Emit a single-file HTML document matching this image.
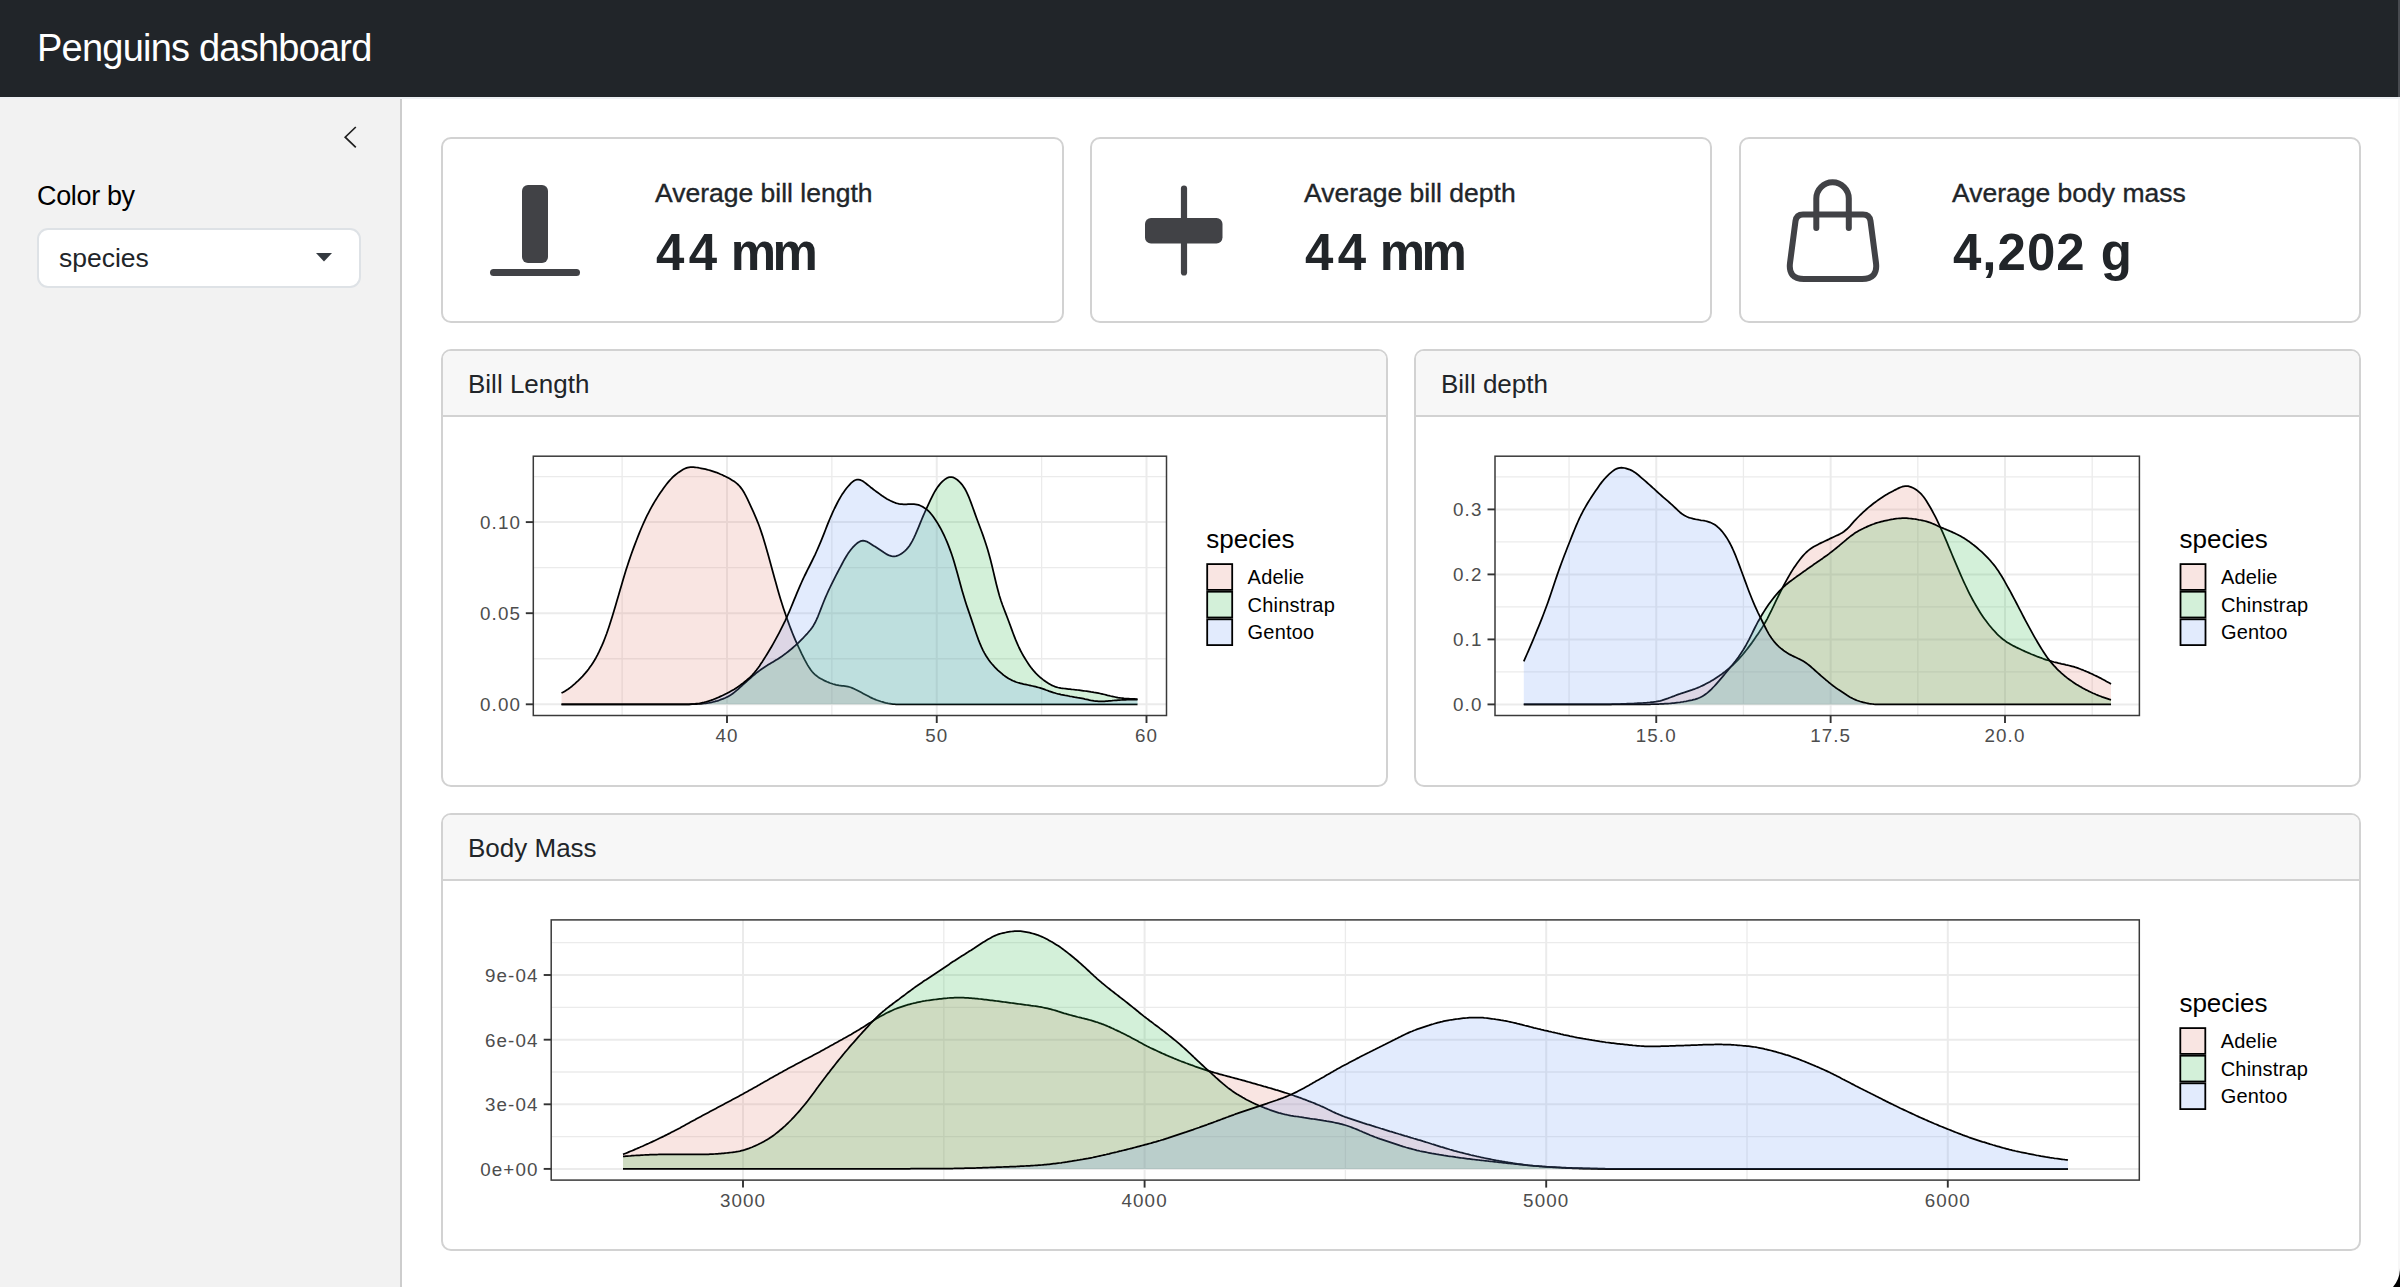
<!DOCTYPE html>
<html>
<head>
<meta charset="utf-8">
<title>Penguins dashboard</title>
<style>
html,body{margin:0;padding:0;}
body{width:2400px;height:1287px;overflow:hidden;position:relative;background:#fff;font-family:"Liberation Sans",sans-serif;color:#212529;}
.abs{position:absolute;}
#hdr{left:0;top:0;width:2400px;height:97px;background:#212529;}
#hdrline{left:0;top:97px;width:2400px;height:2px;background:#edf0f3;}
#title{left:37px;top:26px;font-size:38px;line-height:44px;color:#fff;letter-spacing:-0.78px;white-space:nowrap;}
#side{left:0;top:99px;width:400px;height:1188px;background:#f2f2f2;border-right:2px solid #cdcdcd;}
#colorby{left:37px;top:180px;font-size:27px;line-height:32px;color:#000;letter-spacing:-0.35px;white-space:nowrap;}
#select{left:37px;top:228px;width:320px;height:56px;background:#fff;border:2px solid #dee2e6;border-radius:11px;}
#selval{left:59px;top:243px;font-size:26.5px;line-height:30px;color:#212529;white-space:nowrap;}
.card{position:absolute;box-sizing:border-box;border:2px solid #d2d2d2;border-radius:10px;background:#fff;overflow:hidden;}
.vb-title{position:absolute;font-size:26.5px;line-height:29px;color:#212529;white-space:nowrap;-webkit-text-stroke:0.35px #212529;}
.vb-val{position:absolute;font-size:51px;line-height:56px;font-weight:bold;color:#212529;white-space:nowrap;letter-spacing:-0.2px;}
.chd{position:absolute;left:0;top:0;right:0;height:64px;background:#f7f7f7;border-bottom:2px solid #d2d2d2;}
.chd span{position:absolute;left:25px;top:18px;font-size:26px;line-height:30px;color:#212529;white-space:nowrap;}
svg text.ax{font-family:"Liberation Sans",sans-serif;font-size:18.8px;fill:#4d4d4d;letter-spacing:1.1px;}
svg text.lt{font-family:"Liberation Sans",sans-serif;font-size:26px;fill:#000;}
svg text.ll{font-family:"Liberation Sans",sans-serif;font-size:20px;fill:#000;letter-spacing:0.2px;}
</style>
</head>
<body>
<div id="hdr" class="abs"></div>
<div id="hdrline" class="abs"></div>
<div id="title" class="abs">Penguins dashboard</div>
<div class="abs" style="left:2398px;top:0;width:2px;height:97px;background:#484b50;"></div>
<div class="abs" style="left:2398px;top:99px;width:2px;height:1188px;background:#f7f7f7;"></div>

<div id="side" class="abs"></div>
<svg class="abs" style="left:340px;top:122px" width="24" height="30" viewBox="0 0 24 30">
  <path d="M15.8 5 L5.2 15.2 L15.8 25.4" fill="none" stroke="#1f1f1f" stroke-width="1.7"/>
</svg>
<div id="colorby" class="abs">Color by</div>
<div id="select" class="abs"></div>
<div id="selval" class="abs">species</div>
<svg class="abs" style="left:314px;top:250px" width="20" height="14" viewBox="0 0 20 14">
  <path d="M2 3 L18 3 L10 11.5 Z" fill="#343a40"/>
</svg>

<!-- value boxes -->
<div class="card" style="left:441px;top:137px;width:623px;height:186px;">
  <div class="vb-title" style="left:212px;top:40px;">Average bill length</div>
  <div class="vb-val" style="left:213px;top:86px;"><span style="letter-spacing:4.3px">4</span>4 <span style="letter-spacing:-3.6px">m</span>m</div>
</div>
<div class="card" style="left:1090px;top:137px;width:622px;height:186px;">
  <div class="vb-title" style="left:212px;top:40px;">Average bill depth</div>
  <div class="vb-val" style="left:213px;top:86px;"><span style="letter-spacing:4.3px">4</span>4 <span style="letter-spacing:-3.6px">m</span>m</div>
</div>
<div class="card" style="left:1739px;top:137px;width:622px;height:186px;">
  <div class="vb-title" style="left:211px;top:40px;">Average body mass</div>
  <div class="vb-val" style="left:212px;top:86px;letter-spacing:1px;">4,202 g</div>
</div>

<!-- icons -->
<svg class="abs" style="left:0;top:0" width="2400" height="330">
  <rect x="522" y="185" width="26" height="78" rx="6" fill="#414246"/>
  <rect x="490" y="269" width="90" height="7" rx="3.5" fill="#414246"/>
  <line x1="1184" y1="188.5" x2="1184" y2="272.5" stroke="#414246" stroke-width="6.2" stroke-linecap="round"/>
  <rect x="1145" y="218" width="77.5" height="25.5" rx="6" fill="#414246"/>
  <path d="M1803 214.5 L1863 214.5 Q1869.5 214.5 1870.5 221 L1876 263 Q1878 279 1862 279 L1804 279 Q1788 279 1790 263 L1795.5 221 Q1796.5 214.5 1803 214.5 Z" fill="none" stroke="#414246" stroke-width="6"/>
  <path d="M1816.3 228 L1816.3 198.5 A16.25 16.25 0 0 1 1848.8 198.5 L1848.8 228" fill="none" stroke="#414246" stroke-width="6" stroke-linecap="round"/>
</svg>

<!-- chart cards -->
<div class="card" style="left:441px;top:349px;width:947px;height:438px;">
  <div class="chd"><span>Bill Length</span></div>
</div>
<div class="card" style="left:1414px;top:349px;width:947px;height:438px;">
  <div class="chd"><span>Bill depth</span></div>
</div>
<div class="card" style="left:441px;top:813px;width:1920px;height:438px;">
  <div class="chd"><span>Body Mass</span></div>
</div>

<svg class="abs" style="left:0;top:0" width="2400" height="1287">
<line x1="533.3" y1="658.75" x2="1166.5" y2="658.75" stroke="#ebebeb" stroke-width="1.3"/>
<line x1="533.3" y1="567.65" x2="1166.5" y2="567.65" stroke="#ebebeb" stroke-width="1.3"/>
<line x1="533.3" y1="476.55" x2="1166.5" y2="476.55" stroke="#ebebeb" stroke-width="1.3"/>
<line x1="622.125" y1="456.2" x2="622.125" y2="715.5" stroke="#ebebeb" stroke-width="1.3"/>
<line x1="831.875" y1="456.2" x2="831.875" y2="715.5" stroke="#ebebeb" stroke-width="1.3"/>
<line x1="1041.625" y1="456.2" x2="1041.625" y2="715.5" stroke="#ebebeb" stroke-width="1.3"/>
<line x1="533.3" y1="704.3" x2="1166.5" y2="704.3" stroke="#ebebeb" stroke-width="2.0"/>
<line x1="533.3" y1="613.2" x2="1166.5" y2="613.2" stroke="#ebebeb" stroke-width="2.0"/>
<line x1="533.3" y1="522.1" x2="1166.5" y2="522.1" stroke="#ebebeb" stroke-width="2.0"/>
<line x1="727.0" y1="456.2" x2="727.0" y2="715.5" stroke="#ebebeb" stroke-width="2.0"/>
<line x1="936.75" y1="456.2" x2="936.75" y2="715.5" stroke="#ebebeb" stroke-width="2.0"/>
<line x1="1146.5" y1="456.2" x2="1146.5" y2="715.5" stroke="#ebebeb" stroke-width="2.0"/>
<path d="M561.5 693.1L563.0 692.3L564.5 691.4L566.0 690.5L567.5 689.6L569.0 688.5L570.5 687.4L572.0 686.2L573.5 684.9L575.0 683.6L576.5 682.2L578.0 680.8L579.5 679.3L581.0 677.8L582.5 676.3L584.0 674.6L585.5 672.9L587.0 671.1L588.5 669.2L590.0 667.1L591.5 665.0L593.0 662.7L594.5 660.3L596.0 657.7L597.5 654.9L599.0 651.9L600.5 648.7L602.0 645.4L603.5 641.8L605.0 638.0L606.5 634.0L608.0 629.7L609.5 625.2L611.0 620.5L612.5 615.7L614.0 610.7L615.5 605.7L617.0 600.6L618.5 595.5L620.0 590.3L621.5 585.2L623.0 580.0L624.5 575.0L626.0 570.1L627.5 565.4L629.0 560.9L630.5 556.5L632.0 552.2L633.5 548.1L635.0 544.1L636.5 540.2L638.0 536.4L639.5 532.6L641.0 529.0L642.5 525.5L644.0 522.1L645.5 518.8L647.0 515.7L648.5 512.8L650.0 509.9L651.5 507.1L653.0 504.5L654.5 501.9L656.0 499.5L657.5 497.1L659.0 494.8L660.5 492.6L662.0 490.4L663.5 488.3L665.0 486.2L666.5 484.3L668.0 482.4L669.5 480.6L671.0 479.0L672.5 477.4L674.0 476.0L675.5 474.8L677.0 473.6L678.5 472.4L680.0 471.4L681.5 470.4L683.0 469.5L684.5 468.7L686.0 468.1L687.5 467.6L689.0 467.3L690.5 467.1L692.0 467.1L693.5 467.2L695.0 467.3L696.5 467.5L698.0 467.7L699.5 468.0L701.0 468.3L702.5 468.6L704.0 468.9L705.5 469.2L707.0 469.6L708.5 470.0L710.0 470.4L711.5 470.8L713.0 471.3L714.5 471.8L716.0 472.3L717.5 472.9L719.0 473.5L720.5 474.2L722.0 474.8L723.5 475.6L725.0 476.3L726.5 477.0L728.0 477.8L729.5 478.6L731.0 479.5L732.5 480.4L734.0 481.3L735.5 482.4L737.0 483.6L738.5 485.0L740.0 486.6L741.5 488.6L743.0 490.8L744.5 493.3L746.0 496.2L747.5 499.2L749.0 502.4L750.5 505.6L752.0 508.9L753.5 512.2L755.0 515.6L756.5 519.1L758.0 522.8L759.5 526.8L761.0 531.1L762.5 535.6L764.0 540.5L765.5 545.5L767.0 550.7L768.5 556.1L770.0 561.5L771.5 566.9L773.0 572.4L774.5 577.9L776.0 583.3L777.5 588.7L779.0 593.9L780.5 598.9L782.0 603.7L783.5 608.4L785.0 612.8L786.5 617.2L788.0 621.4L789.5 625.5L791.0 629.4L792.5 633.2L794.0 636.9L795.5 640.4L797.0 643.7L798.5 647.0L800.0 650.2L801.5 653.4L803.0 656.4L804.5 659.4L806.0 662.2L807.5 664.9L809.0 667.3L810.5 669.5L812.0 671.5L813.5 673.1L815.0 674.6L816.5 675.8L818.0 676.9L819.5 677.9L821.0 678.8L822.5 679.6L824.0 680.4L825.5 681.1L827.0 681.8L828.5 682.4L830.0 683.0L831.5 683.5L833.0 684.0L834.5 684.4L836.0 684.8L837.5 685.1L839.0 685.4L840.5 685.6L842.0 685.8L843.5 685.9L845.0 686.1L846.5 686.3L848.0 686.6L849.5 687.0L851.0 687.5L852.5 688.1L854.0 688.7L855.5 689.5L857.0 690.2L858.5 691.0L860.0 691.8L861.5 692.6L863.0 693.4L864.5 694.2L866.0 695.0L867.5 695.8L869.0 696.6L870.5 697.4L872.0 698.1L873.5 698.8L875.0 699.4L876.5 700.0L878.0 700.5L879.5 701.0L881.0 701.5L882.5 701.9L884.0 702.4L885.5 702.8L887.0 703.1L888.5 703.5L890.0 703.7L891.5 703.9L893.0 704.1L894.5 704.2L896.0 704.3L897.5 704.3L899.0 704.3L900.5 704.3L902.0 704.3L903.5 704.3L905.0 704.3L906.5 704.3L908.0 704.3L909.5 704.3L911.0 704.3L912.5 704.3L914.0 704.3L915.5 704.3L917.0 704.3L918.5 704.3L920.0 704.3L921.5 704.3L923.0 704.3L924.5 704.3L926.0 704.3L927.5 704.3L929.0 704.3L930.5 704.3L932.0 704.3L933.5 704.3L935.0 704.3L936.5 704.3L938.0 704.3L939.5 704.3L941.0 704.3L942.5 704.3L944.0 704.3L945.5 704.3L947.0 704.3L948.5 704.3L950.0 704.3L951.5 704.3L953.0 704.3L954.5 704.3L956.0 704.3L957.5 704.3L959.0 704.3L960.5 704.3L962.0 704.3L963.5 704.3L965.0 704.3L966.5 704.3L968.0 704.3L969.5 704.3L971.0 704.3L972.5 704.3L974.0 704.3L975.5 704.3L977.0 704.3L978.5 704.3L980.0 704.3L981.5 704.3L983.0 704.3L984.5 704.3L986.0 704.3L987.5 704.3L989.0 704.3L990.5 704.3L992.0 704.3L993.5 704.3L995.0 704.3L996.5 704.3L998.0 704.3L999.5 704.3L1001.0 704.3L1002.5 704.3L1004.0 704.3L1005.5 704.3L1007.0 704.3L1008.5 704.3L1010.0 704.3L1011.5 704.3L1013.0 704.3L1014.5 704.3L1016.0 704.3L1017.5 704.3L1019.0 704.3L1020.5 704.3L1022.0 704.3L1023.5 704.3L1025.0 704.3L1026.5 704.3L1028.0 704.3L1029.5 704.3L1031.0 704.3L1032.5 704.3L1034.0 704.3L1035.5 704.3L1037.0 704.3L1038.5 704.3L1040.0 704.3L1041.5 704.3L1043.0 704.3L1044.5 704.3L1046.0 704.3L1047.5 704.3L1049.0 704.3L1050.5 704.3L1052.0 704.3L1053.5 704.3L1055.0 704.3L1056.5 704.3L1058.0 704.3L1059.5 704.3L1061.0 704.3L1062.5 704.3L1064.0 704.3L1065.5 704.3L1067.0 704.3L1068.5 704.3L1070.0 704.3L1071.5 704.3L1073.0 704.3L1074.5 704.3L1076.0 704.3L1077.5 704.3L1079.0 704.3L1080.5 704.3L1082.0 704.3L1083.5 704.3L1085.0 704.3L1086.5 704.3L1088.0 704.3L1089.5 704.3L1091.0 704.3L1092.5 704.3L1094.0 704.3L1095.5 704.3L1097.0 704.3L1098.5 704.3L1100.0 704.3L1101.5 704.3L1103.0 704.3L1104.5 704.3L1106.0 704.3L1107.5 704.3L1109.0 704.3L1110.5 704.3L1112.0 704.3L1113.5 704.3L1115.0 704.3L1116.5 704.3L1118.0 704.3L1119.5 704.3L1121.0 704.3L1122.5 704.3L1124.0 704.3L1125.5 704.3L1127.0 704.3L1128.5 704.3L1130.0 704.3L1131.5 704.3L1133.0 704.3L1134.5 704.3L1136.0 704.3L1137.5 704.3 L1137.5 704.3 L561.5 704.3 Z" fill="#E27B70" fill-opacity="0.2" stroke="none"/>
<path d="M561.5 693.1L563.0 692.3L564.5 691.4L566.0 690.5L567.5 689.6L569.0 688.5L570.5 687.4L572.0 686.2L573.5 684.9L575.0 683.6L576.5 682.2L578.0 680.8L579.5 679.3L581.0 677.8L582.5 676.3L584.0 674.6L585.5 672.9L587.0 671.1L588.5 669.2L590.0 667.1L591.5 665.0L593.0 662.7L594.5 660.3L596.0 657.7L597.5 654.9L599.0 651.9L600.5 648.7L602.0 645.4L603.5 641.8L605.0 638.0L606.5 634.0L608.0 629.7L609.5 625.2L611.0 620.5L612.5 615.7L614.0 610.7L615.5 605.7L617.0 600.6L618.5 595.5L620.0 590.3L621.5 585.2L623.0 580.0L624.5 575.0L626.0 570.1L627.5 565.4L629.0 560.9L630.5 556.5L632.0 552.2L633.5 548.1L635.0 544.1L636.5 540.2L638.0 536.4L639.5 532.6L641.0 529.0L642.5 525.5L644.0 522.1L645.5 518.8L647.0 515.7L648.5 512.8L650.0 509.9L651.5 507.1L653.0 504.5L654.5 501.9L656.0 499.5L657.5 497.1L659.0 494.8L660.5 492.6L662.0 490.4L663.5 488.3L665.0 486.2L666.5 484.3L668.0 482.4L669.5 480.6L671.0 479.0L672.5 477.4L674.0 476.0L675.5 474.8L677.0 473.6L678.5 472.4L680.0 471.4L681.5 470.4L683.0 469.5L684.5 468.7L686.0 468.1L687.5 467.6L689.0 467.3L690.5 467.1L692.0 467.1L693.5 467.2L695.0 467.3L696.5 467.5L698.0 467.7L699.5 468.0L701.0 468.3L702.5 468.6L704.0 468.9L705.5 469.2L707.0 469.6L708.5 470.0L710.0 470.4L711.5 470.8L713.0 471.3L714.5 471.8L716.0 472.3L717.5 472.9L719.0 473.5L720.5 474.2L722.0 474.8L723.5 475.6L725.0 476.3L726.5 477.0L728.0 477.8L729.5 478.6L731.0 479.5L732.5 480.4L734.0 481.3L735.5 482.4L737.0 483.6L738.5 485.0L740.0 486.6L741.5 488.6L743.0 490.8L744.5 493.3L746.0 496.2L747.5 499.2L749.0 502.4L750.5 505.6L752.0 508.9L753.5 512.2L755.0 515.6L756.5 519.1L758.0 522.8L759.5 526.8L761.0 531.1L762.5 535.6L764.0 540.5L765.5 545.5L767.0 550.7L768.5 556.1L770.0 561.5L771.5 566.9L773.0 572.4L774.5 577.9L776.0 583.3L777.5 588.7L779.0 593.9L780.5 598.9L782.0 603.7L783.5 608.4L785.0 612.8L786.5 617.2L788.0 621.4L789.5 625.5L791.0 629.4L792.5 633.2L794.0 636.9L795.5 640.4L797.0 643.7L798.5 647.0L800.0 650.2L801.5 653.4L803.0 656.4L804.5 659.4L806.0 662.2L807.5 664.9L809.0 667.3L810.5 669.5L812.0 671.5L813.5 673.1L815.0 674.6L816.5 675.8L818.0 676.9L819.5 677.9L821.0 678.8L822.5 679.6L824.0 680.4L825.5 681.1L827.0 681.8L828.5 682.4L830.0 683.0L831.5 683.5L833.0 684.0L834.5 684.4L836.0 684.8L837.5 685.1L839.0 685.4L840.5 685.6L842.0 685.8L843.5 685.9L845.0 686.1L846.5 686.3L848.0 686.6L849.5 687.0L851.0 687.5L852.5 688.1L854.0 688.7L855.5 689.5L857.0 690.2L858.5 691.0L860.0 691.8L861.5 692.6L863.0 693.4L864.5 694.2L866.0 695.0L867.5 695.8L869.0 696.6L870.5 697.4L872.0 698.1L873.5 698.8L875.0 699.4L876.5 700.0L878.0 700.5L879.5 701.0L881.0 701.5L882.5 701.9L884.0 702.4L885.5 702.8L887.0 703.1L888.5 703.5L890.0 703.7L891.5 703.9L893.0 704.1L894.5 704.2L896.0 704.3L897.5 704.3L899.0 704.3L900.5 704.3L902.0 704.3L903.5 704.3L905.0 704.3L906.5 704.3L908.0 704.3L909.5 704.3L911.0 704.3L912.5 704.3L914.0 704.3L915.5 704.3L917.0 704.3L918.5 704.3L920.0 704.3L921.5 704.3L923.0 704.3L924.5 704.3L926.0 704.3L927.5 704.3L929.0 704.3L930.5 704.3L932.0 704.3L933.5 704.3L935.0 704.3L936.5 704.3L938.0 704.3L939.5 704.3L941.0 704.3L942.5 704.3L944.0 704.3L945.5 704.3L947.0 704.3L948.5 704.3L950.0 704.3L951.5 704.3L953.0 704.3L954.5 704.3L956.0 704.3L957.5 704.3L959.0 704.3L960.5 704.3L962.0 704.3L963.5 704.3L965.0 704.3L966.5 704.3L968.0 704.3L969.5 704.3L971.0 704.3L972.5 704.3L974.0 704.3L975.5 704.3L977.0 704.3L978.5 704.3L980.0 704.3L981.5 704.3L983.0 704.3L984.5 704.3L986.0 704.3L987.5 704.3L989.0 704.3L990.5 704.3L992.0 704.3L993.5 704.3L995.0 704.3L996.5 704.3L998.0 704.3L999.5 704.3L1001.0 704.3L1002.5 704.3L1004.0 704.3L1005.5 704.3L1007.0 704.3L1008.5 704.3L1010.0 704.3L1011.5 704.3L1013.0 704.3L1014.5 704.3L1016.0 704.3L1017.5 704.3L1019.0 704.3L1020.5 704.3L1022.0 704.3L1023.5 704.3L1025.0 704.3L1026.5 704.3L1028.0 704.3L1029.5 704.3L1031.0 704.3L1032.5 704.3L1034.0 704.3L1035.5 704.3L1037.0 704.3L1038.5 704.3L1040.0 704.3L1041.5 704.3L1043.0 704.3L1044.5 704.3L1046.0 704.3L1047.5 704.3L1049.0 704.3L1050.5 704.3L1052.0 704.3L1053.5 704.3L1055.0 704.3L1056.5 704.3L1058.0 704.3L1059.5 704.3L1061.0 704.3L1062.5 704.3L1064.0 704.3L1065.5 704.3L1067.0 704.3L1068.5 704.3L1070.0 704.3L1071.5 704.3L1073.0 704.3L1074.5 704.3L1076.0 704.3L1077.5 704.3L1079.0 704.3L1080.5 704.3L1082.0 704.3L1083.5 704.3L1085.0 704.3L1086.5 704.3L1088.0 704.3L1089.5 704.3L1091.0 704.3L1092.5 704.3L1094.0 704.3L1095.5 704.3L1097.0 704.3L1098.5 704.3L1100.0 704.3L1101.5 704.3L1103.0 704.3L1104.5 704.3L1106.0 704.3L1107.5 704.3L1109.0 704.3L1110.5 704.3L1112.0 704.3L1113.5 704.3L1115.0 704.3L1116.5 704.3L1118.0 704.3L1119.5 704.3L1121.0 704.3L1122.5 704.3L1124.0 704.3L1125.5 704.3L1127.0 704.3L1128.5 704.3L1130.0 704.3L1131.5 704.3L1133.0 704.3L1134.5 704.3L1136.0 704.3L1137.5 704.3" fill="none" stroke="#000" stroke-width="1.75" stroke-linejoin="round"/>
<path d="M561.5 704.3L563.0 704.3L564.5 704.3L566.0 704.3L567.5 704.3L569.0 704.3L570.5 704.3L572.0 704.3L573.5 704.3L575.0 704.3L576.5 704.3L578.0 704.3L579.5 704.3L581.0 704.3L582.5 704.3L584.0 704.3L585.5 704.3L587.0 704.3L588.5 704.3L590.0 704.3L591.5 704.3L593.0 704.3L594.5 704.3L596.0 704.3L597.5 704.3L599.0 704.3L600.5 704.3L602.0 704.3L603.5 704.3L605.0 704.3L606.5 704.3L608.0 704.3L609.5 704.3L611.0 704.3L612.5 704.3L614.0 704.3L615.5 704.3L617.0 704.3L618.5 704.3L620.0 704.3L621.5 704.3L623.0 704.3L624.5 704.3L626.0 704.3L627.5 704.3L629.0 704.3L630.5 704.3L632.0 704.3L633.5 704.3L635.0 704.3L636.5 704.3L638.0 704.3L639.5 704.3L641.0 704.3L642.5 704.3L644.0 704.3L645.5 704.3L647.0 704.3L648.5 704.3L650.0 704.3L651.5 704.3L653.0 704.3L654.5 704.3L656.0 704.3L657.5 704.3L659.0 704.3L660.5 704.3L662.0 704.3L663.5 704.3L665.0 704.3L666.5 704.3L668.0 704.3L669.5 704.3L671.0 704.3L672.5 704.3L674.0 704.3L675.5 704.3L677.0 704.3L678.5 704.3L680.0 704.3L681.5 704.3L683.0 704.3L684.5 704.3L686.0 704.3L687.5 704.3L689.0 704.3L690.5 704.3L692.0 704.2L693.5 704.2L695.0 704.2L696.5 704.1L698.0 704.0L699.5 703.9L701.0 703.8L702.5 703.7L704.0 703.5L705.5 703.4L707.0 703.2L708.5 703.0L710.0 702.7L711.5 702.4L713.0 702.0L714.5 701.7L716.0 701.2L717.5 700.8L719.0 700.3L720.5 699.7L722.0 699.2L723.5 698.6L725.0 698.0L726.5 697.3L728.0 696.6L729.5 695.7L731.0 694.8L732.5 693.8L734.0 692.6L735.5 691.4L737.0 690.1L738.5 688.8L740.0 687.4L741.5 686.1L743.0 684.7L744.5 683.3L746.0 682.0L747.5 680.7L749.0 679.4L750.5 678.1L752.0 676.7L753.5 675.4L755.0 674.2L756.5 672.9L758.0 671.7L759.5 670.6L761.0 669.5L762.5 668.5L764.0 667.5L765.5 666.5L767.0 665.6L768.5 664.6L770.0 663.7L771.5 662.8L773.0 661.9L774.5 661.0L776.0 660.1L777.5 659.2L779.0 658.2L780.5 657.2L782.0 656.2L783.5 655.1L785.0 654.0L786.5 652.9L788.0 651.7L789.5 650.5L791.0 649.3L792.5 648.0L794.0 646.7L795.5 645.4L797.0 644.0L798.5 642.6L800.0 641.1L801.5 639.6L803.0 638.1L804.5 636.5L806.0 634.9L807.5 633.3L809.0 631.5L810.5 629.7L812.0 627.7L813.5 625.4L815.0 622.8L816.5 619.7L818.0 616.3L819.5 612.5L821.0 608.6L822.5 604.8L824.0 601.0L825.5 597.4L827.0 594.0L828.5 590.7L830.0 587.5L831.5 584.4L833.0 581.3L834.5 578.3L836.0 575.4L837.5 572.5L839.0 569.6L840.5 566.8L842.0 564.0L843.5 561.2L845.0 558.5L846.5 556.0L848.0 553.6L849.5 551.5L851.0 549.5L852.5 547.7L854.0 546.1L855.5 544.6L857.0 543.3L858.5 542.2L860.0 541.4L861.5 540.9L863.0 540.7L864.5 540.9L866.0 541.3L867.5 541.9L869.0 542.8L870.5 543.7L872.0 544.7L873.5 545.7L875.0 546.6L876.5 547.6L878.0 548.6L879.5 549.6L881.0 550.6L882.5 551.6L884.0 552.6L885.5 553.5L887.0 554.4L888.5 555.1L890.0 555.7L891.5 556.2L893.0 556.4L894.5 556.4L896.0 556.1L897.5 555.7L899.0 555.0L900.5 554.2L902.0 553.2L903.5 552.1L905.0 550.8L906.5 549.3L908.0 547.6L909.5 545.7L911.0 543.3L912.5 540.6L914.0 537.6L915.5 534.4L917.0 530.9L918.5 527.3L920.0 523.6L921.5 520.0L923.0 516.4L924.5 513.0L926.0 509.6L927.5 506.3L929.0 503.1L930.5 499.9L932.0 496.9L933.5 493.9L935.0 491.2L936.5 488.7L938.0 486.6L939.5 484.6L941.0 482.9L942.5 481.4L944.0 480.1L945.5 478.9L947.0 478.0L948.5 477.4L950.0 477.0L951.5 477.0L953.0 477.4L954.5 478.0L956.0 478.9L957.5 480.0L959.0 481.4L960.5 482.9L962.0 484.6L963.5 486.7L965.0 489.0L966.5 491.8L968.0 495.1L969.5 498.7L971.0 502.6L972.5 506.7L974.0 510.9L975.5 515.1L977.0 519.2L978.5 523.2L980.0 527.2L981.5 531.3L983.0 535.4L984.5 539.7L986.0 544.2L987.5 549.0L989.0 554.2L990.5 559.8L992.0 565.8L993.5 572.1L995.0 578.5L996.5 584.7L998.0 590.5L999.5 595.9L1001.0 600.7L1002.5 605.0L1004.0 609.0L1005.5 612.9L1007.0 616.8L1008.5 620.7L1010.0 624.8L1011.5 628.9L1013.0 633.0L1014.5 636.9L1016.0 640.7L1017.5 644.2L1019.0 647.5L1020.5 650.5L1022.0 653.3L1023.5 656.0L1025.0 658.5L1026.5 660.9L1028.0 663.2L1029.5 665.4L1031.0 667.5L1032.5 669.4L1034.0 671.2L1035.5 672.9L1037.0 674.4L1038.5 675.8L1040.0 677.2L1041.5 678.4L1043.0 679.6L1044.5 680.7L1046.0 681.8L1047.5 682.8L1049.0 683.7L1050.5 684.6L1052.0 685.4L1053.5 686.0L1055.0 686.6L1056.5 687.1L1058.0 687.5L1059.5 687.8L1061.0 688.1L1062.5 688.3L1064.0 688.5L1065.5 688.7L1067.0 688.9L1068.5 689.1L1070.0 689.2L1071.5 689.4L1073.0 689.5L1074.5 689.7L1076.0 689.8L1077.5 690.0L1079.0 690.2L1080.5 690.4L1082.0 690.6L1083.5 690.8L1085.0 691.0L1086.5 691.2L1088.0 691.4L1089.5 691.6L1091.0 691.9L1092.5 692.1L1094.0 692.4L1095.5 692.6L1097.0 692.9L1098.5 693.2L1100.0 693.5L1101.5 693.8L1103.0 694.2L1104.5 694.5L1106.0 694.9L1107.5 695.3L1109.0 695.6L1110.5 696.0L1112.0 696.3L1113.5 696.7L1115.0 697.0L1116.5 697.3L1118.0 697.6L1119.5 697.8L1121.0 698.0L1122.5 698.2L1124.0 698.4L1125.5 698.5L1127.0 698.6L1128.5 698.7L1130.0 698.8L1131.5 698.8L1133.0 698.9L1134.5 698.9L1136.0 699.0L1137.5 699.0 L1137.5 704.3 L561.5 704.3 Z" fill="#24B441" fill-opacity="0.2" stroke="none"/>
<path d="M561.5 704.3L563.0 704.3L564.5 704.3L566.0 704.3L567.5 704.3L569.0 704.3L570.5 704.3L572.0 704.3L573.5 704.3L575.0 704.3L576.5 704.3L578.0 704.3L579.5 704.3L581.0 704.3L582.5 704.3L584.0 704.3L585.5 704.3L587.0 704.3L588.5 704.3L590.0 704.3L591.5 704.3L593.0 704.3L594.5 704.3L596.0 704.3L597.5 704.3L599.0 704.3L600.5 704.3L602.0 704.3L603.5 704.3L605.0 704.3L606.5 704.3L608.0 704.3L609.5 704.3L611.0 704.3L612.5 704.3L614.0 704.3L615.5 704.3L617.0 704.3L618.5 704.3L620.0 704.3L621.5 704.3L623.0 704.3L624.5 704.3L626.0 704.3L627.5 704.3L629.0 704.3L630.5 704.3L632.0 704.3L633.5 704.3L635.0 704.3L636.5 704.3L638.0 704.3L639.5 704.3L641.0 704.3L642.5 704.3L644.0 704.3L645.5 704.3L647.0 704.3L648.5 704.3L650.0 704.3L651.5 704.3L653.0 704.3L654.5 704.3L656.0 704.3L657.5 704.3L659.0 704.3L660.5 704.3L662.0 704.3L663.5 704.3L665.0 704.3L666.5 704.3L668.0 704.3L669.5 704.3L671.0 704.3L672.5 704.3L674.0 704.3L675.5 704.3L677.0 704.3L678.5 704.3L680.0 704.3L681.5 704.3L683.0 704.3L684.5 704.3L686.0 704.3L687.5 704.3L689.0 704.3L690.5 704.3L692.0 704.2L693.5 704.2L695.0 704.2L696.5 704.1L698.0 704.0L699.5 703.9L701.0 703.8L702.5 703.7L704.0 703.5L705.5 703.4L707.0 703.2L708.5 703.0L710.0 702.7L711.5 702.4L713.0 702.0L714.5 701.7L716.0 701.2L717.5 700.8L719.0 700.3L720.5 699.7L722.0 699.2L723.5 698.6L725.0 698.0L726.5 697.3L728.0 696.6L729.5 695.7L731.0 694.8L732.5 693.8L734.0 692.6L735.5 691.4L737.0 690.1L738.5 688.8L740.0 687.4L741.5 686.1L743.0 684.7L744.5 683.3L746.0 682.0L747.5 680.7L749.0 679.4L750.5 678.1L752.0 676.7L753.5 675.4L755.0 674.2L756.5 672.9L758.0 671.7L759.5 670.6L761.0 669.5L762.5 668.5L764.0 667.5L765.5 666.5L767.0 665.6L768.5 664.6L770.0 663.7L771.5 662.8L773.0 661.9L774.5 661.0L776.0 660.1L777.5 659.2L779.0 658.2L780.5 657.2L782.0 656.2L783.5 655.1L785.0 654.0L786.5 652.9L788.0 651.7L789.5 650.5L791.0 649.3L792.5 648.0L794.0 646.7L795.5 645.4L797.0 644.0L798.5 642.6L800.0 641.1L801.5 639.6L803.0 638.1L804.5 636.5L806.0 634.9L807.5 633.3L809.0 631.5L810.5 629.7L812.0 627.7L813.5 625.4L815.0 622.8L816.5 619.7L818.0 616.3L819.5 612.5L821.0 608.6L822.5 604.8L824.0 601.0L825.5 597.4L827.0 594.0L828.5 590.7L830.0 587.5L831.5 584.4L833.0 581.3L834.5 578.3L836.0 575.4L837.5 572.5L839.0 569.6L840.5 566.8L842.0 564.0L843.5 561.2L845.0 558.5L846.5 556.0L848.0 553.6L849.5 551.5L851.0 549.5L852.5 547.7L854.0 546.1L855.5 544.6L857.0 543.3L858.5 542.2L860.0 541.4L861.5 540.9L863.0 540.7L864.5 540.9L866.0 541.3L867.5 541.9L869.0 542.8L870.5 543.7L872.0 544.7L873.5 545.7L875.0 546.6L876.5 547.6L878.0 548.6L879.5 549.6L881.0 550.6L882.5 551.6L884.0 552.6L885.5 553.5L887.0 554.4L888.5 555.1L890.0 555.7L891.5 556.2L893.0 556.4L894.5 556.4L896.0 556.1L897.5 555.7L899.0 555.0L900.5 554.2L902.0 553.2L903.5 552.1L905.0 550.8L906.5 549.3L908.0 547.6L909.5 545.7L911.0 543.3L912.5 540.6L914.0 537.6L915.5 534.4L917.0 530.9L918.5 527.3L920.0 523.6L921.5 520.0L923.0 516.4L924.5 513.0L926.0 509.6L927.5 506.3L929.0 503.1L930.5 499.9L932.0 496.9L933.5 493.9L935.0 491.2L936.5 488.7L938.0 486.6L939.5 484.6L941.0 482.9L942.5 481.4L944.0 480.1L945.5 478.9L947.0 478.0L948.5 477.4L950.0 477.0L951.5 477.0L953.0 477.4L954.5 478.0L956.0 478.9L957.5 480.0L959.0 481.4L960.5 482.9L962.0 484.6L963.5 486.7L965.0 489.0L966.5 491.8L968.0 495.1L969.5 498.7L971.0 502.6L972.5 506.7L974.0 510.9L975.5 515.1L977.0 519.2L978.5 523.2L980.0 527.2L981.5 531.3L983.0 535.4L984.5 539.7L986.0 544.2L987.5 549.0L989.0 554.2L990.5 559.8L992.0 565.8L993.5 572.1L995.0 578.5L996.5 584.7L998.0 590.5L999.5 595.9L1001.0 600.7L1002.5 605.0L1004.0 609.0L1005.5 612.9L1007.0 616.8L1008.5 620.7L1010.0 624.8L1011.5 628.9L1013.0 633.0L1014.5 636.9L1016.0 640.7L1017.5 644.2L1019.0 647.5L1020.5 650.5L1022.0 653.3L1023.5 656.0L1025.0 658.5L1026.5 660.9L1028.0 663.2L1029.5 665.4L1031.0 667.5L1032.5 669.4L1034.0 671.2L1035.5 672.9L1037.0 674.4L1038.5 675.8L1040.0 677.2L1041.5 678.4L1043.0 679.6L1044.5 680.7L1046.0 681.8L1047.5 682.8L1049.0 683.7L1050.5 684.6L1052.0 685.4L1053.5 686.0L1055.0 686.6L1056.5 687.1L1058.0 687.5L1059.5 687.8L1061.0 688.1L1062.5 688.3L1064.0 688.5L1065.5 688.7L1067.0 688.9L1068.5 689.1L1070.0 689.2L1071.5 689.4L1073.0 689.5L1074.5 689.7L1076.0 689.8L1077.5 690.0L1079.0 690.2L1080.5 690.4L1082.0 690.6L1083.5 690.8L1085.0 691.0L1086.5 691.2L1088.0 691.4L1089.5 691.6L1091.0 691.9L1092.5 692.1L1094.0 692.4L1095.5 692.6L1097.0 692.9L1098.5 693.2L1100.0 693.5L1101.5 693.8L1103.0 694.2L1104.5 694.5L1106.0 694.9L1107.5 695.3L1109.0 695.6L1110.5 696.0L1112.0 696.3L1113.5 696.7L1115.0 697.0L1116.5 697.3L1118.0 697.6L1119.5 697.8L1121.0 698.0L1122.5 698.2L1124.0 698.4L1125.5 698.5L1127.0 698.6L1128.5 698.7L1130.0 698.8L1131.5 698.8L1133.0 698.9L1134.5 698.9L1136.0 699.0L1137.5 699.0" fill="none" stroke="#000" stroke-width="1.75" stroke-linejoin="round"/>
<path d="M561.5 704.3L563.0 704.3L564.5 704.3L566.0 704.3L567.5 704.3L569.0 704.3L570.5 704.3L572.0 704.3L573.5 704.3L575.0 704.3L576.5 704.3L578.0 704.3L579.5 704.3L581.0 704.3L582.5 704.3L584.0 704.3L585.5 704.3L587.0 704.3L588.5 704.3L590.0 704.3L591.5 704.3L593.0 704.3L594.5 704.3L596.0 704.3L597.5 704.3L599.0 704.3L600.5 704.3L602.0 704.3L603.5 704.3L605.0 704.3L606.5 704.3L608.0 704.3L609.5 704.3L611.0 704.3L612.5 704.3L614.0 704.3L615.5 704.3L617.0 704.3L618.5 704.3L620.0 704.3L621.5 704.3L623.0 704.3L624.5 704.3L626.0 704.3L627.5 704.3L629.0 704.3L630.5 704.3L632.0 704.3L633.5 704.3L635.0 704.3L636.5 704.3L638.0 704.3L639.5 704.3L641.0 704.3L642.5 704.3L644.0 704.3L645.5 704.3L647.0 704.3L648.5 704.3L650.0 704.3L651.5 704.3L653.0 704.3L654.5 704.3L656.0 704.3L657.5 704.3L659.0 704.3L660.5 704.3L662.0 704.3L663.5 704.3L665.0 704.3L666.5 704.3L668.0 704.3L669.5 704.3L671.0 704.3L672.5 704.3L674.0 704.3L675.5 704.3L677.0 704.3L678.5 704.3L680.0 704.3L681.5 704.3L683.0 704.3L684.5 704.3L686.0 704.3L687.5 704.3L689.0 704.3L690.5 704.2L692.0 704.1L693.5 704.0L695.0 703.9L696.5 703.7L698.0 703.5L699.5 703.3L701.0 703.0L702.5 702.7L704.0 702.4L705.5 702.0L707.0 701.6L708.5 701.2L710.0 700.7L711.5 700.1L713.0 699.6L714.5 699.0L716.0 698.4L717.5 697.7L719.0 697.1L720.5 696.4L722.0 695.7L723.5 695.0L725.0 694.2L726.5 693.5L728.0 692.7L729.5 691.9L731.0 691.1L732.5 690.2L734.0 689.4L735.5 688.4L737.0 687.5L738.5 686.5L740.0 685.4L741.5 684.3L743.0 683.2L744.5 682.0L746.0 680.8L747.5 679.5L749.0 678.2L750.5 676.8L752.0 675.3L753.5 673.7L755.0 671.9L756.5 670.0L758.0 668.0L759.5 665.9L761.0 663.6L762.5 661.4L764.0 659.0L765.5 656.6L767.0 654.2L768.5 651.8L770.0 649.3L771.5 646.7L773.0 644.1L774.5 641.4L776.0 638.7L777.5 635.9L779.0 633.1L780.5 630.2L782.0 627.2L783.5 624.2L785.0 621.1L786.5 617.8L788.0 614.5L789.5 611.1L791.0 607.5L792.5 603.9L794.0 600.2L795.5 596.6L797.0 592.9L798.5 589.4L800.0 585.9L801.5 582.5L803.0 579.2L804.5 576.0L806.0 573.0L807.5 569.9L809.0 567.0L810.5 564.0L812.0 561.0L813.5 557.9L815.0 554.8L816.5 551.5L818.0 548.2L819.5 544.7L821.0 541.1L822.5 537.4L824.0 533.6L825.5 529.8L827.0 525.9L828.5 522.2L830.0 518.5L831.5 515.1L833.0 511.7L834.5 508.5L836.0 505.5L837.5 502.5L839.0 499.7L840.5 497.1L842.0 494.6L843.5 492.4L845.0 490.3L846.5 488.3L848.0 486.5L849.5 484.8L851.0 483.2L852.5 481.9L854.0 480.8L855.5 480.0L857.0 479.6L858.5 479.6L860.0 479.9L861.5 480.5L863.0 481.3L864.5 482.4L866.0 483.5L867.5 484.7L869.0 485.9L870.5 487.2L872.0 488.3L873.5 489.5L875.0 490.6L876.5 491.7L878.0 492.8L879.5 493.9L881.0 495.0L882.5 496.1L884.0 497.1L885.5 498.0L887.0 498.9L888.5 499.7L890.0 500.5L891.5 501.2L893.0 501.9L894.5 502.5L896.0 503.1L897.5 503.5L899.0 503.9L900.5 504.1L902.0 504.2L903.5 504.3L905.0 504.3L906.5 504.3L908.0 504.2L909.5 504.2L911.0 504.1L912.5 504.1L914.0 504.2L915.5 504.3L917.0 504.6L918.5 504.9L920.0 505.5L921.5 506.2L923.0 506.9L924.5 507.9L926.0 508.9L927.5 510.1L929.0 511.5L930.5 513.2L932.0 515.0L933.5 517.0L935.0 519.2L936.5 521.5L938.0 523.9L939.5 526.5L941.0 529.2L942.5 532.1L944.0 535.2L945.5 538.5L947.0 541.9L948.5 545.6L950.0 549.6L951.5 553.8L953.0 558.3L954.5 563.2L956.0 568.4L957.5 573.8L959.0 579.3L960.5 584.8L962.0 590.2L963.5 595.3L965.0 600.2L966.5 604.9L968.0 609.4L969.5 613.7L971.0 618.1L972.5 622.6L974.0 627.0L975.5 631.5L977.0 635.8L978.5 639.9L980.0 643.7L981.5 647.2L983.0 650.3L984.5 653.1L986.0 655.7L987.5 658.0L989.0 660.2L990.5 662.2L992.0 664.0L993.5 665.7L995.0 667.3L996.5 668.8L998.0 670.3L999.5 671.6L1001.0 672.9L1002.5 674.2L1004.0 675.4L1005.5 676.5L1007.0 677.5L1008.5 678.5L1010.0 679.3L1011.5 680.1L1013.0 680.8L1014.5 681.4L1016.0 682.0L1017.5 682.5L1019.0 682.9L1020.5 683.3L1022.0 683.7L1023.5 684.1L1025.0 684.4L1026.5 684.7L1028.0 685.0L1029.5 685.3L1031.0 685.7L1032.5 686.0L1034.0 686.3L1035.5 686.7L1037.0 687.1L1038.5 687.5L1040.0 687.9L1041.5 688.4L1043.0 688.9L1044.5 689.4L1046.0 690.0L1047.5 690.5L1049.0 691.1L1050.5 691.6L1052.0 692.1L1053.5 692.6L1055.0 693.0L1056.5 693.5L1058.0 693.9L1059.5 694.2L1061.0 694.6L1062.5 694.9L1064.0 695.2L1065.5 695.5L1067.0 695.7L1068.5 696.0L1070.0 696.3L1071.5 696.5L1073.0 696.8L1074.5 697.1L1076.0 697.3L1077.5 697.6L1079.0 697.8L1080.5 698.1L1082.0 698.4L1083.5 698.7L1085.0 699.1L1086.5 699.4L1088.0 699.7L1089.5 700.1L1091.0 700.4L1092.5 700.6L1094.0 700.9L1095.5 701.1L1097.0 701.2L1098.5 701.3L1100.0 701.4L1101.5 701.4L1103.0 701.4L1104.5 701.3L1106.0 701.2L1107.5 701.1L1109.0 700.9L1110.5 700.8L1112.0 700.7L1113.5 700.5L1115.0 700.4L1116.5 700.3L1118.0 700.1L1119.5 700.1L1121.0 700.0L1122.5 699.9L1124.0 699.8L1125.5 699.8L1127.0 699.7L1128.5 699.7L1130.0 699.6L1131.5 699.6L1133.0 699.6L1134.5 699.5L1136.0 699.5L1137.5 699.5 L1137.5 704.3 L561.5 704.3 Z" fill="#6C9AF5" fill-opacity="0.2" stroke="none"/>
<path d="M561.5 704.3L563.0 704.3L564.5 704.3L566.0 704.3L567.5 704.3L569.0 704.3L570.5 704.3L572.0 704.3L573.5 704.3L575.0 704.3L576.5 704.3L578.0 704.3L579.5 704.3L581.0 704.3L582.5 704.3L584.0 704.3L585.5 704.3L587.0 704.3L588.5 704.3L590.0 704.3L591.5 704.3L593.0 704.3L594.5 704.3L596.0 704.3L597.5 704.3L599.0 704.3L600.5 704.3L602.0 704.3L603.5 704.3L605.0 704.3L606.5 704.3L608.0 704.3L609.5 704.3L611.0 704.3L612.5 704.3L614.0 704.3L615.5 704.3L617.0 704.3L618.5 704.3L620.0 704.3L621.5 704.3L623.0 704.3L624.5 704.3L626.0 704.3L627.5 704.3L629.0 704.3L630.5 704.3L632.0 704.3L633.5 704.3L635.0 704.3L636.5 704.3L638.0 704.3L639.5 704.3L641.0 704.3L642.5 704.3L644.0 704.3L645.5 704.3L647.0 704.3L648.5 704.3L650.0 704.3L651.5 704.3L653.0 704.3L654.5 704.3L656.0 704.3L657.5 704.3L659.0 704.3L660.5 704.3L662.0 704.3L663.5 704.3L665.0 704.3L666.5 704.3L668.0 704.3L669.5 704.3L671.0 704.3L672.5 704.3L674.0 704.3L675.5 704.3L677.0 704.3L678.5 704.3L680.0 704.3L681.5 704.3L683.0 704.3L684.5 704.3L686.0 704.3L687.5 704.3L689.0 704.3L690.5 704.2L692.0 704.1L693.5 704.0L695.0 703.9L696.5 703.7L698.0 703.5L699.5 703.3L701.0 703.0L702.5 702.7L704.0 702.4L705.5 702.0L707.0 701.6L708.5 701.2L710.0 700.7L711.5 700.1L713.0 699.6L714.5 699.0L716.0 698.4L717.5 697.7L719.0 697.1L720.5 696.4L722.0 695.7L723.5 695.0L725.0 694.2L726.5 693.5L728.0 692.7L729.5 691.9L731.0 691.1L732.5 690.2L734.0 689.4L735.5 688.4L737.0 687.5L738.5 686.5L740.0 685.4L741.5 684.3L743.0 683.2L744.5 682.0L746.0 680.8L747.5 679.5L749.0 678.2L750.5 676.8L752.0 675.3L753.5 673.7L755.0 671.9L756.5 670.0L758.0 668.0L759.5 665.9L761.0 663.6L762.5 661.4L764.0 659.0L765.5 656.6L767.0 654.2L768.5 651.8L770.0 649.3L771.5 646.7L773.0 644.1L774.5 641.4L776.0 638.7L777.5 635.9L779.0 633.1L780.5 630.2L782.0 627.2L783.5 624.2L785.0 621.1L786.5 617.8L788.0 614.5L789.5 611.1L791.0 607.5L792.5 603.9L794.0 600.2L795.5 596.6L797.0 592.9L798.5 589.4L800.0 585.9L801.5 582.5L803.0 579.2L804.5 576.0L806.0 573.0L807.5 569.9L809.0 567.0L810.5 564.0L812.0 561.0L813.5 557.9L815.0 554.8L816.5 551.5L818.0 548.2L819.5 544.7L821.0 541.1L822.5 537.4L824.0 533.6L825.5 529.8L827.0 525.9L828.5 522.2L830.0 518.5L831.5 515.1L833.0 511.7L834.5 508.5L836.0 505.5L837.5 502.5L839.0 499.7L840.5 497.1L842.0 494.6L843.5 492.4L845.0 490.3L846.5 488.3L848.0 486.5L849.5 484.8L851.0 483.2L852.5 481.9L854.0 480.8L855.5 480.0L857.0 479.6L858.5 479.6L860.0 479.9L861.5 480.5L863.0 481.3L864.5 482.4L866.0 483.5L867.5 484.7L869.0 485.9L870.5 487.2L872.0 488.3L873.5 489.5L875.0 490.6L876.5 491.7L878.0 492.8L879.5 493.9L881.0 495.0L882.5 496.1L884.0 497.1L885.5 498.0L887.0 498.9L888.5 499.7L890.0 500.5L891.5 501.2L893.0 501.9L894.5 502.5L896.0 503.1L897.5 503.5L899.0 503.9L900.5 504.1L902.0 504.2L903.5 504.3L905.0 504.3L906.5 504.3L908.0 504.2L909.5 504.2L911.0 504.1L912.5 504.1L914.0 504.2L915.5 504.3L917.0 504.6L918.5 504.9L920.0 505.5L921.5 506.2L923.0 506.9L924.5 507.9L926.0 508.9L927.5 510.1L929.0 511.5L930.5 513.2L932.0 515.0L933.5 517.0L935.0 519.2L936.5 521.5L938.0 523.9L939.5 526.5L941.0 529.2L942.5 532.1L944.0 535.2L945.5 538.5L947.0 541.9L948.5 545.6L950.0 549.6L951.5 553.8L953.0 558.3L954.5 563.2L956.0 568.4L957.5 573.8L959.0 579.3L960.5 584.8L962.0 590.2L963.5 595.3L965.0 600.2L966.5 604.9L968.0 609.4L969.5 613.7L971.0 618.1L972.5 622.6L974.0 627.0L975.5 631.5L977.0 635.8L978.5 639.9L980.0 643.7L981.5 647.2L983.0 650.3L984.5 653.1L986.0 655.7L987.5 658.0L989.0 660.2L990.5 662.2L992.0 664.0L993.5 665.7L995.0 667.3L996.5 668.8L998.0 670.3L999.5 671.6L1001.0 672.9L1002.5 674.2L1004.0 675.4L1005.5 676.5L1007.0 677.5L1008.5 678.5L1010.0 679.3L1011.5 680.1L1013.0 680.8L1014.5 681.4L1016.0 682.0L1017.5 682.5L1019.0 682.9L1020.5 683.3L1022.0 683.7L1023.5 684.1L1025.0 684.4L1026.5 684.7L1028.0 685.0L1029.5 685.3L1031.0 685.7L1032.5 686.0L1034.0 686.3L1035.5 686.7L1037.0 687.1L1038.5 687.5L1040.0 687.9L1041.5 688.4L1043.0 688.9L1044.5 689.4L1046.0 690.0L1047.5 690.5L1049.0 691.1L1050.5 691.6L1052.0 692.1L1053.5 692.6L1055.0 693.0L1056.5 693.5L1058.0 693.9L1059.5 694.2L1061.0 694.6L1062.5 694.9L1064.0 695.2L1065.5 695.5L1067.0 695.7L1068.5 696.0L1070.0 696.3L1071.5 696.5L1073.0 696.8L1074.5 697.1L1076.0 697.3L1077.5 697.6L1079.0 697.8L1080.5 698.1L1082.0 698.4L1083.5 698.7L1085.0 699.1L1086.5 699.4L1088.0 699.7L1089.5 700.1L1091.0 700.4L1092.5 700.6L1094.0 700.9L1095.5 701.1L1097.0 701.2L1098.5 701.3L1100.0 701.4L1101.5 701.4L1103.0 701.4L1104.5 701.3L1106.0 701.2L1107.5 701.1L1109.0 700.9L1110.5 700.8L1112.0 700.7L1113.5 700.5L1115.0 700.4L1116.5 700.3L1118.0 700.1L1119.5 700.1L1121.0 700.0L1122.5 699.9L1124.0 699.8L1125.5 699.8L1127.0 699.7L1128.5 699.7L1130.0 699.6L1131.5 699.6L1133.0 699.6L1134.5 699.5L1136.0 699.5L1137.5 699.5" fill="none" stroke="#000" stroke-width="1.75" stroke-linejoin="round"/>
<rect x="533.3" y="456.2" width="633.2" height="259.3" fill="none" stroke="#3a3a3a" stroke-width="1.5"/>
<line x1="727.0" y1="715.5" x2="727.0" y2="723.0" stroke="#333" stroke-width="1.9"/>
<text x="727.0" y="742.3" text-anchor="middle" class="ax">40</text>
<line x1="936.75" y1="715.5" x2="936.75" y2="723.0" stroke="#333" stroke-width="1.9"/>
<text x="936.75" y="742.3" text-anchor="middle" class="ax">50</text>
<line x1="1146.5" y1="715.5" x2="1146.5" y2="723.0" stroke="#333" stroke-width="1.9"/>
<text x="1146.5" y="742.3" text-anchor="middle" class="ax">60</text>
<line x1="525.8" y1="704.3" x2="533.3" y2="704.3" stroke="#333" stroke-width="1.9"/>
<text x="521" y="711.0999999999999" text-anchor="end" class="ax">0.00</text>
<line x1="525.8" y1="613.2" x2="533.3" y2="613.2" stroke="#333" stroke-width="1.9"/>
<text x="521" y="620.0" text-anchor="end" class="ax">0.05</text>
<line x1="525.8" y1="522.1" x2="533.3" y2="522.1" stroke="#333" stroke-width="1.9"/>
<text x="521" y="528.9" text-anchor="end" class="ax">0.10</text>
<text x="1206.3" y="547.6" class="lt">species</text>
<rect x="1207.2" y="564.1" width="25" height="25.8" fill="#fff" />
<rect x="1207.2" y="564.1" width="25" height="25.8" fill="#E27B70" fill-opacity="0.2" stroke="#000" stroke-width="1.8"/>
<text x="1247.6" y="584.0" class="ll">Adelie</text>
<rect x="1207.2" y="591.7" width="25" height="25.8" fill="#fff" />
<rect x="1207.2" y="591.7" width="25" height="25.8" fill="#24B441" fill-opacity="0.2" stroke="#000" stroke-width="1.8"/>
<text x="1247.6" y="611.6" class="ll">Chinstrap</text>
<rect x="1207.2" y="619.3000000000001" width="25" height="25.8" fill="#fff" />
<rect x="1207.2" y="619.3000000000001" width="25" height="25.8" fill="#6C9AF5" fill-opacity="0.2" stroke="#000" stroke-width="1.8"/>
<text x="1247.6" y="639.2" class="ll">Gentoo</text>
<line x1="1495" y1="671.9" x2="2139.4" y2="671.9" stroke="#ebebeb" stroke-width="1.3"/>
<line x1="1495" y1="606.9" x2="2139.4" y2="606.9" stroke="#ebebeb" stroke-width="1.3"/>
<line x1="1495" y1="541.9" x2="2139.4" y2="541.9" stroke="#ebebeb" stroke-width="1.3"/>
<line x1="1495" y1="476.9" x2="2139.4" y2="476.9" stroke="#ebebeb" stroke-width="1.3"/>
<line x1="1569.0625" y1="456.2" x2="1569.0625" y2="715.5" stroke="#ebebeb" stroke-width="1.3"/>
<line x1="1743.4375" y1="456.2" x2="1743.4375" y2="715.5" stroke="#ebebeb" stroke-width="1.3"/>
<line x1="1917.8125" y1="456.2" x2="1917.8125" y2="715.5" stroke="#ebebeb" stroke-width="1.3"/>
<line x1="2092.1875" y1="456.2" x2="2092.1875" y2="715.5" stroke="#ebebeb" stroke-width="1.3"/>
<line x1="1495" y1="704.4" x2="2139.4" y2="704.4" stroke="#ebebeb" stroke-width="2.0"/>
<line x1="1495" y1="639.4" x2="2139.4" y2="639.4" stroke="#ebebeb" stroke-width="2.0"/>
<line x1="1495" y1="574.4" x2="2139.4" y2="574.4" stroke="#ebebeb" stroke-width="2.0"/>
<line x1="1495" y1="509.4" x2="2139.4" y2="509.4" stroke="#ebebeb" stroke-width="2.0"/>
<line x1="1656.25" y1="456.2" x2="1656.25" y2="715.5" stroke="#ebebeb" stroke-width="2.0"/>
<line x1="1830.625" y1="456.2" x2="1830.625" y2="715.5" stroke="#ebebeb" stroke-width="2.0"/>
<line x1="2005.0" y1="456.2" x2="2005.0" y2="715.5" stroke="#ebebeb" stroke-width="2.0"/>
<path d="M1523.8 704.4L1525.3 704.4L1526.8 704.4L1528.3 704.4L1529.8 704.4L1531.3 704.4L1532.8 704.4L1534.3 704.4L1535.8 704.4L1537.3 704.4L1538.8 704.4L1540.3 704.4L1541.8 704.4L1543.3 704.4L1544.8 704.4L1546.3 704.4L1547.8 704.4L1549.3 704.4L1550.8 704.4L1552.3 704.4L1553.8 704.4L1555.3 704.4L1556.8 704.4L1558.3 704.4L1559.8 704.4L1561.3 704.4L1562.8 704.4L1564.3 704.4L1565.8 704.4L1567.3 704.4L1568.8 704.4L1570.3 704.4L1571.8 704.4L1573.3 704.4L1574.8 704.4L1576.3 704.4L1577.8 704.4L1579.3 704.4L1580.8 704.4L1582.3 704.4L1583.8 704.4L1585.3 704.4L1586.8 704.4L1588.3 704.4L1589.8 704.4L1591.3 704.4L1592.8 704.4L1594.3 704.4L1595.8 704.4L1597.3 704.4L1598.8 704.4L1600.3 704.4L1601.8 704.4L1603.4 704.4L1604.9 704.4L1606.4 704.3L1607.9 704.3L1609.4 704.3L1610.9 704.3L1612.4 704.2L1613.9 704.2L1615.4 704.1L1616.9 704.1L1618.4 704.0L1619.9 704.0L1621.4 703.9L1622.9 703.9L1624.4 703.8L1625.9 703.8L1627.4 703.7L1628.9 703.6L1630.4 703.6L1631.9 703.5L1633.4 703.5L1634.9 703.4L1636.4 703.3L1637.9 703.2L1639.4 703.2L1640.9 703.1L1642.4 703.0L1643.9 702.9L1645.4 702.8L1646.9 702.7L1648.4 702.5L1649.9 702.4L1651.4 702.2L1652.9 702.1L1654.4 701.9L1655.9 701.7L1657.4 701.4L1658.9 701.1L1660.4 700.8L1661.9 700.4L1663.4 699.9L1664.9 699.4L1666.4 698.9L1667.9 698.4L1669.4 697.8L1670.9 697.2L1672.4 696.6L1673.9 696.1L1675.4 695.5L1676.9 694.9L1678.4 694.4L1679.9 693.9L1681.5 693.3L1683.0 692.8L1684.5 692.4L1686.0 691.9L1687.5 691.4L1689.0 690.9L1690.5 690.4L1692.0 689.9L1693.5 689.3L1695.0 688.8L1696.5 688.2L1698.0 687.6L1699.5 687.0L1701.0 686.3L1702.5 685.6L1704.0 684.9L1705.5 684.1L1707.0 683.3L1708.5 682.5L1710.0 681.7L1711.5 680.8L1713.0 679.9L1714.5 679.0L1716.0 678.0L1717.5 677.0L1719.0 676.0L1720.5 674.9L1722.0 673.9L1723.5 672.7L1725.0 671.6L1726.5 670.4L1728.0 669.2L1729.5 668.0L1731.0 666.7L1732.5 665.3L1734.0 663.9L1735.5 662.4L1737.0 660.9L1738.5 659.3L1740.0 657.7L1741.5 656.0L1743.0 654.2L1744.5 652.4L1746.0 650.5L1747.5 648.6L1749.0 646.6L1750.5 644.6L1752.0 642.6L1753.5 640.4L1755.0 638.3L1756.5 636.1L1758.0 633.9L1759.6 631.6L1761.1 629.3L1762.6 626.9L1764.1 624.4L1765.6 621.8L1767.1 619.1L1768.6 616.2L1770.1 613.2L1771.6 610.2L1773.1 607.0L1774.6 603.9L1776.1 600.7L1777.6 597.6L1779.1 594.5L1780.6 591.5L1782.1 588.6L1783.6 585.7L1785.1 582.9L1786.6 580.1L1788.1 577.5L1789.6 574.9L1791.1 572.3L1792.6 569.9L1794.1 567.6L1795.6 565.4L1797.1 563.3L1798.6 561.3L1800.1 559.3L1801.6 557.4L1803.1 555.6L1804.6 554.0L1806.1 552.5L1807.6 551.1L1809.1 549.9L1810.6 548.8L1812.1 547.8L1813.6 546.8L1815.1 546.0L1816.6 545.2L1818.1 544.4L1819.6 543.6L1821.1 542.9L1822.6 542.2L1824.1 541.5L1825.6 540.8L1827.1 540.1L1828.6 539.4L1830.1 538.6L1831.6 537.9L1833.1 537.2L1834.6 536.5L1836.1 535.8L1837.7 535.1L1839.2 534.4L1840.7 533.6L1842.2 532.7L1843.7 531.7L1845.2 530.5L1846.7 529.3L1848.2 527.8L1849.7 526.3L1851.2 524.6L1852.7 522.9L1854.2 521.2L1855.7 519.6L1857.2 518.0L1858.7 516.5L1860.2 515.0L1861.7 513.6L1863.2 512.2L1864.7 510.8L1866.2 509.5L1867.7 508.2L1869.2 506.9L1870.7 505.7L1872.2 504.5L1873.7 503.3L1875.2 502.2L1876.7 501.1L1878.2 500.0L1879.7 499.0L1881.2 498.0L1882.7 497.0L1884.2 496.0L1885.7 495.1L1887.2 494.2L1888.7 493.3L1890.2 492.5L1891.7 491.7L1893.2 490.9L1894.7 490.1L1896.2 489.4L1897.7 488.6L1899.2 487.9L1900.7 487.3L1902.2 486.7L1903.7 486.3L1905.2 486.1L1906.7 486.1L1908.2 486.2L1909.7 486.6L1911.2 487.1L1912.7 487.8L1914.2 488.6L1915.8 489.6L1917.3 490.6L1918.8 491.8L1920.3 493.2L1921.8 494.7L1923.3 496.5L1924.8 498.5L1926.3 500.7L1927.8 503.2L1929.3 505.7L1930.8 508.3L1932.3 511.0L1933.8 513.8L1935.3 516.7L1936.8 519.7L1938.3 522.8L1939.8 526.0L1941.3 529.3L1942.8 532.7L1944.3 536.1L1945.8 539.6L1947.3 543.2L1948.8 546.8L1950.3 550.4L1951.8 554.0L1953.3 557.6L1954.8 561.2L1956.3 564.7L1957.8 568.2L1959.3 571.7L1960.8 575.1L1962.3 578.5L1963.8 581.8L1965.3 585.0L1966.8 588.2L1968.3 591.3L1969.8 594.3L1971.3 597.2L1972.8 600.0L1974.3 602.7L1975.8 605.3L1977.3 607.8L1978.8 610.3L1980.3 612.7L1981.8 615.0L1983.3 617.2L1984.8 619.3L1986.3 621.3L1987.8 623.3L1989.3 625.2L1990.8 627.0L1992.3 628.8L1993.9 630.5L1995.4 632.2L1996.9 633.8L1998.4 635.3L1999.9 636.7L2001.4 638.0L2002.9 639.2L2004.4 640.3L2005.9 641.4L2007.4 642.4L2008.9 643.3L2010.4 644.2L2011.9 645.1L2013.4 645.9L2014.9 646.6L2016.4 647.4L2017.9 648.1L2019.4 648.8L2020.9 649.5L2022.4 650.2L2023.9 650.9L2025.4 651.6L2026.9 652.2L2028.4 652.9L2029.9 653.5L2031.4 654.2L2032.9 654.8L2034.4 655.4L2035.9 656.0L2037.4 656.6L2038.9 657.1L2040.4 657.7L2041.9 658.2L2043.4 658.8L2044.9 659.3L2046.4 659.8L2047.9 660.2L2049.4 660.7L2050.9 661.1L2052.4 661.6L2053.9 662.0L2055.4 662.3L2056.9 662.7L2058.4 663.1L2059.9 663.4L2061.4 663.8L2062.9 664.1L2064.4 664.4L2065.9 664.8L2067.4 665.1L2068.9 665.5L2070.4 665.9L2072.0 666.3L2073.5 666.7L2075.0 667.2L2076.5 667.6L2078.0 668.1L2079.5 668.7L2081.0 669.3L2082.5 669.8L2084.0 670.5L2085.5 671.1L2087.0 671.7L2088.5 672.4L2090.0 673.1L2091.5 673.7L2093.0 674.4L2094.5 675.2L2096.0 675.9L2097.5 676.6L2099.0 677.4L2100.5 678.1L2102.0 678.9L2103.5 679.7L2105.0 680.5L2106.5 681.4L2108.0 682.2L2109.5 683.0L2111.0 683.9 L2111.0 704.4 L1523.8 704.4 Z" fill="#E27B70" fill-opacity="0.2" stroke="none"/>
<path d="M1523.8 704.4L1525.3 704.4L1526.8 704.4L1528.3 704.4L1529.8 704.4L1531.3 704.4L1532.8 704.4L1534.3 704.4L1535.8 704.4L1537.3 704.4L1538.8 704.4L1540.3 704.4L1541.8 704.4L1543.3 704.4L1544.8 704.4L1546.3 704.4L1547.8 704.4L1549.3 704.4L1550.8 704.4L1552.3 704.4L1553.8 704.4L1555.3 704.4L1556.8 704.4L1558.3 704.4L1559.8 704.4L1561.3 704.4L1562.8 704.4L1564.3 704.4L1565.8 704.4L1567.3 704.4L1568.8 704.4L1570.3 704.4L1571.8 704.4L1573.3 704.4L1574.8 704.4L1576.3 704.4L1577.8 704.4L1579.3 704.4L1580.8 704.4L1582.3 704.4L1583.8 704.4L1585.3 704.4L1586.8 704.4L1588.3 704.4L1589.8 704.4L1591.3 704.4L1592.8 704.4L1594.3 704.4L1595.8 704.4L1597.3 704.4L1598.8 704.4L1600.3 704.4L1601.8 704.4L1603.4 704.4L1604.9 704.4L1606.4 704.3L1607.9 704.3L1609.4 704.3L1610.9 704.3L1612.4 704.2L1613.9 704.2L1615.4 704.1L1616.9 704.1L1618.4 704.0L1619.9 704.0L1621.4 703.9L1622.9 703.9L1624.4 703.8L1625.9 703.8L1627.4 703.7L1628.9 703.6L1630.4 703.6L1631.9 703.5L1633.4 703.5L1634.9 703.4L1636.4 703.3L1637.9 703.2L1639.4 703.2L1640.9 703.1L1642.4 703.0L1643.9 702.9L1645.4 702.8L1646.9 702.7L1648.4 702.5L1649.9 702.4L1651.4 702.2L1652.9 702.1L1654.4 701.9L1655.9 701.7L1657.4 701.4L1658.9 701.1L1660.4 700.8L1661.9 700.4L1663.4 699.9L1664.9 699.4L1666.4 698.9L1667.9 698.4L1669.4 697.8L1670.9 697.2L1672.4 696.6L1673.9 696.1L1675.4 695.5L1676.9 694.9L1678.4 694.4L1679.9 693.9L1681.5 693.3L1683.0 692.8L1684.5 692.4L1686.0 691.9L1687.5 691.4L1689.0 690.9L1690.5 690.4L1692.0 689.9L1693.5 689.3L1695.0 688.8L1696.5 688.2L1698.0 687.6L1699.5 687.0L1701.0 686.3L1702.5 685.6L1704.0 684.9L1705.5 684.1L1707.0 683.3L1708.5 682.5L1710.0 681.7L1711.5 680.8L1713.0 679.9L1714.5 679.0L1716.0 678.0L1717.5 677.0L1719.0 676.0L1720.5 674.9L1722.0 673.9L1723.5 672.7L1725.0 671.6L1726.5 670.4L1728.0 669.2L1729.5 668.0L1731.0 666.7L1732.5 665.3L1734.0 663.9L1735.5 662.4L1737.0 660.9L1738.5 659.3L1740.0 657.7L1741.5 656.0L1743.0 654.2L1744.5 652.4L1746.0 650.5L1747.5 648.6L1749.0 646.6L1750.5 644.6L1752.0 642.6L1753.5 640.4L1755.0 638.3L1756.5 636.1L1758.0 633.9L1759.6 631.6L1761.1 629.3L1762.6 626.9L1764.1 624.4L1765.6 621.8L1767.1 619.1L1768.6 616.2L1770.1 613.2L1771.6 610.2L1773.1 607.0L1774.6 603.9L1776.1 600.7L1777.6 597.6L1779.1 594.5L1780.6 591.5L1782.1 588.6L1783.6 585.7L1785.1 582.9L1786.6 580.1L1788.1 577.5L1789.6 574.9L1791.1 572.3L1792.6 569.9L1794.1 567.6L1795.6 565.4L1797.1 563.3L1798.6 561.3L1800.1 559.3L1801.6 557.4L1803.1 555.6L1804.6 554.0L1806.1 552.5L1807.6 551.1L1809.1 549.9L1810.6 548.8L1812.1 547.8L1813.6 546.8L1815.1 546.0L1816.6 545.2L1818.1 544.4L1819.6 543.6L1821.1 542.9L1822.6 542.2L1824.1 541.5L1825.6 540.8L1827.1 540.1L1828.6 539.4L1830.1 538.6L1831.6 537.9L1833.1 537.2L1834.6 536.5L1836.1 535.8L1837.7 535.1L1839.2 534.4L1840.7 533.6L1842.2 532.7L1843.7 531.7L1845.2 530.5L1846.7 529.3L1848.2 527.8L1849.7 526.3L1851.2 524.6L1852.7 522.9L1854.2 521.2L1855.7 519.6L1857.2 518.0L1858.7 516.5L1860.2 515.0L1861.7 513.6L1863.2 512.2L1864.7 510.8L1866.2 509.5L1867.7 508.2L1869.2 506.9L1870.7 505.7L1872.2 504.5L1873.7 503.3L1875.2 502.2L1876.7 501.1L1878.2 500.0L1879.7 499.0L1881.2 498.0L1882.7 497.0L1884.2 496.0L1885.7 495.1L1887.2 494.2L1888.7 493.3L1890.2 492.5L1891.7 491.7L1893.2 490.9L1894.7 490.1L1896.2 489.4L1897.7 488.6L1899.2 487.9L1900.7 487.3L1902.2 486.7L1903.7 486.3L1905.2 486.1L1906.7 486.1L1908.2 486.2L1909.7 486.6L1911.2 487.1L1912.7 487.8L1914.2 488.6L1915.8 489.6L1917.3 490.6L1918.8 491.8L1920.3 493.2L1921.8 494.7L1923.3 496.5L1924.8 498.5L1926.3 500.7L1927.8 503.2L1929.3 505.7L1930.8 508.3L1932.3 511.0L1933.8 513.8L1935.3 516.7L1936.8 519.7L1938.3 522.8L1939.8 526.0L1941.3 529.3L1942.8 532.7L1944.3 536.1L1945.8 539.6L1947.3 543.2L1948.8 546.8L1950.3 550.4L1951.8 554.0L1953.3 557.6L1954.8 561.2L1956.3 564.7L1957.8 568.2L1959.3 571.7L1960.8 575.1L1962.3 578.5L1963.8 581.8L1965.3 585.0L1966.8 588.2L1968.3 591.3L1969.8 594.3L1971.3 597.2L1972.8 600.0L1974.3 602.7L1975.8 605.3L1977.3 607.8L1978.8 610.3L1980.3 612.7L1981.8 615.0L1983.3 617.2L1984.8 619.3L1986.3 621.3L1987.8 623.3L1989.3 625.2L1990.8 627.0L1992.3 628.8L1993.9 630.5L1995.4 632.2L1996.9 633.8L1998.4 635.3L1999.9 636.7L2001.4 638.0L2002.9 639.2L2004.4 640.3L2005.9 641.4L2007.4 642.4L2008.9 643.3L2010.4 644.2L2011.9 645.1L2013.4 645.9L2014.9 646.6L2016.4 647.4L2017.9 648.1L2019.4 648.8L2020.9 649.5L2022.4 650.2L2023.9 650.9L2025.4 651.6L2026.9 652.2L2028.4 652.9L2029.9 653.5L2031.4 654.2L2032.9 654.8L2034.4 655.4L2035.9 656.0L2037.4 656.6L2038.9 657.1L2040.4 657.7L2041.9 658.2L2043.4 658.8L2044.9 659.3L2046.4 659.8L2047.9 660.2L2049.4 660.7L2050.9 661.1L2052.4 661.6L2053.9 662.0L2055.4 662.3L2056.9 662.7L2058.4 663.1L2059.9 663.4L2061.4 663.8L2062.9 664.1L2064.4 664.4L2065.9 664.8L2067.4 665.1L2068.9 665.5L2070.4 665.9L2072.0 666.3L2073.5 666.7L2075.0 667.2L2076.5 667.6L2078.0 668.1L2079.5 668.7L2081.0 669.3L2082.5 669.8L2084.0 670.5L2085.5 671.1L2087.0 671.7L2088.5 672.4L2090.0 673.1L2091.5 673.7L2093.0 674.4L2094.5 675.2L2096.0 675.9L2097.5 676.6L2099.0 677.4L2100.5 678.1L2102.0 678.9L2103.5 679.7L2105.0 680.5L2106.5 681.4L2108.0 682.2L2109.5 683.0L2111.0 683.9" fill="none" stroke="#000" stroke-width="1.75" stroke-linejoin="round"/>
<path d="M1523.8 704.4L1525.3 704.4L1526.8 704.4L1528.3 704.4L1529.8 704.4L1531.3 704.4L1532.8 704.4L1534.3 704.4L1535.8 704.4L1537.3 704.4L1538.8 704.4L1540.3 704.4L1541.8 704.4L1543.3 704.4L1544.8 704.4L1546.3 704.4L1547.8 704.4L1549.3 704.4L1550.8 704.4L1552.3 704.4L1553.8 704.4L1555.3 704.4L1556.8 704.4L1558.3 704.4L1559.8 704.4L1561.3 704.4L1562.8 704.4L1564.3 704.4L1565.8 704.4L1567.3 704.4L1568.8 704.4L1570.3 704.4L1571.8 704.4L1573.3 704.4L1574.8 704.4L1576.3 704.4L1577.8 704.4L1579.3 704.4L1580.8 704.4L1582.3 704.4L1583.8 704.4L1585.3 704.4L1586.8 704.4L1588.3 704.4L1589.8 704.4L1591.3 704.4L1592.8 704.4L1594.3 704.4L1595.8 704.4L1597.3 704.4L1598.8 704.4L1600.3 704.4L1601.8 704.4L1603.4 704.4L1604.9 704.4L1606.4 704.4L1607.9 704.4L1609.4 704.4L1610.9 704.4L1612.4 704.4L1613.9 704.4L1615.4 704.4L1616.9 704.4L1618.4 704.4L1619.9 704.4L1621.4 704.4L1622.9 704.4L1624.4 704.4L1625.9 704.4L1627.4 704.4L1628.9 704.4L1630.4 704.4L1631.9 704.4L1633.4 704.4L1634.9 704.4L1636.4 704.4L1637.9 704.4L1639.4 704.4L1640.9 704.4L1642.4 704.4L1643.9 704.4L1645.4 704.4L1646.9 704.3L1648.4 704.3L1649.9 704.3L1651.4 704.2L1652.9 704.2L1654.4 704.1L1655.9 704.1L1657.4 704.0L1658.9 704.0L1660.4 703.9L1661.9 703.9L1663.4 703.8L1664.9 703.7L1666.4 703.6L1667.9 703.6L1669.4 703.5L1670.9 703.3L1672.4 703.2L1673.9 703.1L1675.4 702.9L1676.9 702.7L1678.4 702.5L1679.9 702.3L1681.5 702.0L1683.0 701.8L1684.5 701.5L1686.0 701.3L1687.5 701.0L1689.0 700.7L1690.5 700.4L1692.0 700.1L1693.5 699.7L1695.0 699.3L1696.5 698.8L1698.0 698.3L1699.5 697.7L1701.0 697.0L1702.5 696.2L1704.0 695.3L1705.5 694.2L1707.0 693.1L1708.5 691.8L1710.0 690.5L1711.5 689.1L1713.0 687.5L1714.5 686.0L1716.0 684.3L1717.5 682.6L1719.0 680.9L1720.5 679.1L1722.0 677.4L1723.5 675.6L1725.0 673.8L1726.5 671.9L1728.0 670.1L1729.5 668.3L1731.0 666.5L1732.5 664.7L1734.0 662.9L1735.5 661.0L1737.0 659.0L1738.5 657.0L1740.0 654.8L1741.5 652.6L1743.0 650.3L1744.5 647.8L1746.0 645.2L1747.5 642.4L1749.0 639.6L1750.5 636.6L1752.0 633.6L1753.5 630.5L1755.0 627.5L1756.5 624.6L1758.0 621.7L1759.6 619.0L1761.1 616.3L1762.6 613.8L1764.1 611.4L1765.6 609.1L1767.1 606.8L1768.6 604.6L1770.1 602.5L1771.6 600.5L1773.1 598.5L1774.6 596.6L1776.1 594.8L1777.6 593.1L1779.1 591.4L1780.6 589.8L1782.1 588.3L1783.6 586.9L1785.1 585.5L1786.6 584.2L1788.1 583.0L1789.6 581.8L1791.1 580.7L1792.6 579.6L1794.1 578.5L1795.6 577.4L1797.1 576.3L1798.6 575.3L1800.1 574.2L1801.6 573.1L1803.1 572.0L1804.6 570.9L1806.1 569.9L1807.6 568.8L1809.1 567.8L1810.6 566.7L1812.1 565.7L1813.6 564.6L1815.1 563.6L1816.6 562.5L1818.1 561.5L1819.6 560.5L1821.1 559.4L1822.6 558.4L1824.1 557.3L1825.6 556.2L1827.1 555.2L1828.6 554.1L1830.1 552.9L1831.6 551.8L1833.1 550.6L1834.6 549.4L1836.1 548.2L1837.7 546.9L1839.2 545.7L1840.7 544.4L1842.2 543.1L1843.7 541.9L1845.2 540.6L1846.7 539.3L1848.2 538.1L1849.7 536.9L1851.2 535.8L1852.7 534.7L1854.2 533.6L1855.7 532.6L1857.2 531.7L1858.7 530.8L1860.2 530.0L1861.7 529.2L1863.2 528.5L1864.7 527.7L1866.2 527.1L1867.7 526.4L1869.2 525.7L1870.7 525.1L1872.2 524.5L1873.7 524.0L1875.2 523.4L1876.7 522.9L1878.2 522.5L1879.7 522.1L1881.2 521.7L1882.7 521.3L1884.2 520.9L1885.7 520.6L1887.2 520.3L1888.7 520.0L1890.2 519.7L1891.7 519.4L1893.2 519.2L1894.7 518.9L1896.2 518.7L1897.7 518.5L1899.2 518.4L1900.7 518.3L1902.2 518.2L1903.7 518.2L1905.2 518.2L1906.7 518.2L1908.2 518.3L1909.7 518.5L1911.2 518.6L1912.7 518.8L1914.2 519.0L1915.8 519.2L1917.3 519.5L1918.8 519.8L1920.3 520.0L1921.8 520.3L1923.3 520.7L1924.8 521.0L1926.3 521.4L1927.8 521.8L1929.3 522.3L1930.8 522.9L1932.3 523.5L1933.8 524.1L1935.3 524.8L1936.8 525.5L1938.3 526.2L1939.8 526.9L1941.3 527.5L1942.8 528.1L1944.3 528.8L1945.8 529.4L1947.3 530.0L1948.8 530.6L1950.3 531.2L1951.8 531.9L1953.3 532.6L1954.8 533.2L1956.3 534.0L1957.8 534.7L1959.3 535.5L1960.8 536.3L1962.3 537.2L1963.8 538.1L1965.3 539.1L1966.8 540.0L1968.3 541.1L1969.8 542.1L1971.3 543.2L1972.8 544.4L1974.3 545.5L1975.8 546.7L1977.3 548.0L1978.8 549.3L1980.3 550.6L1981.8 551.9L1983.3 553.3L1984.8 554.8L1986.3 556.3L1987.8 557.8L1989.3 559.5L1990.8 561.2L1992.3 563.0L1993.9 564.9L1995.4 566.8L1996.9 568.9L1998.4 571.1L1999.9 573.4L2001.4 575.8L2002.9 578.3L2004.4 580.9L2005.9 583.6L2007.4 586.3L2008.9 589.0L2010.4 591.7L2011.9 594.5L2013.4 597.3L2014.9 600.2L2016.4 603.0L2017.9 605.9L2019.4 608.8L2020.9 611.7L2022.4 614.6L2023.9 617.5L2025.4 620.3L2026.9 623.1L2028.4 625.9L2029.9 628.6L2031.4 631.4L2032.9 634.1L2034.4 636.8L2035.9 639.4L2037.4 642.0L2038.9 644.5L2040.4 647.0L2041.9 649.4L2043.4 651.8L2044.9 654.1L2046.4 656.3L2047.9 658.4L2049.4 660.3L2050.9 662.2L2052.4 663.9L2053.9 665.6L2055.4 667.2L2056.9 668.8L2058.4 670.3L2059.9 671.7L2061.4 673.1L2062.9 674.4L2064.4 675.7L2065.9 676.9L2067.4 678.1L2068.9 679.2L2070.4 680.3L2072.0 681.4L2073.5 682.4L2075.0 683.4L2076.5 684.4L2078.0 685.3L2079.5 686.2L2081.0 687.1L2082.5 688.0L2084.0 688.8L2085.5 689.6L2087.0 690.3L2088.5 691.1L2090.0 691.8L2091.5 692.5L2093.0 693.2L2094.5 693.8L2096.0 694.5L2097.5 695.1L2099.0 695.7L2100.5 696.3L2102.0 696.9L2103.5 697.4L2105.0 697.9L2106.5 698.4L2108.0 698.9L2109.5 699.4L2111.0 699.8 L2111.0 704.4 L1523.8 704.4 Z" fill="#24B441" fill-opacity="0.2" stroke="none"/>
<path d="M1523.8 704.4L1525.3 704.4L1526.8 704.4L1528.3 704.4L1529.8 704.4L1531.3 704.4L1532.8 704.4L1534.3 704.4L1535.8 704.4L1537.3 704.4L1538.8 704.4L1540.3 704.4L1541.8 704.4L1543.3 704.4L1544.8 704.4L1546.3 704.4L1547.8 704.4L1549.3 704.4L1550.8 704.4L1552.3 704.4L1553.8 704.4L1555.3 704.4L1556.8 704.4L1558.3 704.4L1559.8 704.4L1561.3 704.4L1562.8 704.4L1564.3 704.4L1565.8 704.4L1567.3 704.4L1568.8 704.4L1570.3 704.4L1571.8 704.4L1573.3 704.4L1574.8 704.4L1576.3 704.4L1577.8 704.4L1579.3 704.4L1580.8 704.4L1582.3 704.4L1583.8 704.4L1585.3 704.4L1586.8 704.4L1588.3 704.4L1589.8 704.4L1591.3 704.4L1592.8 704.4L1594.3 704.4L1595.8 704.4L1597.3 704.4L1598.8 704.4L1600.3 704.4L1601.8 704.4L1603.4 704.4L1604.9 704.4L1606.4 704.4L1607.9 704.4L1609.4 704.4L1610.9 704.4L1612.4 704.4L1613.9 704.4L1615.4 704.4L1616.9 704.4L1618.4 704.4L1619.9 704.4L1621.4 704.4L1622.9 704.4L1624.4 704.4L1625.9 704.4L1627.4 704.4L1628.9 704.4L1630.4 704.4L1631.9 704.4L1633.4 704.4L1634.9 704.4L1636.4 704.4L1637.9 704.4L1639.4 704.4L1640.9 704.4L1642.4 704.4L1643.9 704.4L1645.4 704.4L1646.9 704.3L1648.4 704.3L1649.9 704.3L1651.4 704.2L1652.9 704.2L1654.4 704.1L1655.9 704.1L1657.4 704.0L1658.9 704.0L1660.4 703.9L1661.9 703.9L1663.4 703.8L1664.9 703.7L1666.4 703.6L1667.9 703.6L1669.4 703.5L1670.9 703.3L1672.4 703.2L1673.9 703.1L1675.4 702.9L1676.9 702.7L1678.4 702.5L1679.9 702.3L1681.5 702.0L1683.0 701.8L1684.5 701.5L1686.0 701.3L1687.5 701.0L1689.0 700.7L1690.5 700.4L1692.0 700.1L1693.5 699.7L1695.0 699.3L1696.5 698.8L1698.0 698.3L1699.5 697.7L1701.0 697.0L1702.5 696.2L1704.0 695.3L1705.5 694.2L1707.0 693.1L1708.5 691.8L1710.0 690.5L1711.5 689.1L1713.0 687.5L1714.5 686.0L1716.0 684.3L1717.5 682.6L1719.0 680.9L1720.5 679.1L1722.0 677.4L1723.5 675.6L1725.0 673.8L1726.5 671.9L1728.0 670.1L1729.5 668.3L1731.0 666.5L1732.5 664.7L1734.0 662.9L1735.5 661.0L1737.0 659.0L1738.5 657.0L1740.0 654.8L1741.5 652.6L1743.0 650.3L1744.5 647.8L1746.0 645.2L1747.5 642.4L1749.0 639.6L1750.5 636.6L1752.0 633.6L1753.5 630.5L1755.0 627.5L1756.5 624.6L1758.0 621.7L1759.6 619.0L1761.1 616.3L1762.6 613.8L1764.1 611.4L1765.6 609.1L1767.1 606.8L1768.6 604.6L1770.1 602.5L1771.6 600.5L1773.1 598.5L1774.6 596.6L1776.1 594.8L1777.6 593.1L1779.1 591.4L1780.6 589.8L1782.1 588.3L1783.6 586.9L1785.1 585.5L1786.6 584.2L1788.1 583.0L1789.6 581.8L1791.1 580.7L1792.6 579.6L1794.1 578.5L1795.6 577.4L1797.1 576.3L1798.6 575.3L1800.1 574.2L1801.6 573.1L1803.1 572.0L1804.6 570.9L1806.1 569.9L1807.6 568.8L1809.1 567.8L1810.6 566.7L1812.1 565.7L1813.6 564.6L1815.1 563.6L1816.6 562.5L1818.1 561.5L1819.6 560.5L1821.1 559.4L1822.6 558.4L1824.1 557.3L1825.6 556.2L1827.1 555.2L1828.6 554.1L1830.1 552.9L1831.6 551.8L1833.1 550.6L1834.6 549.4L1836.1 548.2L1837.7 546.9L1839.2 545.7L1840.7 544.4L1842.2 543.1L1843.7 541.9L1845.2 540.6L1846.7 539.3L1848.2 538.1L1849.7 536.9L1851.2 535.8L1852.7 534.7L1854.2 533.6L1855.7 532.6L1857.2 531.7L1858.7 530.8L1860.2 530.0L1861.7 529.2L1863.2 528.5L1864.7 527.7L1866.2 527.1L1867.7 526.4L1869.2 525.7L1870.7 525.1L1872.2 524.5L1873.7 524.0L1875.2 523.4L1876.7 522.9L1878.2 522.5L1879.7 522.1L1881.2 521.7L1882.7 521.3L1884.2 520.9L1885.7 520.6L1887.2 520.3L1888.7 520.0L1890.2 519.7L1891.7 519.4L1893.2 519.2L1894.7 518.9L1896.2 518.7L1897.7 518.5L1899.2 518.4L1900.7 518.3L1902.2 518.2L1903.7 518.2L1905.2 518.2L1906.7 518.2L1908.2 518.3L1909.7 518.5L1911.2 518.6L1912.7 518.8L1914.2 519.0L1915.8 519.2L1917.3 519.5L1918.8 519.8L1920.3 520.0L1921.8 520.3L1923.3 520.7L1924.8 521.0L1926.3 521.4L1927.8 521.8L1929.3 522.3L1930.8 522.9L1932.3 523.5L1933.8 524.1L1935.3 524.8L1936.8 525.5L1938.3 526.2L1939.8 526.9L1941.3 527.5L1942.8 528.1L1944.3 528.8L1945.8 529.4L1947.3 530.0L1948.8 530.6L1950.3 531.2L1951.8 531.9L1953.3 532.6L1954.8 533.2L1956.3 534.0L1957.8 534.7L1959.3 535.5L1960.8 536.3L1962.3 537.2L1963.8 538.1L1965.3 539.1L1966.8 540.0L1968.3 541.1L1969.8 542.1L1971.3 543.2L1972.8 544.4L1974.3 545.5L1975.8 546.7L1977.3 548.0L1978.8 549.3L1980.3 550.6L1981.8 551.9L1983.3 553.3L1984.8 554.8L1986.3 556.3L1987.8 557.8L1989.3 559.5L1990.8 561.2L1992.3 563.0L1993.9 564.9L1995.4 566.8L1996.9 568.9L1998.4 571.1L1999.9 573.4L2001.4 575.8L2002.9 578.3L2004.4 580.9L2005.9 583.6L2007.4 586.3L2008.9 589.0L2010.4 591.7L2011.9 594.5L2013.4 597.3L2014.9 600.2L2016.4 603.0L2017.9 605.9L2019.4 608.8L2020.9 611.7L2022.4 614.6L2023.9 617.5L2025.4 620.3L2026.9 623.1L2028.4 625.9L2029.9 628.6L2031.4 631.4L2032.9 634.1L2034.4 636.8L2035.9 639.4L2037.4 642.0L2038.9 644.5L2040.4 647.0L2041.9 649.4L2043.4 651.8L2044.9 654.1L2046.4 656.3L2047.9 658.4L2049.4 660.3L2050.9 662.2L2052.4 663.9L2053.9 665.6L2055.4 667.2L2056.9 668.8L2058.4 670.3L2059.9 671.7L2061.4 673.1L2062.9 674.4L2064.4 675.7L2065.9 676.9L2067.4 678.1L2068.9 679.2L2070.4 680.3L2072.0 681.4L2073.5 682.4L2075.0 683.4L2076.5 684.4L2078.0 685.3L2079.5 686.2L2081.0 687.1L2082.5 688.0L2084.0 688.8L2085.5 689.6L2087.0 690.3L2088.5 691.1L2090.0 691.8L2091.5 692.5L2093.0 693.2L2094.5 693.8L2096.0 694.5L2097.5 695.1L2099.0 695.7L2100.5 696.3L2102.0 696.9L2103.5 697.4L2105.0 697.9L2106.5 698.4L2108.0 698.9L2109.5 699.4L2111.0 699.8" fill="none" stroke="#000" stroke-width="1.75" stroke-linejoin="round"/>
<path d="M1523.8 661.3L1525.3 657.9L1526.8 654.5L1528.3 651.1L1529.8 647.6L1531.3 644.1L1532.8 640.6L1534.3 637.0L1535.8 633.4L1537.3 629.7L1538.8 626.1L1540.3 622.4L1541.8 618.6L1543.3 614.8L1544.8 610.8L1546.3 606.8L1547.8 602.7L1549.3 598.4L1550.8 594.0L1552.3 589.5L1553.8 585.0L1555.3 580.5L1556.8 576.1L1558.3 571.8L1559.8 567.6L1561.3 563.5L1562.8 559.5L1564.3 555.5L1565.8 551.7L1567.3 547.8L1568.8 544.0L1570.3 540.2L1571.8 536.4L1573.3 532.7L1574.8 529.0L1576.3 525.4L1577.8 522.0L1579.3 518.7L1580.8 515.5L1582.3 512.6L1583.8 509.7L1585.3 507.1L1586.8 504.5L1588.3 502.0L1589.8 499.6L1591.3 497.3L1592.8 495.0L1594.3 492.8L1595.8 490.6L1597.3 488.4L1598.8 486.2L1600.3 484.1L1601.8 482.1L1603.4 480.2L1604.9 478.5L1606.4 476.8L1607.9 475.3L1609.4 473.9L1610.9 472.6L1612.4 471.4L1613.9 470.3L1615.4 469.3L1616.9 468.6L1618.4 468.1L1619.9 467.8L1621.4 467.7L1622.9 467.8L1624.4 468.0L1625.9 468.3L1627.4 468.8L1628.9 469.3L1630.4 469.9L1631.9 470.6L1633.4 471.4L1634.9 472.4L1636.4 473.5L1637.9 474.7L1639.4 476.0L1640.9 477.3L1642.4 478.6L1643.9 479.9L1645.4 481.2L1646.9 482.5L1648.4 483.8L1649.9 485.1L1651.4 486.5L1652.9 487.9L1654.4 489.2L1655.9 490.6L1657.4 492.0L1658.9 493.3L1660.4 494.6L1661.9 496.0L1663.4 497.3L1664.9 498.6L1666.4 499.9L1667.9 501.2L1669.4 502.5L1670.9 503.8L1672.4 505.2L1673.9 506.6L1675.4 508.0L1676.9 509.4L1678.4 510.8L1679.9 512.2L1681.5 513.5L1683.0 514.6L1684.5 515.5L1686.0 516.3L1687.5 517.0L1689.0 517.6L1690.5 518.0L1692.0 518.4L1693.5 518.8L1695.0 519.2L1696.5 519.5L1698.0 519.7L1699.5 520.0L1701.0 520.3L1702.5 520.5L1704.0 520.7L1705.5 521.0L1707.0 521.4L1708.5 521.8L1710.0 522.3L1711.5 523.0L1713.0 523.7L1714.5 524.6L1716.0 525.6L1717.5 526.8L1719.0 528.1L1720.5 529.6L1722.0 531.3L1723.5 533.2L1725.0 535.2L1726.5 537.4L1728.0 539.9L1729.5 542.5L1731.0 545.4L1732.5 548.5L1734.0 551.8L1735.5 555.4L1737.0 559.2L1738.5 563.1L1740.0 567.1L1741.5 571.2L1743.0 575.3L1744.5 579.4L1746.0 583.4L1747.5 587.5L1749.0 591.5L1750.5 595.3L1752.0 599.0L1753.5 602.6L1755.0 606.1L1756.5 609.4L1758.0 612.6L1759.6 615.8L1761.1 618.9L1762.6 622.0L1764.1 625.0L1765.6 628.0L1767.1 630.9L1768.6 633.6L1770.1 636.1L1771.6 638.3L1773.1 640.3L1774.6 642.2L1776.1 643.8L1777.6 645.4L1779.1 646.8L1780.6 648.1L1782.1 649.3L1783.6 650.5L1785.1 651.6L1786.6 652.6L1788.1 653.5L1789.6 654.4L1791.1 655.1L1792.6 655.9L1794.1 656.6L1795.6 657.3L1797.1 658.0L1798.6 658.7L1800.1 659.4L1801.6 660.2L1803.1 661.1L1804.6 662.0L1806.1 663.0L1807.6 664.1L1809.1 665.3L1810.6 666.5L1812.1 667.8L1813.6 669.1L1815.1 670.5L1816.6 671.8L1818.1 673.2L1819.6 674.5L1821.1 675.8L1822.6 677.1L1824.1 678.4L1825.6 679.7L1827.1 680.9L1828.6 682.2L1830.1 683.4L1831.6 684.6L1833.1 685.8L1834.6 686.9L1836.1 688.0L1837.7 689.1L1839.2 690.1L1840.7 691.1L1842.2 692.1L1843.7 693.1L1845.2 694.1L1846.7 695.1L1848.2 696.0L1849.7 696.9L1851.2 697.7L1852.7 698.5L1854.2 699.2L1855.7 699.9L1857.2 700.5L1858.7 701.0L1860.2 701.5L1861.7 701.9L1863.2 702.3L1864.7 702.7L1866.2 703.0L1867.7 703.3L1869.2 703.6L1870.7 703.8L1872.2 704.0L1873.7 704.2L1875.2 704.3L1876.7 704.3L1878.2 704.4L1879.7 704.4L1881.2 704.4L1882.7 704.4L1884.2 704.4L1885.7 704.4L1887.2 704.4L1888.7 704.4L1890.2 704.4L1891.7 704.4L1893.2 704.4L1894.7 704.4L1896.2 704.4L1897.7 704.4L1899.2 704.4L1900.7 704.4L1902.2 704.4L1903.7 704.4L1905.2 704.4L1906.7 704.4L1908.2 704.4L1909.7 704.4L1911.2 704.4L1912.7 704.4L1914.2 704.4L1915.8 704.4L1917.3 704.4L1918.8 704.4L1920.3 704.4L1921.8 704.4L1923.3 704.4L1924.8 704.4L1926.3 704.4L1927.8 704.4L1929.3 704.4L1930.8 704.4L1932.3 704.4L1933.8 704.4L1935.3 704.4L1936.8 704.4L1938.3 704.4L1939.8 704.4L1941.3 704.4L1942.8 704.4L1944.3 704.4L1945.8 704.4L1947.3 704.4L1948.8 704.4L1950.3 704.4L1951.8 704.4L1953.3 704.4L1954.8 704.4L1956.3 704.4L1957.8 704.4L1959.3 704.4L1960.8 704.4L1962.3 704.4L1963.8 704.4L1965.3 704.4L1966.8 704.4L1968.3 704.4L1969.8 704.4L1971.3 704.4L1972.8 704.4L1974.3 704.4L1975.8 704.4L1977.3 704.4L1978.8 704.4L1980.3 704.4L1981.8 704.4L1983.3 704.4L1984.8 704.4L1986.3 704.4L1987.8 704.4L1989.3 704.4L1990.8 704.4L1992.3 704.4L1993.9 704.4L1995.4 704.4L1996.9 704.4L1998.4 704.4L1999.9 704.4L2001.4 704.4L2002.9 704.4L2004.4 704.4L2005.9 704.4L2007.4 704.4L2008.9 704.4L2010.4 704.4L2011.9 704.4L2013.4 704.4L2014.9 704.4L2016.4 704.4L2017.9 704.4L2019.4 704.4L2020.9 704.4L2022.4 704.4L2023.9 704.4L2025.4 704.4L2026.9 704.4L2028.4 704.4L2029.9 704.4L2031.4 704.4L2032.9 704.4L2034.4 704.4L2035.9 704.4L2037.4 704.4L2038.9 704.4L2040.4 704.4L2041.9 704.4L2043.4 704.4L2044.9 704.4L2046.4 704.4L2047.9 704.4L2049.4 704.4L2050.9 704.4L2052.4 704.4L2053.9 704.4L2055.4 704.4L2056.9 704.4L2058.4 704.4L2059.9 704.4L2061.4 704.4L2062.9 704.4L2064.4 704.4L2065.9 704.4L2067.4 704.4L2068.9 704.4L2070.4 704.4L2072.0 704.4L2073.5 704.4L2075.0 704.4L2076.5 704.4L2078.0 704.4L2079.5 704.4L2081.0 704.4L2082.5 704.4L2084.0 704.4L2085.5 704.4L2087.0 704.4L2088.5 704.4L2090.0 704.4L2091.5 704.4L2093.0 704.4L2094.5 704.4L2096.0 704.4L2097.5 704.4L2099.0 704.4L2100.5 704.4L2102.0 704.4L2103.5 704.4L2105.0 704.4L2106.5 704.4L2108.0 704.4L2109.5 704.4L2111.0 704.4 L2111.0 704.4 L1523.8 704.4 Z" fill="#6C9AF5" fill-opacity="0.2" stroke="none"/>
<path d="M1523.8 661.3L1525.3 657.9L1526.8 654.5L1528.3 651.1L1529.8 647.6L1531.3 644.1L1532.8 640.6L1534.3 637.0L1535.8 633.4L1537.3 629.7L1538.8 626.1L1540.3 622.4L1541.8 618.6L1543.3 614.8L1544.8 610.8L1546.3 606.8L1547.8 602.7L1549.3 598.4L1550.8 594.0L1552.3 589.5L1553.8 585.0L1555.3 580.5L1556.8 576.1L1558.3 571.8L1559.8 567.6L1561.3 563.5L1562.8 559.5L1564.3 555.5L1565.8 551.7L1567.3 547.8L1568.8 544.0L1570.3 540.2L1571.8 536.4L1573.3 532.7L1574.8 529.0L1576.3 525.4L1577.8 522.0L1579.3 518.7L1580.8 515.5L1582.3 512.6L1583.8 509.7L1585.3 507.1L1586.8 504.5L1588.3 502.0L1589.8 499.6L1591.3 497.3L1592.8 495.0L1594.3 492.8L1595.8 490.6L1597.3 488.4L1598.8 486.2L1600.3 484.1L1601.8 482.1L1603.4 480.2L1604.9 478.5L1606.4 476.8L1607.9 475.3L1609.4 473.9L1610.9 472.6L1612.4 471.4L1613.9 470.3L1615.4 469.3L1616.9 468.6L1618.4 468.1L1619.9 467.8L1621.4 467.7L1622.9 467.8L1624.4 468.0L1625.9 468.3L1627.4 468.8L1628.9 469.3L1630.4 469.9L1631.9 470.6L1633.4 471.4L1634.9 472.4L1636.4 473.5L1637.9 474.7L1639.4 476.0L1640.9 477.3L1642.4 478.6L1643.9 479.9L1645.4 481.2L1646.9 482.5L1648.4 483.8L1649.9 485.1L1651.4 486.5L1652.9 487.9L1654.4 489.2L1655.9 490.6L1657.4 492.0L1658.9 493.3L1660.4 494.6L1661.9 496.0L1663.4 497.3L1664.9 498.6L1666.4 499.9L1667.9 501.2L1669.4 502.5L1670.9 503.8L1672.4 505.2L1673.9 506.6L1675.4 508.0L1676.9 509.4L1678.4 510.8L1679.9 512.2L1681.5 513.5L1683.0 514.6L1684.5 515.5L1686.0 516.3L1687.5 517.0L1689.0 517.6L1690.5 518.0L1692.0 518.4L1693.5 518.8L1695.0 519.2L1696.5 519.5L1698.0 519.7L1699.5 520.0L1701.0 520.3L1702.5 520.5L1704.0 520.7L1705.5 521.0L1707.0 521.4L1708.5 521.8L1710.0 522.3L1711.5 523.0L1713.0 523.7L1714.5 524.6L1716.0 525.6L1717.5 526.8L1719.0 528.1L1720.5 529.6L1722.0 531.3L1723.5 533.2L1725.0 535.2L1726.5 537.4L1728.0 539.9L1729.5 542.5L1731.0 545.4L1732.5 548.5L1734.0 551.8L1735.5 555.4L1737.0 559.2L1738.5 563.1L1740.0 567.1L1741.5 571.2L1743.0 575.3L1744.5 579.4L1746.0 583.4L1747.5 587.5L1749.0 591.5L1750.5 595.3L1752.0 599.0L1753.5 602.6L1755.0 606.1L1756.5 609.4L1758.0 612.6L1759.6 615.8L1761.1 618.9L1762.6 622.0L1764.1 625.0L1765.6 628.0L1767.1 630.9L1768.6 633.6L1770.1 636.1L1771.6 638.3L1773.1 640.3L1774.6 642.2L1776.1 643.8L1777.6 645.4L1779.1 646.8L1780.6 648.1L1782.1 649.3L1783.6 650.5L1785.1 651.6L1786.6 652.6L1788.1 653.5L1789.6 654.4L1791.1 655.1L1792.6 655.9L1794.1 656.6L1795.6 657.3L1797.1 658.0L1798.6 658.7L1800.1 659.4L1801.6 660.2L1803.1 661.1L1804.6 662.0L1806.1 663.0L1807.6 664.1L1809.1 665.3L1810.6 666.5L1812.1 667.8L1813.6 669.1L1815.1 670.5L1816.6 671.8L1818.1 673.2L1819.6 674.5L1821.1 675.8L1822.6 677.1L1824.1 678.4L1825.6 679.7L1827.1 680.9L1828.6 682.2L1830.1 683.4L1831.6 684.6L1833.1 685.8L1834.6 686.9L1836.1 688.0L1837.7 689.1L1839.2 690.1L1840.7 691.1L1842.2 692.1L1843.7 693.1L1845.2 694.1L1846.7 695.1L1848.2 696.0L1849.7 696.9L1851.2 697.7L1852.7 698.5L1854.2 699.2L1855.7 699.9L1857.2 700.5L1858.7 701.0L1860.2 701.5L1861.7 701.9L1863.2 702.3L1864.7 702.7L1866.2 703.0L1867.7 703.3L1869.2 703.6L1870.7 703.8L1872.2 704.0L1873.7 704.2L1875.2 704.3L1876.7 704.3L1878.2 704.4L1879.7 704.4L1881.2 704.4L1882.7 704.4L1884.2 704.4L1885.7 704.4L1887.2 704.4L1888.7 704.4L1890.2 704.4L1891.7 704.4L1893.2 704.4L1894.7 704.4L1896.2 704.4L1897.7 704.4L1899.2 704.4L1900.7 704.4L1902.2 704.4L1903.7 704.4L1905.2 704.4L1906.7 704.4L1908.2 704.4L1909.7 704.4L1911.2 704.4L1912.7 704.4L1914.2 704.4L1915.8 704.4L1917.3 704.4L1918.8 704.4L1920.3 704.4L1921.8 704.4L1923.3 704.4L1924.8 704.4L1926.3 704.4L1927.8 704.4L1929.3 704.4L1930.8 704.4L1932.3 704.4L1933.8 704.4L1935.3 704.4L1936.8 704.4L1938.3 704.4L1939.8 704.4L1941.3 704.4L1942.8 704.4L1944.3 704.4L1945.8 704.4L1947.3 704.4L1948.8 704.4L1950.3 704.4L1951.8 704.4L1953.3 704.4L1954.8 704.4L1956.3 704.4L1957.8 704.4L1959.3 704.4L1960.8 704.4L1962.3 704.4L1963.8 704.4L1965.3 704.4L1966.8 704.4L1968.3 704.4L1969.8 704.4L1971.3 704.4L1972.8 704.4L1974.3 704.4L1975.8 704.4L1977.3 704.4L1978.8 704.4L1980.3 704.4L1981.8 704.4L1983.3 704.4L1984.8 704.4L1986.3 704.4L1987.8 704.4L1989.3 704.4L1990.8 704.4L1992.3 704.4L1993.9 704.4L1995.4 704.4L1996.9 704.4L1998.4 704.4L1999.9 704.4L2001.4 704.4L2002.9 704.4L2004.4 704.4L2005.9 704.4L2007.4 704.4L2008.9 704.4L2010.4 704.4L2011.9 704.4L2013.4 704.4L2014.9 704.4L2016.4 704.4L2017.9 704.4L2019.4 704.4L2020.9 704.4L2022.4 704.4L2023.9 704.4L2025.4 704.4L2026.9 704.4L2028.4 704.4L2029.9 704.4L2031.4 704.4L2032.9 704.4L2034.4 704.4L2035.9 704.4L2037.4 704.4L2038.9 704.4L2040.4 704.4L2041.9 704.4L2043.4 704.4L2044.9 704.4L2046.4 704.4L2047.9 704.4L2049.4 704.4L2050.9 704.4L2052.4 704.4L2053.9 704.4L2055.4 704.4L2056.9 704.4L2058.4 704.4L2059.9 704.4L2061.4 704.4L2062.9 704.4L2064.4 704.4L2065.9 704.4L2067.4 704.4L2068.9 704.4L2070.4 704.4L2072.0 704.4L2073.5 704.4L2075.0 704.4L2076.5 704.4L2078.0 704.4L2079.5 704.4L2081.0 704.4L2082.5 704.4L2084.0 704.4L2085.5 704.4L2087.0 704.4L2088.5 704.4L2090.0 704.4L2091.5 704.4L2093.0 704.4L2094.5 704.4L2096.0 704.4L2097.5 704.4L2099.0 704.4L2100.5 704.4L2102.0 704.4L2103.5 704.4L2105.0 704.4L2106.5 704.4L2108.0 704.4L2109.5 704.4L2111.0 704.4" fill="none" stroke="#000" stroke-width="1.75" stroke-linejoin="round"/>
<rect x="1495" y="456.2" width="644.4000000000001" height="259.3" fill="none" stroke="#3a3a3a" stroke-width="1.5"/>
<line x1="1656.25" y1="715.5" x2="1656.25" y2="723.0" stroke="#333" stroke-width="1.9"/>
<text x="1656.25" y="742.3" text-anchor="middle" class="ax">15.0</text>
<line x1="1830.625" y1="715.5" x2="1830.625" y2="723.0" stroke="#333" stroke-width="1.9"/>
<text x="1830.625" y="742.3" text-anchor="middle" class="ax">17.5</text>
<line x1="2005.0" y1="715.5" x2="2005.0" y2="723.0" stroke="#333" stroke-width="1.9"/>
<text x="2005.0" y="742.3" text-anchor="middle" class="ax">20.0</text>
<line x1="1487.5" y1="704.4" x2="1495" y2="704.4" stroke="#333" stroke-width="1.9"/>
<text x="1482.5" y="711.1999999999999" text-anchor="end" class="ax">0.0</text>
<line x1="1487.5" y1="639.4" x2="1495" y2="639.4" stroke="#333" stroke-width="1.9"/>
<text x="1482.5" y="646.1999999999999" text-anchor="end" class="ax">0.1</text>
<line x1="1487.5" y1="574.4" x2="1495" y2="574.4" stroke="#333" stroke-width="1.9"/>
<text x="1482.5" y="581.1999999999999" text-anchor="end" class="ax">0.2</text>
<line x1="1487.5" y1="509.4" x2="1495" y2="509.4" stroke="#333" stroke-width="1.9"/>
<text x="1482.5" y="516.1999999999999" text-anchor="end" class="ax">0.3</text>
<text x="2179.6" y="547.6" class="lt">species</text>
<rect x="2180.5" y="564.1" width="25" height="25.8" fill="#fff" />
<rect x="2180.5" y="564.1" width="25" height="25.8" fill="#E27B70" fill-opacity="0.2" stroke="#000" stroke-width="1.8"/>
<text x="2220.9" y="584.0" class="ll">Adelie</text>
<rect x="2180.5" y="591.7" width="25" height="25.8" fill="#fff" />
<rect x="2180.5" y="591.7" width="25" height="25.8" fill="#24B441" fill-opacity="0.2" stroke="#000" stroke-width="1.8"/>
<text x="2220.9" y="611.6" class="ll">Chinstrap</text>
<rect x="2180.5" y="619.3000000000001" width="25" height="25.8" fill="#fff" />
<rect x="2180.5" y="619.3000000000001" width="25" height="25.8" fill="#6C9AF5" fill-opacity="0.2" stroke="#000" stroke-width="1.8"/>
<text x="2220.9" y="639.2" class="ll">Gentoo</text>
<line x1="551.2" y1="1136.6" x2="2139.3" y2="1136.6" stroke="#ebebeb" stroke-width="1.3"/>
<line x1="551.2" y1="1072.0" x2="2139.3" y2="1072.0" stroke="#ebebeb" stroke-width="1.3"/>
<line x1="551.2" y1="1007.3" x2="2139.3" y2="1007.3" stroke="#ebebeb" stroke-width="1.3"/>
<line x1="551.2" y1="942.6" x2="2139.3" y2="942.6" stroke="#ebebeb" stroke-width="1.3"/>
<line x1="943.8" y1="919.9" x2="943.8" y2="1180.1" stroke="#ebebeb" stroke-width="1.3"/>
<line x1="1345.4" y1="919.9" x2="1345.4" y2="1180.1" stroke="#ebebeb" stroke-width="1.3"/>
<line x1="1747.0" y1="919.9" x2="1747.0" y2="1180.1" stroke="#ebebeb" stroke-width="1.3"/>
<line x1="551.2" y1="1168.9" x2="2139.3" y2="1168.9" stroke="#ebebeb" stroke-width="2.0"/>
<line x1="551.2" y1="1104.3" x2="2139.3" y2="1104.3" stroke="#ebebeb" stroke-width="2.0"/>
<line x1="551.2" y1="1039.7" x2="2139.3" y2="1039.7" stroke="#ebebeb" stroke-width="2.0"/>
<line x1="551.2" y1="975.0" x2="2139.3" y2="975.0" stroke="#ebebeb" stroke-width="2.0"/>
<line x1="743.0" y1="919.9" x2="743.0" y2="1180.1" stroke="#ebebeb" stroke-width="2.0"/>
<line x1="1144.6" y1="919.9" x2="1144.6" y2="1180.1" stroke="#ebebeb" stroke-width="2.0"/>
<line x1="1546.2" y1="919.9" x2="1546.2" y2="1180.1" stroke="#ebebeb" stroke-width="2.0"/>
<line x1="1947.8" y1="919.9" x2="1947.8" y2="1180.1" stroke="#ebebeb" stroke-width="2.0"/>
<path d="M623.0 1154.4L624.5 1153.8L626.0 1153.2L627.5 1152.6L629.0 1151.9L630.5 1151.3L632.0 1150.7L633.5 1150.1L635.0 1149.4L636.5 1148.8L638.0 1148.1L639.5 1147.5L641.0 1146.8L642.5 1146.2L644.0 1145.5L645.5 1144.8L647.0 1144.1L648.5 1143.5L650.0 1142.8L651.5 1142.1L653.0 1141.4L654.5 1140.7L656.0 1140.0L657.5 1139.3L659.0 1138.5L660.5 1137.8L662.0 1137.1L663.5 1136.4L665.0 1135.6L666.5 1134.9L668.0 1134.1L669.5 1133.4L671.0 1132.6L672.5 1131.8L674.0 1131.1L675.5 1130.3L677.0 1129.5L678.5 1128.7L680.0 1127.9L681.5 1127.0L683.0 1126.2L684.5 1125.4L686.0 1124.6L687.5 1123.8L689.0 1122.9L690.5 1122.1L692.0 1121.3L693.5 1120.5L695.0 1119.7L696.5 1118.8L698.0 1118.0L699.5 1117.2L701.0 1116.4L702.5 1115.6L704.0 1114.8L705.5 1114.0L707.0 1113.2L708.5 1112.4L710.0 1111.6L711.5 1110.8L713.0 1110.0L714.5 1109.2L716.0 1108.4L717.5 1107.6L719.0 1106.8L720.5 1106.0L722.0 1105.2L723.5 1104.4L725.0 1103.6L726.5 1102.8L728.0 1102.0L729.5 1101.2L731.0 1100.4L732.5 1099.6L734.0 1098.8L735.5 1098.0L737.0 1097.2L738.5 1096.4L740.0 1095.6L741.5 1094.8L743.0 1094.0L744.5 1093.1L746.0 1092.3L747.5 1091.5L749.0 1090.6L750.5 1089.8L752.0 1088.9L753.5 1088.1L755.0 1087.2L756.5 1086.4L758.0 1085.5L759.5 1084.7L761.0 1083.8L762.5 1082.9L764.0 1082.1L765.5 1081.2L767.0 1080.4L768.6 1079.5L770.1 1078.6L771.6 1077.8L773.1 1076.9L774.6 1076.1L776.1 1075.2L777.6 1074.4L779.1 1073.5L780.6 1072.7L782.1 1071.9L783.6 1071.0L785.1 1070.2L786.6 1069.4L788.1 1068.6L789.6 1067.8L791.1 1067.0L792.6 1066.2L794.1 1065.4L795.6 1064.6L797.1 1063.8L798.6 1063.0L800.1 1062.2L801.6 1061.4L803.1 1060.6L804.6 1059.8L806.1 1059.0L807.6 1058.3L809.1 1057.5L810.6 1056.7L812.1 1055.9L813.6 1055.1L815.1 1054.3L816.6 1053.5L818.1 1052.7L819.6 1051.9L821.1 1051.0L822.6 1050.2L824.1 1049.4L825.6 1048.6L827.1 1047.8L828.6 1046.9L830.1 1046.1L831.6 1045.3L833.1 1044.5L834.6 1043.6L836.1 1042.8L837.6 1042.0L839.1 1041.1L840.6 1040.3L842.1 1039.5L843.6 1038.6L845.1 1037.8L846.6 1036.9L848.1 1036.1L849.6 1035.2L851.1 1034.4L852.6 1033.5L854.1 1032.6L855.6 1031.7L857.1 1030.8L858.6 1030.0L860.1 1029.1L861.6 1028.1L863.1 1027.2L864.6 1026.3L866.1 1025.3L867.6 1024.3L869.1 1023.3L870.6 1022.4L872.1 1021.4L873.6 1020.4L875.1 1019.5L876.6 1018.5L878.1 1017.7L879.6 1016.8L881.1 1016.0L882.6 1015.2L884.1 1014.4L885.6 1013.6L887.1 1012.8L888.6 1012.1L890.1 1011.4L891.6 1010.7L893.1 1010.0L894.6 1009.3L896.1 1008.7L897.6 1008.1L899.1 1007.6L900.6 1007.1L902.1 1006.6L903.6 1006.1L905.1 1005.6L906.6 1005.2L908.1 1004.7L909.6 1004.3L911.1 1003.9L912.6 1003.5L914.1 1003.1L915.6 1002.8L917.1 1002.4L918.6 1002.1L920.1 1001.8L921.6 1001.5L923.1 1001.2L924.6 1001.0L926.1 1000.7L927.6 1000.5L929.1 1000.3L930.6 1000.1L932.1 999.9L933.6 999.7L935.1 999.5L936.6 999.3L938.1 999.1L939.6 998.9L941.1 998.8L942.6 998.6L944.1 998.4L945.6 998.3L947.1 998.2L948.6 998.0L950.1 997.9L951.6 997.8L953.1 997.8L954.6 997.7L956.1 997.7L957.6 997.6L959.1 997.6L960.6 997.6L962.1 997.7L963.6 997.7L965.1 997.8L966.6 997.9L968.1 997.9L969.6 998.1L971.1 998.2L972.6 998.3L974.1 998.4L975.6 998.6L977.1 998.7L978.6 998.9L980.1 999.0L981.6 999.2L983.1 999.4L984.6 999.6L986.1 999.7L987.6 999.9L989.1 1000.1L990.6 1000.3L992.1 1000.4L993.6 1000.6L995.1 1000.8L996.6 1001.0L998.1 1001.2L999.6 1001.4L1001.1 1001.6L1002.6 1001.8L1004.1 1002.0L1005.6 1002.2L1007.1 1002.4L1008.6 1002.6L1010.1 1002.8L1011.6 1003.0L1013.1 1003.2L1014.6 1003.4L1016.1 1003.6L1017.6 1003.8L1019.1 1004.0L1020.6 1004.2L1022.1 1004.4L1023.6 1004.6L1025.1 1004.8L1026.6 1005.0L1028.1 1005.1L1029.6 1005.3L1031.1 1005.6L1032.6 1005.8L1034.1 1006.0L1035.6 1006.2L1037.1 1006.4L1038.6 1006.7L1040.1 1006.9L1041.6 1007.2L1043.1 1007.5L1044.6 1007.8L1046.1 1008.1L1047.6 1008.4L1049.1 1008.8L1050.6 1009.2L1052.1 1009.6L1053.6 1010.0L1055.1 1010.4L1056.7 1010.9L1058.2 1011.4L1059.7 1011.8L1061.2 1012.3L1062.7 1012.8L1064.2 1013.3L1065.7 1013.7L1067.2 1014.2L1068.7 1014.6L1070.2 1015.0L1071.7 1015.4L1073.2 1015.8L1074.7 1016.2L1076.2 1016.6L1077.7 1017.0L1079.2 1017.3L1080.7 1017.7L1082.2 1018.1L1083.7 1018.4L1085.2 1018.8L1086.7 1019.2L1088.2 1019.6L1089.7 1020.0L1091.2 1020.4L1092.7 1020.8L1094.2 1021.3L1095.7 1021.8L1097.2 1022.2L1098.7 1022.8L1100.2 1023.3L1101.7 1023.9L1103.2 1024.4L1104.7 1025.0L1106.2 1025.6L1107.7 1026.3L1109.2 1026.9L1110.7 1027.6L1112.2 1028.3L1113.7 1028.9L1115.2 1029.7L1116.7 1030.4L1118.2 1031.1L1119.7 1031.8L1121.2 1032.6L1122.7 1033.3L1124.2 1034.0L1125.7 1034.8L1127.2 1035.6L1128.7 1036.3L1130.2 1037.1L1131.7 1037.9L1133.2 1038.7L1134.7 1039.5L1136.2 1040.3L1137.7 1041.1L1139.2 1042.0L1140.7 1042.8L1142.2 1043.6L1143.7 1044.4L1145.2 1045.2L1146.7 1046.0L1148.2 1046.7L1149.7 1047.5L1151.2 1048.2L1152.7 1048.9L1154.2 1049.6L1155.7 1050.3L1157.2 1051.0L1158.7 1051.7L1160.2 1052.4L1161.7 1053.1L1163.2 1053.7L1164.7 1054.4L1166.2 1055.1L1167.7 1055.7L1169.2 1056.4L1170.7 1057.0L1172.2 1057.6L1173.7 1058.3L1175.2 1058.9L1176.7 1059.5L1178.2 1060.1L1179.7 1060.7L1181.2 1061.3L1182.7 1061.8L1184.2 1062.4L1185.7 1063.0L1187.2 1063.5L1188.7 1064.1L1190.2 1064.6L1191.7 1065.2L1193.2 1065.7L1194.7 1066.3L1196.2 1066.8L1197.7 1067.3L1199.2 1067.8L1200.7 1068.3L1202.2 1068.8L1203.7 1069.3L1205.2 1069.8L1206.7 1070.3L1208.2 1070.8L1209.7 1071.2L1211.2 1071.7L1212.7 1072.1L1214.2 1072.6L1215.7 1073.0L1217.2 1073.4L1218.7 1073.9L1220.2 1074.3L1221.7 1074.7L1223.2 1075.1L1224.7 1075.5L1226.2 1075.9L1227.7 1076.3L1229.2 1076.7L1230.7 1077.1L1232.2 1077.5L1233.7 1077.9L1235.2 1078.3L1236.7 1078.7L1238.2 1079.1L1239.7 1079.5L1241.2 1079.9L1242.7 1080.3L1244.2 1080.7L1245.7 1081.2L1247.2 1081.6L1248.7 1082.0L1250.2 1082.4L1251.7 1082.9L1253.2 1083.3L1254.7 1083.7L1256.2 1084.1L1257.7 1084.6L1259.2 1085.0L1260.7 1085.4L1262.2 1085.8L1263.7 1086.3L1265.2 1086.7L1266.7 1087.1L1268.2 1087.6L1269.7 1088.0L1271.2 1088.4L1272.7 1088.9L1274.2 1089.3L1275.7 1089.8L1277.2 1090.2L1278.7 1090.7L1280.2 1091.1L1281.7 1091.6L1283.2 1092.1L1284.7 1092.6L1286.2 1093.0L1287.7 1093.5L1289.2 1094.0L1290.7 1094.5L1292.2 1095.0L1293.7 1095.5L1295.2 1096.1L1296.7 1096.6L1298.2 1097.1L1299.7 1097.7L1301.2 1098.2L1302.7 1098.8L1304.2 1099.3L1305.7 1099.9L1307.2 1100.5L1308.7 1101.1L1310.2 1101.6L1311.7 1102.2L1313.2 1102.8L1314.7 1103.4L1316.2 1104.1L1317.7 1104.7L1319.2 1105.3L1320.7 1106.0L1322.2 1106.6L1323.7 1107.3L1325.2 1108.0L1326.7 1108.7L1328.2 1109.5L1329.7 1110.2L1331.2 1110.9L1332.7 1111.7L1334.2 1112.4L1335.7 1113.1L1337.2 1113.7L1338.7 1114.4L1340.2 1115.0L1341.7 1115.6L1343.2 1116.2L1344.7 1116.8L1346.3 1117.3L1347.8 1117.9L1349.3 1118.4L1350.8 1118.9L1352.3 1119.4L1353.8 1119.9L1355.3 1120.4L1356.8 1120.9L1358.3 1121.4L1359.8 1121.9L1361.3 1122.4L1362.8 1122.9L1364.3 1123.3L1365.8 1123.8L1367.3 1124.3L1368.8 1124.7L1370.3 1125.2L1371.8 1125.7L1373.3 1126.1L1374.8 1126.6L1376.3 1127.1L1377.8 1127.5L1379.3 1128.0L1380.8 1128.5L1382.3 1128.9L1383.8 1129.4L1385.3 1129.9L1386.8 1130.3L1388.3 1130.8L1389.8 1131.3L1391.3 1131.7L1392.8 1132.2L1394.3 1132.6L1395.8 1133.1L1397.3 1133.5L1398.8 1134.0L1400.3 1134.4L1401.8 1134.9L1403.3 1135.3L1404.8 1135.8L1406.3 1136.2L1407.8 1136.7L1409.3 1137.1L1410.8 1137.6L1412.3 1138.0L1413.8 1138.5L1415.3 1138.9L1416.8 1139.3L1418.3 1139.8L1419.8 1140.2L1421.3 1140.7L1422.8 1141.2L1424.3 1141.6L1425.8 1142.1L1427.3 1142.5L1428.8 1143.0L1430.3 1143.5L1431.8 1144.0L1433.3 1144.4L1434.8 1144.9L1436.3 1145.4L1437.8 1145.8L1439.3 1146.3L1440.8 1146.8L1442.3 1147.2L1443.8 1147.7L1445.3 1148.2L1446.8 1148.6L1448.3 1149.0L1449.8 1149.5L1451.3 1149.9L1452.8 1150.3L1454.3 1150.8L1455.8 1151.2L1457.3 1151.6L1458.8 1152.0L1460.3 1152.4L1461.8 1152.7L1463.3 1153.1L1464.8 1153.5L1466.3 1153.9L1467.8 1154.2L1469.3 1154.6L1470.8 1155.0L1472.3 1155.3L1473.8 1155.7L1475.3 1156.0L1476.8 1156.4L1478.3 1156.7L1479.8 1157.0L1481.3 1157.4L1482.8 1157.7L1484.3 1158.0L1485.8 1158.3L1487.3 1158.6L1488.8 1158.9L1490.3 1159.2L1491.8 1159.5L1493.3 1159.8L1494.8 1160.1L1496.3 1160.4L1497.8 1160.6L1499.3 1160.9L1500.8 1161.1L1502.3 1161.4L1503.8 1161.6L1505.3 1161.9L1506.8 1162.1L1508.3 1162.4L1509.8 1162.6L1511.3 1162.8L1512.8 1163.1L1514.3 1163.3L1515.8 1163.5L1517.3 1163.8L1518.8 1164.0L1520.3 1164.2L1521.8 1164.4L1523.3 1164.6L1524.8 1164.8L1526.3 1165.0L1527.8 1165.2L1529.3 1165.3L1530.8 1165.5L1532.3 1165.7L1533.8 1165.8L1535.3 1166.0L1536.8 1166.1L1538.3 1166.2L1539.8 1166.3L1541.3 1166.4L1542.8 1166.5L1544.3 1166.6L1545.8 1166.7L1547.3 1166.8L1548.8 1166.9L1550.3 1167.0L1551.8 1167.1L1553.3 1167.2L1554.8 1167.2L1556.3 1167.3L1557.8 1167.4L1559.3 1167.4L1560.8 1167.5L1562.3 1167.6L1563.8 1167.6L1565.3 1167.7L1566.8 1167.8L1568.3 1167.8L1569.8 1167.9L1571.3 1167.9L1572.8 1168.0L1574.3 1168.0L1575.8 1168.1L1577.3 1168.1L1578.8 1168.1L1580.3 1168.2L1581.8 1168.2L1583.3 1168.3L1584.8 1168.3L1586.3 1168.3L1587.8 1168.4L1589.3 1168.4L1590.8 1168.5L1592.3 1168.5L1593.8 1168.5L1595.3 1168.6L1596.8 1168.6L1598.3 1168.6L1599.8 1168.7L1601.3 1168.7L1602.8 1168.7L1604.3 1168.7L1605.8 1168.8L1607.3 1168.8L1608.8 1168.8L1610.3 1168.8L1611.8 1168.9L1613.3 1168.9L1614.8 1168.9L1616.3 1168.9L1617.8 1168.9L1619.3 1168.9L1620.8 1168.9L1622.3 1168.9L1623.8 1168.9L1625.3 1168.9L1626.8 1168.9L1628.3 1168.9L1629.8 1168.9L1631.3 1168.9L1632.8 1168.9L1634.3 1168.9L1635.9 1168.9L1637.4 1168.9L1638.9 1168.9L1640.4 1168.9L1641.9 1168.9L1643.4 1168.9L1644.9 1168.9L1646.4 1168.9L1647.9 1168.9L1649.4 1168.9L1650.9 1168.9L1652.4 1168.9L1653.9 1168.9L1655.4 1168.9L1656.9 1168.9L1658.4 1168.9L1659.9 1168.9L1661.4 1168.9L1662.9 1168.9L1664.4 1168.9L1665.9 1168.9L1667.4 1168.9L1668.9 1168.9L1670.4 1168.9L1671.9 1168.9L1673.4 1168.9L1674.9 1168.9L1676.4 1168.9L1677.9 1168.9L1679.4 1168.9L1680.9 1168.9L1682.4 1168.9L1683.9 1168.9L1685.4 1168.9L1686.9 1168.9L1688.4 1168.9L1689.9 1168.9L1691.4 1168.9L1692.9 1168.9L1694.4 1168.9L1695.9 1168.9L1697.4 1168.9L1698.9 1168.9L1700.4 1168.9L1701.9 1168.9L1703.4 1168.9L1704.9 1168.9L1706.4 1168.9L1707.9 1168.9L1709.4 1168.9L1710.9 1168.9L1712.4 1168.9L1713.9 1168.9L1715.4 1168.9L1716.9 1168.9L1718.4 1168.9L1719.9 1168.9L1721.4 1168.9L1722.9 1168.9L1724.4 1168.9L1725.9 1168.9L1727.4 1168.9L1728.9 1168.9L1730.4 1168.9L1731.9 1168.9L1733.4 1168.9L1734.9 1168.9L1736.4 1168.9L1737.9 1168.9L1739.4 1168.9L1740.9 1168.9L1742.4 1168.9L1743.9 1168.9L1745.4 1168.9L1746.9 1168.9L1748.4 1168.9L1749.9 1168.9L1751.4 1168.9L1752.9 1168.9L1754.4 1168.9L1755.9 1168.9L1757.4 1168.9L1758.9 1168.9L1760.4 1168.9L1761.9 1168.9L1763.4 1168.9L1764.9 1168.9L1766.4 1168.9L1767.9 1168.9L1769.4 1168.9L1770.9 1168.9L1772.4 1168.9L1773.9 1168.9L1775.4 1168.9L1776.9 1168.9L1778.4 1168.9L1779.9 1168.9L1781.4 1168.9L1782.9 1168.9L1784.4 1168.9L1785.9 1168.9L1787.4 1168.9L1788.9 1168.9L1790.4 1168.9L1791.9 1168.9L1793.4 1168.9L1794.9 1168.9L1796.4 1168.9L1797.9 1168.9L1799.4 1168.9L1800.9 1168.9L1802.4 1168.9L1803.9 1168.9L1805.4 1168.9L1806.9 1168.9L1808.4 1168.9L1809.9 1168.9L1811.4 1168.9L1812.9 1168.9L1814.4 1168.9L1815.9 1168.9L1817.4 1168.9L1818.9 1168.9L1820.4 1168.9L1821.9 1168.9L1823.4 1168.9L1824.9 1168.9L1826.4 1168.9L1827.9 1168.9L1829.4 1168.9L1830.9 1168.9L1832.4 1168.9L1833.9 1168.9L1835.4 1168.9L1836.9 1168.9L1838.4 1168.9L1839.9 1168.9L1841.4 1168.9L1842.9 1168.9L1844.4 1168.9L1845.9 1168.9L1847.4 1168.9L1848.9 1168.9L1850.4 1168.9L1851.9 1168.9L1853.4 1168.9L1854.9 1168.9L1856.4 1168.9L1857.9 1168.9L1859.4 1168.9L1860.9 1168.9L1862.4 1168.9L1863.9 1168.9L1865.4 1168.9L1866.9 1168.9L1868.4 1168.9L1869.9 1168.9L1871.4 1168.9L1872.9 1168.9L1874.4 1168.9L1875.9 1168.9L1877.4 1168.9L1878.9 1168.9L1880.4 1168.9L1881.9 1168.9L1883.4 1168.9L1884.9 1168.9L1886.4 1168.9L1887.9 1168.9L1889.4 1168.9L1890.9 1168.9L1892.4 1168.9L1893.9 1168.9L1895.4 1168.9L1896.9 1168.9L1898.4 1168.9L1899.9 1168.9L1901.4 1168.9L1902.9 1168.9L1904.4 1168.9L1905.9 1168.9L1907.4 1168.9L1908.9 1168.9L1910.4 1168.9L1911.9 1168.9L1913.4 1168.9L1914.9 1168.9L1916.4 1168.9L1917.9 1168.9L1919.4 1168.9L1920.9 1168.9L1922.4 1168.9L1924.0 1168.9L1925.5 1168.9L1927.0 1168.9L1928.5 1168.9L1930.0 1168.9L1931.5 1168.9L1933.0 1168.9L1934.5 1168.9L1936.0 1168.9L1937.5 1168.9L1939.0 1168.9L1940.5 1168.9L1942.0 1168.9L1943.5 1168.9L1945.0 1168.9L1946.5 1168.9L1948.0 1168.9L1949.5 1168.9L1951.0 1168.9L1952.5 1168.9L1954.0 1168.9L1955.5 1168.9L1957.0 1168.9L1958.5 1168.9L1960.0 1168.9L1961.5 1168.9L1963.0 1168.9L1964.5 1168.9L1966.0 1168.9L1967.5 1168.9L1969.0 1168.9L1970.5 1168.9L1972.0 1168.9L1973.5 1168.9L1975.0 1168.9L1976.5 1168.9L1978.0 1168.9L1979.5 1168.9L1981.0 1168.9L1982.5 1168.9L1984.0 1168.9L1985.5 1168.9L1987.0 1168.9L1988.5 1168.9L1990.0 1168.9L1991.5 1168.9L1993.0 1168.9L1994.5 1168.9L1996.0 1168.9L1997.5 1168.9L1999.0 1168.9L2000.5 1168.9L2002.0 1168.9L2003.5 1168.9L2005.0 1168.9L2006.5 1168.9L2008.0 1168.9L2009.5 1168.9L2011.0 1168.9L2012.5 1168.9L2014.0 1168.9L2015.5 1168.9L2017.0 1168.9L2018.5 1168.9L2020.0 1168.9L2021.5 1168.9L2023.0 1168.9L2024.5 1168.9L2026.0 1168.9L2027.5 1168.9L2029.0 1168.9L2030.5 1168.9L2032.0 1168.9L2033.5 1168.9L2035.0 1168.9L2036.5 1168.9L2038.0 1168.9L2039.5 1168.9L2041.0 1168.9L2042.5 1168.9L2044.0 1168.9L2045.5 1168.9L2047.0 1168.9L2048.5 1168.9L2050.0 1168.9L2051.5 1168.9L2053.0 1168.9L2054.5 1168.9L2056.0 1168.9L2057.5 1168.9L2059.0 1168.9L2060.5 1168.9L2062.0 1168.9L2063.5 1168.9L2065.0 1168.9L2066.5 1168.9L2068.0 1168.9 L2068.0 1168.9 L623.0 1168.9 Z" fill="#E27B70" fill-opacity="0.2" stroke="none"/>
<path d="M623.0 1154.4L624.5 1153.8L626.0 1153.2L627.5 1152.6L629.0 1151.9L630.5 1151.3L632.0 1150.7L633.5 1150.1L635.0 1149.4L636.5 1148.8L638.0 1148.1L639.5 1147.5L641.0 1146.8L642.5 1146.2L644.0 1145.5L645.5 1144.8L647.0 1144.1L648.5 1143.5L650.0 1142.8L651.5 1142.1L653.0 1141.4L654.5 1140.7L656.0 1140.0L657.5 1139.3L659.0 1138.5L660.5 1137.8L662.0 1137.1L663.5 1136.4L665.0 1135.6L666.5 1134.9L668.0 1134.1L669.5 1133.4L671.0 1132.6L672.5 1131.8L674.0 1131.1L675.5 1130.3L677.0 1129.5L678.5 1128.7L680.0 1127.9L681.5 1127.0L683.0 1126.2L684.5 1125.4L686.0 1124.6L687.5 1123.8L689.0 1122.9L690.5 1122.1L692.0 1121.3L693.5 1120.5L695.0 1119.7L696.5 1118.8L698.0 1118.0L699.5 1117.2L701.0 1116.4L702.5 1115.6L704.0 1114.8L705.5 1114.0L707.0 1113.2L708.5 1112.4L710.0 1111.6L711.5 1110.8L713.0 1110.0L714.5 1109.2L716.0 1108.4L717.5 1107.6L719.0 1106.8L720.5 1106.0L722.0 1105.2L723.5 1104.4L725.0 1103.6L726.5 1102.8L728.0 1102.0L729.5 1101.2L731.0 1100.4L732.5 1099.6L734.0 1098.8L735.5 1098.0L737.0 1097.2L738.5 1096.4L740.0 1095.6L741.5 1094.8L743.0 1094.0L744.5 1093.1L746.0 1092.3L747.5 1091.5L749.0 1090.6L750.5 1089.8L752.0 1088.9L753.5 1088.1L755.0 1087.2L756.5 1086.4L758.0 1085.5L759.5 1084.7L761.0 1083.8L762.5 1082.9L764.0 1082.1L765.5 1081.2L767.0 1080.4L768.6 1079.5L770.1 1078.6L771.6 1077.8L773.1 1076.9L774.6 1076.1L776.1 1075.2L777.6 1074.4L779.1 1073.5L780.6 1072.7L782.1 1071.9L783.6 1071.0L785.1 1070.2L786.6 1069.4L788.1 1068.6L789.6 1067.8L791.1 1067.0L792.6 1066.2L794.1 1065.4L795.6 1064.6L797.1 1063.8L798.6 1063.0L800.1 1062.2L801.6 1061.4L803.1 1060.6L804.6 1059.8L806.1 1059.0L807.6 1058.3L809.1 1057.5L810.6 1056.7L812.1 1055.9L813.6 1055.1L815.1 1054.3L816.6 1053.5L818.1 1052.7L819.6 1051.9L821.1 1051.0L822.6 1050.2L824.1 1049.4L825.6 1048.6L827.1 1047.8L828.6 1046.9L830.1 1046.1L831.6 1045.3L833.1 1044.5L834.6 1043.6L836.1 1042.8L837.6 1042.0L839.1 1041.1L840.6 1040.3L842.1 1039.5L843.6 1038.6L845.1 1037.8L846.6 1036.9L848.1 1036.1L849.6 1035.2L851.1 1034.4L852.6 1033.5L854.1 1032.6L855.6 1031.7L857.1 1030.8L858.6 1030.0L860.1 1029.1L861.6 1028.1L863.1 1027.2L864.6 1026.3L866.1 1025.3L867.6 1024.3L869.1 1023.3L870.6 1022.4L872.1 1021.4L873.6 1020.4L875.1 1019.5L876.6 1018.5L878.1 1017.7L879.6 1016.8L881.1 1016.0L882.6 1015.2L884.1 1014.4L885.6 1013.6L887.1 1012.8L888.6 1012.1L890.1 1011.4L891.6 1010.7L893.1 1010.0L894.6 1009.3L896.1 1008.7L897.6 1008.1L899.1 1007.6L900.6 1007.1L902.1 1006.6L903.6 1006.1L905.1 1005.6L906.6 1005.2L908.1 1004.7L909.6 1004.3L911.1 1003.9L912.6 1003.5L914.1 1003.1L915.6 1002.8L917.1 1002.4L918.6 1002.1L920.1 1001.8L921.6 1001.5L923.1 1001.2L924.6 1001.0L926.1 1000.7L927.6 1000.5L929.1 1000.3L930.6 1000.1L932.1 999.9L933.6 999.7L935.1 999.5L936.6 999.3L938.1 999.1L939.6 998.9L941.1 998.8L942.6 998.6L944.1 998.4L945.6 998.3L947.1 998.2L948.6 998.0L950.1 997.9L951.6 997.8L953.1 997.8L954.6 997.7L956.1 997.7L957.6 997.6L959.1 997.6L960.6 997.6L962.1 997.7L963.6 997.7L965.1 997.8L966.6 997.9L968.1 997.9L969.6 998.1L971.1 998.2L972.6 998.3L974.1 998.4L975.6 998.6L977.1 998.7L978.6 998.9L980.1 999.0L981.6 999.2L983.1 999.4L984.6 999.6L986.1 999.7L987.6 999.9L989.1 1000.1L990.6 1000.3L992.1 1000.4L993.6 1000.6L995.1 1000.8L996.6 1001.0L998.1 1001.2L999.6 1001.4L1001.1 1001.6L1002.6 1001.8L1004.1 1002.0L1005.6 1002.2L1007.1 1002.4L1008.6 1002.6L1010.1 1002.8L1011.6 1003.0L1013.1 1003.2L1014.6 1003.4L1016.1 1003.6L1017.6 1003.8L1019.1 1004.0L1020.6 1004.2L1022.1 1004.4L1023.6 1004.6L1025.1 1004.8L1026.6 1005.0L1028.1 1005.1L1029.6 1005.3L1031.1 1005.6L1032.6 1005.8L1034.1 1006.0L1035.6 1006.2L1037.1 1006.4L1038.6 1006.7L1040.1 1006.9L1041.6 1007.2L1043.1 1007.5L1044.6 1007.8L1046.1 1008.1L1047.6 1008.4L1049.1 1008.8L1050.6 1009.2L1052.1 1009.6L1053.6 1010.0L1055.1 1010.4L1056.7 1010.9L1058.2 1011.4L1059.7 1011.8L1061.2 1012.3L1062.7 1012.8L1064.2 1013.3L1065.7 1013.7L1067.2 1014.2L1068.7 1014.6L1070.2 1015.0L1071.7 1015.4L1073.2 1015.8L1074.7 1016.2L1076.2 1016.6L1077.7 1017.0L1079.2 1017.3L1080.7 1017.7L1082.2 1018.1L1083.7 1018.4L1085.2 1018.8L1086.7 1019.2L1088.2 1019.6L1089.7 1020.0L1091.2 1020.4L1092.7 1020.8L1094.2 1021.3L1095.7 1021.8L1097.2 1022.2L1098.7 1022.8L1100.2 1023.3L1101.7 1023.9L1103.2 1024.4L1104.7 1025.0L1106.2 1025.6L1107.7 1026.3L1109.2 1026.9L1110.7 1027.6L1112.2 1028.3L1113.7 1028.9L1115.2 1029.7L1116.7 1030.4L1118.2 1031.1L1119.7 1031.8L1121.2 1032.6L1122.7 1033.3L1124.2 1034.0L1125.7 1034.8L1127.2 1035.6L1128.7 1036.3L1130.2 1037.1L1131.7 1037.9L1133.2 1038.7L1134.7 1039.5L1136.2 1040.3L1137.7 1041.1L1139.2 1042.0L1140.7 1042.8L1142.2 1043.6L1143.7 1044.4L1145.2 1045.2L1146.7 1046.0L1148.2 1046.7L1149.7 1047.5L1151.2 1048.2L1152.7 1048.9L1154.2 1049.6L1155.7 1050.3L1157.2 1051.0L1158.7 1051.7L1160.2 1052.4L1161.7 1053.1L1163.2 1053.7L1164.7 1054.4L1166.2 1055.1L1167.7 1055.7L1169.2 1056.4L1170.7 1057.0L1172.2 1057.6L1173.7 1058.3L1175.2 1058.9L1176.7 1059.5L1178.2 1060.1L1179.7 1060.7L1181.2 1061.3L1182.7 1061.8L1184.2 1062.4L1185.7 1063.0L1187.2 1063.5L1188.7 1064.1L1190.2 1064.6L1191.7 1065.2L1193.2 1065.7L1194.7 1066.3L1196.2 1066.8L1197.7 1067.3L1199.2 1067.8L1200.7 1068.3L1202.2 1068.8L1203.7 1069.3L1205.2 1069.8L1206.7 1070.3L1208.2 1070.8L1209.7 1071.2L1211.2 1071.7L1212.7 1072.1L1214.2 1072.6L1215.7 1073.0L1217.2 1073.4L1218.7 1073.9L1220.2 1074.3L1221.7 1074.7L1223.2 1075.1L1224.7 1075.5L1226.2 1075.9L1227.7 1076.3L1229.2 1076.7L1230.7 1077.1L1232.2 1077.5L1233.7 1077.9L1235.2 1078.3L1236.7 1078.7L1238.2 1079.1L1239.7 1079.5L1241.2 1079.9L1242.7 1080.3L1244.2 1080.7L1245.7 1081.2L1247.2 1081.6L1248.7 1082.0L1250.2 1082.4L1251.7 1082.9L1253.2 1083.3L1254.7 1083.7L1256.2 1084.1L1257.7 1084.6L1259.2 1085.0L1260.7 1085.4L1262.2 1085.8L1263.7 1086.3L1265.2 1086.7L1266.7 1087.1L1268.2 1087.6L1269.7 1088.0L1271.2 1088.4L1272.7 1088.9L1274.2 1089.3L1275.7 1089.8L1277.2 1090.2L1278.7 1090.7L1280.2 1091.1L1281.7 1091.6L1283.2 1092.1L1284.7 1092.6L1286.2 1093.0L1287.7 1093.5L1289.2 1094.0L1290.7 1094.5L1292.2 1095.0L1293.7 1095.5L1295.2 1096.1L1296.7 1096.6L1298.2 1097.1L1299.7 1097.7L1301.2 1098.2L1302.7 1098.8L1304.2 1099.3L1305.7 1099.9L1307.2 1100.5L1308.7 1101.1L1310.2 1101.6L1311.7 1102.2L1313.2 1102.8L1314.7 1103.4L1316.2 1104.1L1317.7 1104.7L1319.2 1105.3L1320.7 1106.0L1322.2 1106.6L1323.7 1107.3L1325.2 1108.0L1326.7 1108.7L1328.2 1109.5L1329.7 1110.2L1331.2 1110.9L1332.7 1111.7L1334.2 1112.4L1335.7 1113.1L1337.2 1113.7L1338.7 1114.4L1340.2 1115.0L1341.7 1115.6L1343.2 1116.2L1344.7 1116.8L1346.3 1117.3L1347.8 1117.9L1349.3 1118.4L1350.8 1118.9L1352.3 1119.4L1353.8 1119.9L1355.3 1120.4L1356.8 1120.9L1358.3 1121.4L1359.8 1121.9L1361.3 1122.4L1362.8 1122.9L1364.3 1123.3L1365.8 1123.8L1367.3 1124.3L1368.8 1124.7L1370.3 1125.2L1371.8 1125.7L1373.3 1126.1L1374.8 1126.6L1376.3 1127.1L1377.8 1127.5L1379.3 1128.0L1380.8 1128.5L1382.3 1128.9L1383.8 1129.4L1385.3 1129.9L1386.8 1130.3L1388.3 1130.8L1389.8 1131.3L1391.3 1131.7L1392.8 1132.2L1394.3 1132.6L1395.8 1133.1L1397.3 1133.5L1398.8 1134.0L1400.3 1134.4L1401.8 1134.9L1403.3 1135.3L1404.8 1135.8L1406.3 1136.2L1407.8 1136.7L1409.3 1137.1L1410.8 1137.6L1412.3 1138.0L1413.8 1138.5L1415.3 1138.9L1416.8 1139.3L1418.3 1139.8L1419.8 1140.2L1421.3 1140.7L1422.8 1141.2L1424.3 1141.6L1425.8 1142.1L1427.3 1142.5L1428.8 1143.0L1430.3 1143.5L1431.8 1144.0L1433.3 1144.4L1434.8 1144.9L1436.3 1145.4L1437.8 1145.8L1439.3 1146.3L1440.8 1146.8L1442.3 1147.2L1443.8 1147.7L1445.3 1148.2L1446.8 1148.6L1448.3 1149.0L1449.8 1149.5L1451.3 1149.9L1452.8 1150.3L1454.3 1150.8L1455.8 1151.2L1457.3 1151.6L1458.8 1152.0L1460.3 1152.4L1461.8 1152.7L1463.3 1153.1L1464.8 1153.5L1466.3 1153.9L1467.8 1154.2L1469.3 1154.6L1470.8 1155.0L1472.3 1155.3L1473.8 1155.7L1475.3 1156.0L1476.8 1156.4L1478.3 1156.7L1479.8 1157.0L1481.3 1157.4L1482.8 1157.7L1484.3 1158.0L1485.8 1158.3L1487.3 1158.6L1488.8 1158.9L1490.3 1159.2L1491.8 1159.5L1493.3 1159.8L1494.8 1160.1L1496.3 1160.4L1497.8 1160.6L1499.3 1160.9L1500.8 1161.1L1502.3 1161.4L1503.8 1161.6L1505.3 1161.9L1506.8 1162.1L1508.3 1162.4L1509.8 1162.6L1511.3 1162.8L1512.8 1163.1L1514.3 1163.3L1515.8 1163.5L1517.3 1163.8L1518.8 1164.0L1520.3 1164.2L1521.8 1164.4L1523.3 1164.6L1524.8 1164.8L1526.3 1165.0L1527.8 1165.2L1529.3 1165.3L1530.8 1165.5L1532.3 1165.7L1533.8 1165.8L1535.3 1166.0L1536.8 1166.1L1538.3 1166.2L1539.8 1166.3L1541.3 1166.4L1542.8 1166.5L1544.3 1166.6L1545.8 1166.7L1547.3 1166.8L1548.8 1166.9L1550.3 1167.0L1551.8 1167.1L1553.3 1167.2L1554.8 1167.2L1556.3 1167.3L1557.8 1167.4L1559.3 1167.4L1560.8 1167.5L1562.3 1167.6L1563.8 1167.6L1565.3 1167.7L1566.8 1167.8L1568.3 1167.8L1569.8 1167.9L1571.3 1167.9L1572.8 1168.0L1574.3 1168.0L1575.8 1168.1L1577.3 1168.1L1578.8 1168.1L1580.3 1168.2L1581.8 1168.2L1583.3 1168.3L1584.8 1168.3L1586.3 1168.3L1587.8 1168.4L1589.3 1168.4L1590.8 1168.5L1592.3 1168.5L1593.8 1168.5L1595.3 1168.6L1596.8 1168.6L1598.3 1168.6L1599.8 1168.7L1601.3 1168.7L1602.8 1168.7L1604.3 1168.7L1605.8 1168.8L1607.3 1168.8L1608.8 1168.8L1610.3 1168.8L1611.8 1168.9L1613.3 1168.9L1614.8 1168.9L1616.3 1168.9L1617.8 1168.9L1619.3 1168.9L1620.8 1168.9L1622.3 1168.9L1623.8 1168.9L1625.3 1168.9L1626.8 1168.9L1628.3 1168.9L1629.8 1168.9L1631.3 1168.9L1632.8 1168.9L1634.3 1168.9L1635.9 1168.9L1637.4 1168.9L1638.9 1168.9L1640.4 1168.9L1641.9 1168.9L1643.4 1168.9L1644.9 1168.9L1646.4 1168.9L1647.9 1168.9L1649.4 1168.9L1650.9 1168.9L1652.4 1168.9L1653.9 1168.9L1655.4 1168.9L1656.9 1168.9L1658.4 1168.9L1659.9 1168.9L1661.4 1168.9L1662.9 1168.9L1664.4 1168.9L1665.9 1168.9L1667.4 1168.9L1668.9 1168.9L1670.4 1168.9L1671.9 1168.9L1673.4 1168.9L1674.9 1168.9L1676.4 1168.9L1677.9 1168.9L1679.4 1168.9L1680.9 1168.9L1682.4 1168.9L1683.9 1168.9L1685.4 1168.9L1686.9 1168.9L1688.4 1168.9L1689.9 1168.9L1691.4 1168.9L1692.9 1168.9L1694.4 1168.9L1695.9 1168.9L1697.4 1168.9L1698.9 1168.9L1700.4 1168.9L1701.9 1168.9L1703.4 1168.9L1704.9 1168.9L1706.4 1168.9L1707.9 1168.9L1709.4 1168.9L1710.9 1168.9L1712.4 1168.9L1713.9 1168.9L1715.4 1168.9L1716.9 1168.9L1718.4 1168.9L1719.9 1168.9L1721.4 1168.9L1722.9 1168.9L1724.4 1168.9L1725.9 1168.9L1727.4 1168.9L1728.9 1168.9L1730.4 1168.9L1731.9 1168.9L1733.4 1168.9L1734.9 1168.9L1736.4 1168.9L1737.9 1168.9L1739.4 1168.9L1740.9 1168.9L1742.4 1168.9L1743.9 1168.9L1745.4 1168.9L1746.9 1168.9L1748.4 1168.9L1749.9 1168.9L1751.4 1168.9L1752.9 1168.9L1754.4 1168.9L1755.9 1168.9L1757.4 1168.9L1758.9 1168.9L1760.4 1168.9L1761.9 1168.9L1763.4 1168.9L1764.9 1168.9L1766.4 1168.9L1767.9 1168.9L1769.4 1168.9L1770.9 1168.9L1772.4 1168.9L1773.9 1168.9L1775.4 1168.9L1776.9 1168.9L1778.4 1168.9L1779.9 1168.9L1781.4 1168.9L1782.9 1168.9L1784.4 1168.9L1785.9 1168.9L1787.4 1168.9L1788.9 1168.9L1790.4 1168.9L1791.9 1168.9L1793.4 1168.9L1794.9 1168.9L1796.4 1168.9L1797.9 1168.9L1799.4 1168.9L1800.9 1168.9L1802.4 1168.9L1803.9 1168.9L1805.4 1168.9L1806.9 1168.9L1808.4 1168.9L1809.9 1168.9L1811.4 1168.9L1812.9 1168.9L1814.4 1168.9L1815.9 1168.9L1817.4 1168.9L1818.9 1168.9L1820.4 1168.9L1821.9 1168.9L1823.4 1168.9L1824.9 1168.9L1826.4 1168.9L1827.9 1168.9L1829.4 1168.9L1830.9 1168.9L1832.4 1168.9L1833.9 1168.9L1835.4 1168.9L1836.9 1168.9L1838.4 1168.9L1839.9 1168.9L1841.4 1168.9L1842.9 1168.9L1844.4 1168.9L1845.9 1168.9L1847.4 1168.9L1848.9 1168.9L1850.4 1168.9L1851.9 1168.9L1853.4 1168.9L1854.9 1168.9L1856.4 1168.9L1857.9 1168.9L1859.4 1168.9L1860.9 1168.9L1862.4 1168.9L1863.9 1168.9L1865.4 1168.9L1866.9 1168.9L1868.4 1168.9L1869.9 1168.9L1871.4 1168.9L1872.9 1168.9L1874.4 1168.9L1875.9 1168.9L1877.4 1168.9L1878.9 1168.9L1880.4 1168.9L1881.9 1168.9L1883.4 1168.9L1884.9 1168.9L1886.4 1168.9L1887.9 1168.9L1889.4 1168.9L1890.9 1168.9L1892.4 1168.9L1893.9 1168.9L1895.4 1168.9L1896.9 1168.9L1898.4 1168.9L1899.9 1168.9L1901.4 1168.9L1902.9 1168.9L1904.4 1168.9L1905.9 1168.9L1907.4 1168.9L1908.9 1168.9L1910.4 1168.9L1911.9 1168.9L1913.4 1168.9L1914.9 1168.9L1916.4 1168.9L1917.9 1168.9L1919.4 1168.9L1920.9 1168.9L1922.4 1168.9L1924.0 1168.9L1925.5 1168.9L1927.0 1168.9L1928.5 1168.9L1930.0 1168.9L1931.5 1168.9L1933.0 1168.9L1934.5 1168.9L1936.0 1168.9L1937.5 1168.9L1939.0 1168.9L1940.5 1168.9L1942.0 1168.9L1943.5 1168.9L1945.0 1168.9L1946.5 1168.9L1948.0 1168.9L1949.5 1168.9L1951.0 1168.9L1952.5 1168.9L1954.0 1168.9L1955.5 1168.9L1957.0 1168.9L1958.5 1168.9L1960.0 1168.9L1961.5 1168.9L1963.0 1168.9L1964.5 1168.9L1966.0 1168.9L1967.5 1168.9L1969.0 1168.9L1970.5 1168.9L1972.0 1168.9L1973.5 1168.9L1975.0 1168.9L1976.5 1168.9L1978.0 1168.9L1979.5 1168.9L1981.0 1168.9L1982.5 1168.9L1984.0 1168.9L1985.5 1168.9L1987.0 1168.9L1988.5 1168.9L1990.0 1168.9L1991.5 1168.9L1993.0 1168.9L1994.5 1168.9L1996.0 1168.9L1997.5 1168.9L1999.0 1168.9L2000.5 1168.9L2002.0 1168.9L2003.5 1168.9L2005.0 1168.9L2006.5 1168.9L2008.0 1168.9L2009.5 1168.9L2011.0 1168.9L2012.5 1168.9L2014.0 1168.9L2015.5 1168.9L2017.0 1168.9L2018.5 1168.9L2020.0 1168.9L2021.5 1168.9L2023.0 1168.9L2024.5 1168.9L2026.0 1168.9L2027.5 1168.9L2029.0 1168.9L2030.5 1168.9L2032.0 1168.9L2033.5 1168.9L2035.0 1168.9L2036.5 1168.9L2038.0 1168.9L2039.5 1168.9L2041.0 1168.9L2042.5 1168.9L2044.0 1168.9L2045.5 1168.9L2047.0 1168.9L2048.5 1168.9L2050.0 1168.9L2051.5 1168.9L2053.0 1168.9L2054.5 1168.9L2056.0 1168.9L2057.5 1168.9L2059.0 1168.9L2060.5 1168.9L2062.0 1168.9L2063.5 1168.9L2065.0 1168.9L2066.5 1168.9L2068.0 1168.9" fill="none" stroke="#000" stroke-width="1.75" stroke-linejoin="round"/>
<path d="M623.0 1156.4L624.5 1156.3L626.0 1156.2L627.5 1156.1L629.0 1156.0L630.5 1155.9L632.0 1155.7L633.5 1155.6L635.0 1155.5L636.5 1155.4L638.0 1155.3L639.5 1155.3L641.0 1155.2L642.5 1155.1L644.0 1155.0L645.5 1154.9L647.0 1154.8L648.5 1154.8L650.0 1154.7L651.5 1154.6L653.0 1154.6L654.5 1154.5L656.0 1154.5L657.5 1154.5L659.0 1154.4L660.5 1154.4L662.0 1154.4L663.5 1154.4L665.0 1154.4L666.5 1154.4L668.0 1154.4L669.5 1154.4L671.0 1154.4L672.5 1154.4L674.0 1154.4L675.5 1154.4L677.0 1154.4L678.5 1154.4L680.0 1154.4L681.5 1154.4L683.0 1154.4L684.5 1154.4L686.0 1154.4L687.5 1154.4L689.0 1154.4L690.5 1154.4L692.0 1154.4L693.5 1154.4L695.0 1154.4L696.5 1154.4L698.0 1154.4L699.5 1154.4L701.0 1154.4L702.5 1154.4L704.0 1154.4L705.5 1154.4L707.0 1154.3L708.5 1154.3L710.0 1154.2L711.5 1154.2L713.0 1154.1L714.5 1154.0L716.0 1153.9L717.5 1153.8L719.0 1153.7L720.5 1153.6L722.0 1153.4L723.5 1153.3L725.0 1153.1L726.5 1153.0L728.0 1152.8L729.5 1152.6L731.0 1152.5L732.5 1152.3L734.0 1152.1L735.5 1151.9L737.0 1151.6L738.5 1151.4L740.0 1151.1L741.5 1150.7L743.0 1150.3L744.5 1149.9L746.0 1149.4L747.5 1148.9L749.0 1148.4L750.5 1147.8L752.0 1147.2L753.5 1146.5L755.0 1145.9L756.5 1145.2L758.0 1144.5L759.5 1143.7L761.0 1143.0L762.5 1142.2L764.0 1141.4L765.5 1140.6L767.0 1139.7L768.6 1138.8L770.1 1137.8L771.6 1136.8L773.1 1135.7L774.6 1134.6L776.1 1133.4L777.6 1132.2L779.1 1131.0L780.6 1129.7L782.1 1128.5L783.6 1127.1L785.1 1125.8L786.6 1124.4L788.1 1123.0L789.6 1121.5L791.1 1120.0L792.6 1118.4L794.1 1116.8L795.6 1115.2L797.1 1113.5L798.6 1111.8L800.1 1110.1L801.6 1108.3L803.1 1106.5L804.6 1104.7L806.1 1102.9L807.6 1101.0L809.1 1099.0L810.6 1097.0L812.1 1095.0L813.6 1093.0L815.1 1090.9L816.6 1088.8L818.1 1086.8L819.6 1084.7L821.1 1082.7L822.6 1080.7L824.1 1078.7L825.6 1076.8L827.1 1074.8L828.6 1072.9L830.1 1070.9L831.6 1069.0L833.1 1067.1L834.6 1065.2L836.1 1063.3L837.6 1061.4L839.1 1059.5L840.6 1057.7L842.1 1055.9L843.6 1054.0L845.1 1052.2L846.6 1050.5L848.1 1048.7L849.6 1046.9L851.1 1045.2L852.6 1043.5L854.1 1041.8L855.6 1040.1L857.1 1038.4L858.6 1036.7L860.1 1035.0L861.6 1033.4L863.1 1031.7L864.6 1030.1L866.1 1028.4L867.6 1026.8L869.1 1025.1L870.6 1023.5L872.1 1021.9L873.6 1020.4L875.1 1018.8L876.6 1017.3L878.1 1015.9L879.6 1014.5L881.1 1013.1L882.6 1011.8L884.1 1010.6L885.6 1009.3L887.1 1008.1L888.6 1007.0L890.1 1005.8L891.6 1004.7L893.1 1003.5L894.6 1002.4L896.1 1001.3L897.6 1000.2L899.1 999.1L900.6 997.9L902.1 996.8L903.6 995.7L905.1 994.6L906.6 993.4L908.1 992.3L909.6 991.2L911.1 990.1L912.6 989.0L914.1 987.9L915.6 986.8L917.1 985.8L918.6 984.7L920.1 983.7L921.6 982.7L923.1 981.6L924.6 980.6L926.1 979.7L927.6 978.7L929.1 977.7L930.6 976.7L932.1 975.7L933.6 974.7L935.1 973.7L936.6 972.7L938.1 971.7L939.6 970.7L941.1 969.7L942.6 968.7L944.1 967.7L945.6 966.7L947.1 965.7L948.6 964.7L950.1 963.6L951.6 962.6L953.1 961.6L954.6 960.7L956.1 959.7L957.6 958.7L959.1 957.7L960.6 956.8L962.1 955.8L963.6 954.9L965.1 954.0L966.6 953.0L968.1 952.1L969.6 951.1L971.1 950.2L972.6 949.2L974.1 948.3L975.6 947.3L977.1 946.3L978.6 945.3L980.1 944.3L981.6 943.3L983.1 942.3L984.6 941.4L986.1 940.5L987.6 939.6L989.1 938.7L990.6 937.9L992.1 937.1L993.6 936.3L995.1 935.6L996.6 935.0L998.1 934.4L999.6 933.9L1001.1 933.5L1002.6 933.1L1004.1 932.8L1005.6 932.5L1007.1 932.2L1008.6 931.9L1010.1 931.7L1011.6 931.5L1013.1 931.3L1014.6 931.2L1016.1 931.1L1017.6 931.1L1019.1 931.1L1020.6 931.2L1022.1 931.4L1023.6 931.6L1025.1 931.8L1026.6 932.1L1028.1 932.4L1029.6 932.7L1031.1 933.1L1032.6 933.5L1034.1 933.9L1035.6 934.3L1037.1 934.8L1038.6 935.4L1040.1 936.0L1041.6 936.6L1043.1 937.3L1044.6 938.0L1046.1 938.8L1047.6 939.6L1049.1 940.4L1050.6 941.3L1052.1 942.1L1053.6 943.0L1055.1 943.9L1056.7 944.9L1058.2 945.8L1059.7 946.8L1061.2 947.9L1062.7 949.0L1064.2 950.1L1065.7 951.3L1067.2 952.4L1068.7 953.6L1070.2 954.8L1071.7 956.0L1073.2 957.2L1074.7 958.5L1076.2 959.7L1077.7 961.0L1079.2 962.3L1080.7 963.6L1082.2 965.0L1083.7 966.3L1085.2 967.7L1086.7 969.1L1088.2 970.5L1089.7 971.9L1091.2 973.3L1092.7 974.7L1094.2 976.1L1095.7 977.4L1097.2 978.8L1098.7 980.1L1100.2 981.4L1101.7 982.7L1103.2 983.9L1104.7 985.1L1106.2 986.4L1107.7 987.6L1109.2 988.8L1110.7 990.0L1112.2 991.1L1113.7 992.3L1115.2 993.5L1116.7 994.6L1118.2 995.8L1119.7 997.0L1121.2 998.1L1122.7 999.3L1124.2 1000.4L1125.7 1001.6L1127.2 1002.8L1128.7 1004.0L1130.2 1005.2L1131.7 1006.4L1133.2 1007.6L1134.7 1008.8L1136.2 1010.0L1137.7 1011.2L1139.2 1012.5L1140.7 1013.7L1142.2 1014.9L1143.7 1016.1L1145.2 1017.2L1146.7 1018.4L1148.2 1019.5L1149.7 1020.7L1151.2 1021.8L1152.7 1022.9L1154.2 1024.1L1155.7 1025.2L1157.2 1026.3L1158.7 1027.4L1160.2 1028.6L1161.7 1029.7L1163.2 1030.9L1164.7 1032.0L1166.2 1033.2L1167.7 1034.4L1169.2 1035.6L1170.7 1036.8L1172.2 1038.0L1173.7 1039.2L1175.2 1040.4L1176.7 1041.6L1178.2 1042.9L1179.7 1044.2L1181.2 1045.5L1182.7 1046.8L1184.2 1048.1L1185.7 1049.5L1187.2 1050.9L1188.7 1052.3L1190.2 1053.7L1191.7 1055.1L1193.2 1056.5L1194.7 1058.0L1196.2 1059.4L1197.7 1060.8L1199.2 1062.2L1200.7 1063.6L1202.2 1065.0L1203.7 1066.4L1205.2 1067.8L1206.7 1069.2L1208.2 1070.5L1209.7 1071.9L1211.2 1073.2L1212.7 1074.6L1214.2 1075.9L1215.7 1077.3L1217.2 1078.6L1218.7 1080.0L1220.2 1081.3L1221.7 1082.6L1223.2 1083.9L1224.7 1085.1L1226.2 1086.4L1227.7 1087.6L1229.2 1088.7L1230.7 1089.8L1232.2 1090.9L1233.7 1091.9L1235.2 1092.9L1236.7 1093.9L1238.2 1094.8L1239.7 1095.7L1241.2 1096.6L1242.7 1097.5L1244.2 1098.3L1245.7 1099.2L1247.2 1100.0L1248.7 1100.7L1250.2 1101.5L1251.7 1102.3L1253.2 1103.0L1254.7 1103.7L1256.2 1104.4L1257.7 1105.0L1259.2 1105.7L1260.7 1106.3L1262.2 1106.9L1263.7 1107.5L1265.2 1108.1L1266.7 1108.6L1268.2 1109.2L1269.7 1109.8L1271.2 1110.3L1272.7 1110.8L1274.2 1111.3L1275.7 1111.8L1277.2 1112.3L1278.7 1112.8L1280.2 1113.2L1281.7 1113.6L1283.2 1114.0L1284.7 1114.4L1286.2 1114.7L1287.7 1115.0L1289.2 1115.3L1290.7 1115.6L1292.2 1115.8L1293.7 1116.1L1295.2 1116.3L1296.7 1116.5L1298.2 1116.7L1299.7 1117.0L1301.2 1117.2L1302.7 1117.4L1304.2 1117.7L1305.7 1117.9L1307.2 1118.1L1308.7 1118.3L1310.2 1118.6L1311.7 1118.8L1313.2 1119.0L1314.7 1119.2L1316.2 1119.4L1317.7 1119.7L1319.2 1119.9L1320.7 1120.1L1322.2 1120.3L1323.7 1120.6L1325.2 1120.8L1326.7 1121.1L1328.2 1121.3L1329.7 1121.6L1331.2 1121.9L1332.7 1122.2L1334.2 1122.5L1335.7 1122.8L1337.2 1123.1L1338.7 1123.4L1340.2 1123.8L1341.7 1124.2L1343.2 1124.6L1344.7 1125.0L1346.3 1125.5L1347.8 1126.0L1349.3 1126.5L1350.8 1127.0L1352.3 1127.6L1353.8 1128.2L1355.3 1128.8L1356.8 1129.4L1358.3 1130.0L1359.8 1130.7L1361.3 1131.3L1362.8 1132.0L1364.3 1132.6L1365.8 1133.2L1367.3 1133.9L1368.8 1134.5L1370.3 1135.2L1371.8 1135.8L1373.3 1136.4L1374.8 1137.0L1376.3 1137.5L1377.8 1138.1L1379.3 1138.6L1380.8 1139.2L1382.3 1139.7L1383.8 1140.2L1385.3 1140.7L1386.8 1141.2L1388.3 1141.7L1389.8 1142.2L1391.3 1142.7L1392.8 1143.2L1394.3 1143.7L1395.8 1144.2L1397.3 1144.7L1398.8 1145.2L1400.3 1145.7L1401.8 1146.1L1403.3 1146.6L1404.8 1147.0L1406.3 1147.5L1407.8 1147.9L1409.3 1148.3L1410.8 1148.7L1412.3 1149.1L1413.8 1149.5L1415.3 1149.9L1416.8 1150.3L1418.3 1150.6L1419.8 1151.0L1421.3 1151.3L1422.8 1151.6L1424.3 1151.9L1425.8 1152.2L1427.3 1152.5L1428.8 1152.8L1430.3 1153.1L1431.8 1153.4L1433.3 1153.6L1434.8 1153.9L1436.3 1154.2L1437.8 1154.4L1439.3 1154.7L1440.8 1154.9L1442.3 1155.1L1443.8 1155.4L1445.3 1155.6L1446.8 1155.8L1448.3 1156.1L1449.8 1156.3L1451.3 1156.5L1452.8 1156.7L1454.3 1156.9L1455.8 1157.2L1457.3 1157.4L1458.8 1157.6L1460.3 1157.8L1461.8 1158.0L1463.3 1158.2L1464.8 1158.4L1466.3 1158.6L1467.8 1158.8L1469.3 1158.9L1470.8 1159.1L1472.3 1159.3L1473.8 1159.5L1475.3 1159.7L1476.8 1159.8L1478.3 1160.0L1479.8 1160.2L1481.3 1160.3L1482.8 1160.5L1484.3 1160.7L1485.8 1160.8L1487.3 1161.0L1488.8 1161.2L1490.3 1161.3L1491.8 1161.5L1493.3 1161.6L1494.8 1161.8L1496.3 1162.0L1497.8 1162.1L1499.3 1162.3L1500.8 1162.4L1502.3 1162.6L1503.8 1162.8L1505.3 1162.9L1506.8 1163.1L1508.3 1163.3L1509.8 1163.4L1511.3 1163.6L1512.8 1163.7L1514.3 1163.9L1515.8 1164.1L1517.3 1164.2L1518.8 1164.4L1520.3 1164.6L1521.8 1164.7L1523.3 1164.9L1524.8 1165.0L1526.3 1165.2L1527.8 1165.3L1529.3 1165.5L1530.8 1165.6L1532.3 1165.7L1533.8 1165.9L1535.3 1166.0L1536.8 1166.1L1538.3 1166.2L1539.8 1166.3L1541.3 1166.4L1542.8 1166.6L1544.3 1166.7L1545.8 1166.8L1547.3 1166.9L1548.8 1167.0L1550.3 1167.1L1551.8 1167.2L1553.3 1167.3L1554.8 1167.4L1556.3 1167.4L1557.8 1167.5L1559.3 1167.6L1560.8 1167.7L1562.3 1167.8L1563.8 1167.9L1565.3 1168.0L1566.8 1168.0L1568.3 1168.1L1569.8 1168.2L1571.3 1168.2L1572.8 1168.3L1574.3 1168.3L1575.8 1168.4L1577.3 1168.4L1578.8 1168.5L1580.3 1168.5L1581.8 1168.5L1583.3 1168.5L1584.8 1168.6L1586.3 1168.6L1587.8 1168.6L1589.3 1168.6L1590.8 1168.7L1592.3 1168.7L1593.8 1168.7L1595.3 1168.7L1596.8 1168.7L1598.3 1168.8L1599.8 1168.8L1601.3 1168.8L1602.8 1168.8L1604.3 1168.8L1605.8 1168.8L1607.3 1168.8L1608.8 1168.9L1610.3 1168.9L1611.8 1168.9L1613.3 1168.9L1614.8 1168.9L1616.3 1168.9L1617.8 1168.9L1619.3 1168.9L1620.8 1168.9L1622.3 1168.9L1623.8 1168.9L1625.3 1168.9L1626.8 1168.9L1628.3 1168.9L1629.8 1168.9L1631.3 1168.9L1632.8 1168.9L1634.3 1168.9L1635.9 1168.9L1637.4 1168.9L1638.9 1168.9L1640.4 1168.9L1641.9 1168.9L1643.4 1168.9L1644.9 1168.9L1646.4 1168.9L1647.9 1168.9L1649.4 1168.9L1650.9 1168.9L1652.4 1168.9L1653.9 1168.9L1655.4 1168.9L1656.9 1168.9L1658.4 1168.9L1659.9 1168.9L1661.4 1168.9L1662.9 1168.9L1664.4 1168.9L1665.9 1168.9L1667.4 1168.9L1668.9 1168.9L1670.4 1168.9L1671.9 1168.9L1673.4 1168.9L1674.9 1168.9L1676.4 1168.9L1677.9 1168.9L1679.4 1168.9L1680.9 1168.9L1682.4 1168.9L1683.9 1168.9L1685.4 1168.9L1686.9 1168.9L1688.4 1168.9L1689.9 1168.9L1691.4 1168.9L1692.9 1168.9L1694.4 1168.9L1695.9 1168.9L1697.4 1168.9L1698.9 1168.9L1700.4 1168.9L1701.9 1168.9L1703.4 1168.9L1704.9 1168.9L1706.4 1168.9L1707.9 1168.9L1709.4 1168.9L1710.9 1168.9L1712.4 1168.9L1713.9 1168.9L1715.4 1168.9L1716.9 1168.9L1718.4 1168.9L1719.9 1168.9L1721.4 1168.9L1722.9 1168.9L1724.4 1168.9L1725.9 1168.9L1727.4 1168.9L1728.9 1168.9L1730.4 1168.9L1731.9 1168.9L1733.4 1168.9L1734.9 1168.9L1736.4 1168.9L1737.9 1168.9L1739.4 1168.9L1740.9 1168.9L1742.4 1168.9L1743.9 1168.9L1745.4 1168.9L1746.9 1168.9L1748.4 1168.9L1749.9 1168.9L1751.4 1168.9L1752.9 1168.9L1754.4 1168.9L1755.9 1168.9L1757.4 1168.9L1758.9 1168.9L1760.4 1168.9L1761.9 1168.9L1763.4 1168.9L1764.9 1168.9L1766.4 1168.9L1767.9 1168.9L1769.4 1168.9L1770.9 1168.9L1772.4 1168.9L1773.9 1168.9L1775.4 1168.9L1776.9 1168.9L1778.4 1168.9L1779.9 1168.9L1781.4 1168.9L1782.9 1168.9L1784.4 1168.9L1785.9 1168.9L1787.4 1168.9L1788.9 1168.9L1790.4 1168.9L1791.9 1168.9L1793.4 1168.9L1794.9 1168.9L1796.4 1168.9L1797.9 1168.9L1799.4 1168.9L1800.9 1168.9L1802.4 1168.9L1803.9 1168.9L1805.4 1168.9L1806.9 1168.9L1808.4 1168.9L1809.9 1168.9L1811.4 1168.9L1812.9 1168.9L1814.4 1168.9L1815.9 1168.9L1817.4 1168.9L1818.9 1168.9L1820.4 1168.9L1821.9 1168.9L1823.4 1168.9L1824.9 1168.9L1826.4 1168.9L1827.9 1168.9L1829.4 1168.9L1830.9 1168.9L1832.4 1168.9L1833.9 1168.9L1835.4 1168.9L1836.9 1168.9L1838.4 1168.9L1839.9 1168.9L1841.4 1168.9L1842.9 1168.9L1844.4 1168.9L1845.9 1168.9L1847.4 1168.9L1848.9 1168.9L1850.4 1168.9L1851.9 1168.9L1853.4 1168.9L1854.9 1168.9L1856.4 1168.9L1857.9 1168.9L1859.4 1168.9L1860.9 1168.9L1862.4 1168.9L1863.9 1168.9L1865.4 1168.9L1866.9 1168.9L1868.4 1168.9L1869.9 1168.9L1871.4 1168.9L1872.9 1168.9L1874.4 1168.9L1875.9 1168.9L1877.4 1168.9L1878.9 1168.9L1880.4 1168.9L1881.9 1168.9L1883.4 1168.9L1884.9 1168.9L1886.4 1168.9L1887.9 1168.9L1889.4 1168.9L1890.9 1168.9L1892.4 1168.9L1893.9 1168.9L1895.4 1168.9L1896.9 1168.9L1898.4 1168.9L1899.9 1168.9L1901.4 1168.9L1902.9 1168.9L1904.4 1168.9L1905.9 1168.9L1907.4 1168.9L1908.9 1168.9L1910.4 1168.9L1911.9 1168.9L1913.4 1168.9L1914.9 1168.9L1916.4 1168.9L1917.9 1168.9L1919.4 1168.9L1920.9 1168.9L1922.4 1168.9L1924.0 1168.9L1925.5 1168.9L1927.0 1168.9L1928.5 1168.9L1930.0 1168.9L1931.5 1168.9L1933.0 1168.9L1934.5 1168.9L1936.0 1168.9L1937.5 1168.9L1939.0 1168.9L1940.5 1168.9L1942.0 1168.9L1943.5 1168.9L1945.0 1168.9L1946.5 1168.9L1948.0 1168.9L1949.5 1168.9L1951.0 1168.9L1952.5 1168.9L1954.0 1168.9L1955.5 1168.9L1957.0 1168.9L1958.5 1168.9L1960.0 1168.9L1961.5 1168.9L1963.0 1168.9L1964.5 1168.9L1966.0 1168.9L1967.5 1168.9L1969.0 1168.9L1970.5 1168.9L1972.0 1168.9L1973.5 1168.9L1975.0 1168.9L1976.5 1168.9L1978.0 1168.9L1979.5 1168.9L1981.0 1168.9L1982.5 1168.9L1984.0 1168.9L1985.5 1168.9L1987.0 1168.9L1988.5 1168.9L1990.0 1168.9L1991.5 1168.9L1993.0 1168.9L1994.5 1168.9L1996.0 1168.9L1997.5 1168.9L1999.0 1168.9L2000.5 1168.9L2002.0 1168.9L2003.5 1168.9L2005.0 1168.9L2006.5 1168.9L2008.0 1168.9L2009.5 1168.9L2011.0 1168.9L2012.5 1168.9L2014.0 1168.9L2015.5 1168.9L2017.0 1168.9L2018.5 1168.9L2020.0 1168.9L2021.5 1168.9L2023.0 1168.9L2024.5 1168.9L2026.0 1168.9L2027.5 1168.9L2029.0 1168.9L2030.5 1168.9L2032.0 1168.9L2033.5 1168.9L2035.0 1168.9L2036.5 1168.9L2038.0 1168.9L2039.5 1168.9L2041.0 1168.9L2042.5 1168.9L2044.0 1168.9L2045.5 1168.9L2047.0 1168.9L2048.5 1168.9L2050.0 1168.9L2051.5 1168.9L2053.0 1168.9L2054.5 1168.9L2056.0 1168.9L2057.5 1168.9L2059.0 1168.9L2060.5 1168.9L2062.0 1168.9L2063.5 1168.9L2065.0 1168.9L2066.5 1168.9L2068.0 1168.9 L2068.0 1168.9 L623.0 1168.9 Z" fill="#24B441" fill-opacity="0.2" stroke="none"/>
<path d="M623.0 1156.4L624.5 1156.3L626.0 1156.2L627.5 1156.1L629.0 1156.0L630.5 1155.9L632.0 1155.7L633.5 1155.6L635.0 1155.5L636.5 1155.4L638.0 1155.3L639.5 1155.3L641.0 1155.2L642.5 1155.1L644.0 1155.0L645.5 1154.9L647.0 1154.8L648.5 1154.8L650.0 1154.7L651.5 1154.6L653.0 1154.6L654.5 1154.5L656.0 1154.5L657.5 1154.5L659.0 1154.4L660.5 1154.4L662.0 1154.4L663.5 1154.4L665.0 1154.4L666.5 1154.4L668.0 1154.4L669.5 1154.4L671.0 1154.4L672.5 1154.4L674.0 1154.4L675.5 1154.4L677.0 1154.4L678.5 1154.4L680.0 1154.4L681.5 1154.4L683.0 1154.4L684.5 1154.4L686.0 1154.4L687.5 1154.4L689.0 1154.4L690.5 1154.4L692.0 1154.4L693.5 1154.4L695.0 1154.4L696.5 1154.4L698.0 1154.4L699.5 1154.4L701.0 1154.4L702.5 1154.4L704.0 1154.4L705.5 1154.4L707.0 1154.3L708.5 1154.3L710.0 1154.2L711.5 1154.2L713.0 1154.1L714.5 1154.0L716.0 1153.9L717.5 1153.8L719.0 1153.7L720.5 1153.6L722.0 1153.4L723.5 1153.3L725.0 1153.1L726.5 1153.0L728.0 1152.8L729.5 1152.6L731.0 1152.5L732.5 1152.3L734.0 1152.1L735.5 1151.9L737.0 1151.6L738.5 1151.4L740.0 1151.1L741.5 1150.7L743.0 1150.3L744.5 1149.9L746.0 1149.4L747.5 1148.9L749.0 1148.4L750.5 1147.8L752.0 1147.2L753.5 1146.5L755.0 1145.9L756.5 1145.2L758.0 1144.5L759.5 1143.7L761.0 1143.0L762.5 1142.2L764.0 1141.4L765.5 1140.6L767.0 1139.7L768.6 1138.8L770.1 1137.8L771.6 1136.8L773.1 1135.7L774.6 1134.6L776.1 1133.4L777.6 1132.2L779.1 1131.0L780.6 1129.7L782.1 1128.5L783.6 1127.1L785.1 1125.8L786.6 1124.4L788.1 1123.0L789.6 1121.5L791.1 1120.0L792.6 1118.4L794.1 1116.8L795.6 1115.2L797.1 1113.5L798.6 1111.8L800.1 1110.1L801.6 1108.3L803.1 1106.5L804.6 1104.7L806.1 1102.9L807.6 1101.0L809.1 1099.0L810.6 1097.0L812.1 1095.0L813.6 1093.0L815.1 1090.9L816.6 1088.8L818.1 1086.8L819.6 1084.7L821.1 1082.7L822.6 1080.7L824.1 1078.7L825.6 1076.8L827.1 1074.8L828.6 1072.9L830.1 1070.9L831.6 1069.0L833.1 1067.1L834.6 1065.2L836.1 1063.3L837.6 1061.4L839.1 1059.5L840.6 1057.7L842.1 1055.9L843.6 1054.0L845.1 1052.2L846.6 1050.5L848.1 1048.7L849.6 1046.9L851.1 1045.2L852.6 1043.5L854.1 1041.8L855.6 1040.1L857.1 1038.4L858.6 1036.7L860.1 1035.0L861.6 1033.4L863.1 1031.7L864.6 1030.1L866.1 1028.4L867.6 1026.8L869.1 1025.1L870.6 1023.5L872.1 1021.9L873.6 1020.4L875.1 1018.8L876.6 1017.3L878.1 1015.9L879.6 1014.5L881.1 1013.1L882.6 1011.8L884.1 1010.6L885.6 1009.3L887.1 1008.1L888.6 1007.0L890.1 1005.8L891.6 1004.7L893.1 1003.5L894.6 1002.4L896.1 1001.3L897.6 1000.2L899.1 999.1L900.6 997.9L902.1 996.8L903.6 995.7L905.1 994.6L906.6 993.4L908.1 992.3L909.6 991.2L911.1 990.1L912.6 989.0L914.1 987.9L915.6 986.8L917.1 985.8L918.6 984.7L920.1 983.7L921.6 982.7L923.1 981.6L924.6 980.6L926.1 979.7L927.6 978.7L929.1 977.7L930.6 976.7L932.1 975.7L933.6 974.7L935.1 973.7L936.6 972.7L938.1 971.7L939.6 970.7L941.1 969.7L942.6 968.7L944.1 967.7L945.6 966.7L947.1 965.7L948.6 964.7L950.1 963.6L951.6 962.6L953.1 961.6L954.6 960.7L956.1 959.7L957.6 958.7L959.1 957.7L960.6 956.8L962.1 955.8L963.6 954.9L965.1 954.0L966.6 953.0L968.1 952.1L969.6 951.1L971.1 950.2L972.6 949.2L974.1 948.3L975.6 947.3L977.1 946.3L978.6 945.3L980.1 944.3L981.6 943.3L983.1 942.3L984.6 941.4L986.1 940.5L987.6 939.6L989.1 938.7L990.6 937.9L992.1 937.1L993.6 936.3L995.1 935.6L996.6 935.0L998.1 934.4L999.6 933.9L1001.1 933.5L1002.6 933.1L1004.1 932.8L1005.6 932.5L1007.1 932.2L1008.6 931.9L1010.1 931.7L1011.6 931.5L1013.1 931.3L1014.6 931.2L1016.1 931.1L1017.6 931.1L1019.1 931.1L1020.6 931.2L1022.1 931.4L1023.6 931.6L1025.1 931.8L1026.6 932.1L1028.1 932.4L1029.6 932.7L1031.1 933.1L1032.6 933.5L1034.1 933.9L1035.6 934.3L1037.1 934.8L1038.6 935.4L1040.1 936.0L1041.6 936.6L1043.1 937.3L1044.6 938.0L1046.1 938.8L1047.6 939.6L1049.1 940.4L1050.6 941.3L1052.1 942.1L1053.6 943.0L1055.1 943.9L1056.7 944.9L1058.2 945.8L1059.7 946.8L1061.2 947.9L1062.7 949.0L1064.2 950.1L1065.7 951.3L1067.2 952.4L1068.7 953.6L1070.2 954.8L1071.7 956.0L1073.2 957.2L1074.7 958.5L1076.2 959.7L1077.7 961.0L1079.2 962.3L1080.7 963.6L1082.2 965.0L1083.7 966.3L1085.2 967.7L1086.7 969.1L1088.2 970.5L1089.7 971.9L1091.2 973.3L1092.7 974.7L1094.2 976.1L1095.7 977.4L1097.2 978.8L1098.7 980.1L1100.2 981.4L1101.7 982.7L1103.2 983.9L1104.7 985.1L1106.2 986.4L1107.7 987.6L1109.2 988.8L1110.7 990.0L1112.2 991.1L1113.7 992.3L1115.2 993.5L1116.7 994.6L1118.2 995.8L1119.7 997.0L1121.2 998.1L1122.7 999.3L1124.2 1000.4L1125.7 1001.6L1127.2 1002.8L1128.7 1004.0L1130.2 1005.2L1131.7 1006.4L1133.2 1007.6L1134.7 1008.8L1136.2 1010.0L1137.7 1011.2L1139.2 1012.5L1140.7 1013.7L1142.2 1014.9L1143.7 1016.1L1145.2 1017.2L1146.7 1018.4L1148.2 1019.5L1149.7 1020.7L1151.2 1021.8L1152.7 1022.9L1154.2 1024.1L1155.7 1025.2L1157.2 1026.3L1158.7 1027.4L1160.2 1028.6L1161.7 1029.7L1163.2 1030.9L1164.7 1032.0L1166.2 1033.2L1167.7 1034.4L1169.2 1035.6L1170.7 1036.8L1172.2 1038.0L1173.7 1039.2L1175.2 1040.4L1176.7 1041.6L1178.2 1042.9L1179.7 1044.2L1181.2 1045.5L1182.7 1046.8L1184.2 1048.1L1185.7 1049.5L1187.2 1050.9L1188.7 1052.3L1190.2 1053.7L1191.7 1055.1L1193.2 1056.5L1194.7 1058.0L1196.2 1059.4L1197.7 1060.8L1199.2 1062.2L1200.7 1063.6L1202.2 1065.0L1203.7 1066.4L1205.2 1067.8L1206.7 1069.2L1208.2 1070.5L1209.7 1071.9L1211.2 1073.2L1212.7 1074.6L1214.2 1075.9L1215.7 1077.3L1217.2 1078.6L1218.7 1080.0L1220.2 1081.3L1221.7 1082.6L1223.2 1083.9L1224.7 1085.1L1226.2 1086.4L1227.7 1087.6L1229.2 1088.7L1230.7 1089.8L1232.2 1090.9L1233.7 1091.9L1235.2 1092.9L1236.7 1093.9L1238.2 1094.8L1239.7 1095.7L1241.2 1096.6L1242.7 1097.5L1244.2 1098.3L1245.7 1099.2L1247.2 1100.0L1248.7 1100.7L1250.2 1101.5L1251.7 1102.3L1253.2 1103.0L1254.7 1103.7L1256.2 1104.4L1257.7 1105.0L1259.2 1105.7L1260.7 1106.3L1262.2 1106.9L1263.7 1107.5L1265.2 1108.1L1266.7 1108.6L1268.2 1109.2L1269.7 1109.8L1271.2 1110.3L1272.7 1110.8L1274.2 1111.3L1275.7 1111.8L1277.2 1112.3L1278.7 1112.8L1280.2 1113.2L1281.7 1113.6L1283.2 1114.0L1284.7 1114.4L1286.2 1114.7L1287.7 1115.0L1289.2 1115.3L1290.7 1115.6L1292.2 1115.8L1293.7 1116.1L1295.2 1116.3L1296.7 1116.5L1298.2 1116.7L1299.7 1117.0L1301.2 1117.2L1302.7 1117.4L1304.2 1117.7L1305.7 1117.9L1307.2 1118.1L1308.7 1118.3L1310.2 1118.6L1311.7 1118.8L1313.2 1119.0L1314.7 1119.2L1316.2 1119.4L1317.7 1119.7L1319.2 1119.9L1320.7 1120.1L1322.2 1120.3L1323.7 1120.6L1325.2 1120.8L1326.7 1121.1L1328.2 1121.3L1329.7 1121.6L1331.2 1121.9L1332.7 1122.2L1334.2 1122.5L1335.7 1122.8L1337.2 1123.1L1338.7 1123.4L1340.2 1123.8L1341.7 1124.2L1343.2 1124.6L1344.7 1125.0L1346.3 1125.5L1347.8 1126.0L1349.3 1126.5L1350.8 1127.0L1352.3 1127.6L1353.8 1128.2L1355.3 1128.8L1356.8 1129.4L1358.3 1130.0L1359.8 1130.7L1361.3 1131.3L1362.8 1132.0L1364.3 1132.6L1365.8 1133.2L1367.3 1133.9L1368.8 1134.5L1370.3 1135.2L1371.8 1135.8L1373.3 1136.4L1374.8 1137.0L1376.3 1137.5L1377.8 1138.1L1379.3 1138.6L1380.8 1139.2L1382.3 1139.7L1383.8 1140.2L1385.3 1140.7L1386.8 1141.2L1388.3 1141.7L1389.8 1142.2L1391.3 1142.7L1392.8 1143.2L1394.3 1143.7L1395.8 1144.2L1397.3 1144.7L1398.8 1145.2L1400.3 1145.7L1401.8 1146.1L1403.3 1146.6L1404.8 1147.0L1406.3 1147.5L1407.8 1147.9L1409.3 1148.3L1410.8 1148.7L1412.3 1149.1L1413.8 1149.5L1415.3 1149.9L1416.8 1150.3L1418.3 1150.6L1419.8 1151.0L1421.3 1151.3L1422.8 1151.6L1424.3 1151.9L1425.8 1152.2L1427.3 1152.5L1428.8 1152.8L1430.3 1153.1L1431.8 1153.4L1433.3 1153.6L1434.8 1153.9L1436.3 1154.2L1437.8 1154.4L1439.3 1154.7L1440.8 1154.9L1442.3 1155.1L1443.8 1155.4L1445.3 1155.6L1446.8 1155.8L1448.3 1156.1L1449.8 1156.3L1451.3 1156.5L1452.8 1156.7L1454.3 1156.9L1455.8 1157.2L1457.3 1157.4L1458.8 1157.6L1460.3 1157.8L1461.8 1158.0L1463.3 1158.2L1464.8 1158.4L1466.3 1158.6L1467.8 1158.8L1469.3 1158.9L1470.8 1159.1L1472.3 1159.3L1473.8 1159.5L1475.3 1159.7L1476.8 1159.8L1478.3 1160.0L1479.8 1160.2L1481.3 1160.3L1482.8 1160.5L1484.3 1160.7L1485.8 1160.8L1487.3 1161.0L1488.8 1161.2L1490.3 1161.3L1491.8 1161.5L1493.3 1161.6L1494.8 1161.8L1496.3 1162.0L1497.8 1162.1L1499.3 1162.3L1500.8 1162.4L1502.3 1162.6L1503.8 1162.8L1505.3 1162.9L1506.8 1163.1L1508.3 1163.3L1509.8 1163.4L1511.3 1163.6L1512.8 1163.7L1514.3 1163.9L1515.8 1164.1L1517.3 1164.2L1518.8 1164.4L1520.3 1164.6L1521.8 1164.7L1523.3 1164.9L1524.8 1165.0L1526.3 1165.2L1527.8 1165.3L1529.3 1165.5L1530.8 1165.6L1532.3 1165.7L1533.8 1165.9L1535.3 1166.0L1536.8 1166.1L1538.3 1166.2L1539.8 1166.3L1541.3 1166.4L1542.8 1166.6L1544.3 1166.7L1545.8 1166.8L1547.3 1166.9L1548.8 1167.0L1550.3 1167.1L1551.8 1167.2L1553.3 1167.3L1554.8 1167.4L1556.3 1167.4L1557.8 1167.5L1559.3 1167.6L1560.8 1167.7L1562.3 1167.8L1563.8 1167.9L1565.3 1168.0L1566.8 1168.0L1568.3 1168.1L1569.8 1168.2L1571.3 1168.2L1572.8 1168.3L1574.3 1168.3L1575.8 1168.4L1577.3 1168.4L1578.8 1168.5L1580.3 1168.5L1581.8 1168.5L1583.3 1168.5L1584.8 1168.6L1586.3 1168.6L1587.8 1168.6L1589.3 1168.6L1590.8 1168.7L1592.3 1168.7L1593.8 1168.7L1595.3 1168.7L1596.8 1168.7L1598.3 1168.8L1599.8 1168.8L1601.3 1168.8L1602.8 1168.8L1604.3 1168.8L1605.8 1168.8L1607.3 1168.8L1608.8 1168.9L1610.3 1168.9L1611.8 1168.9L1613.3 1168.9L1614.8 1168.9L1616.3 1168.9L1617.8 1168.9L1619.3 1168.9L1620.8 1168.9L1622.3 1168.9L1623.8 1168.9L1625.3 1168.9L1626.8 1168.9L1628.3 1168.9L1629.8 1168.9L1631.3 1168.9L1632.8 1168.9L1634.3 1168.9L1635.9 1168.9L1637.4 1168.9L1638.9 1168.9L1640.4 1168.9L1641.9 1168.9L1643.4 1168.9L1644.9 1168.9L1646.4 1168.9L1647.9 1168.9L1649.4 1168.9L1650.9 1168.9L1652.4 1168.9L1653.9 1168.9L1655.4 1168.9L1656.9 1168.9L1658.4 1168.9L1659.9 1168.9L1661.4 1168.9L1662.9 1168.9L1664.4 1168.9L1665.9 1168.9L1667.4 1168.9L1668.9 1168.9L1670.4 1168.9L1671.9 1168.9L1673.4 1168.9L1674.9 1168.9L1676.4 1168.9L1677.9 1168.9L1679.4 1168.9L1680.9 1168.9L1682.4 1168.9L1683.9 1168.9L1685.4 1168.9L1686.9 1168.9L1688.4 1168.9L1689.9 1168.9L1691.4 1168.9L1692.9 1168.9L1694.4 1168.9L1695.9 1168.9L1697.4 1168.9L1698.9 1168.9L1700.4 1168.9L1701.9 1168.9L1703.4 1168.9L1704.9 1168.9L1706.4 1168.9L1707.9 1168.9L1709.4 1168.9L1710.9 1168.9L1712.4 1168.9L1713.9 1168.9L1715.4 1168.9L1716.9 1168.9L1718.4 1168.9L1719.9 1168.9L1721.4 1168.9L1722.9 1168.9L1724.4 1168.9L1725.9 1168.9L1727.4 1168.9L1728.9 1168.9L1730.4 1168.9L1731.9 1168.9L1733.4 1168.9L1734.9 1168.9L1736.4 1168.9L1737.9 1168.9L1739.4 1168.9L1740.9 1168.9L1742.4 1168.9L1743.9 1168.9L1745.4 1168.9L1746.9 1168.9L1748.4 1168.9L1749.9 1168.9L1751.4 1168.9L1752.9 1168.9L1754.4 1168.9L1755.9 1168.9L1757.4 1168.9L1758.9 1168.9L1760.4 1168.9L1761.9 1168.9L1763.4 1168.9L1764.9 1168.9L1766.4 1168.9L1767.9 1168.9L1769.4 1168.9L1770.9 1168.9L1772.4 1168.9L1773.9 1168.9L1775.4 1168.9L1776.9 1168.9L1778.4 1168.9L1779.9 1168.9L1781.4 1168.9L1782.9 1168.9L1784.4 1168.9L1785.9 1168.9L1787.4 1168.9L1788.9 1168.9L1790.4 1168.9L1791.9 1168.9L1793.4 1168.9L1794.9 1168.9L1796.4 1168.9L1797.9 1168.9L1799.4 1168.9L1800.9 1168.9L1802.4 1168.9L1803.9 1168.9L1805.4 1168.9L1806.9 1168.9L1808.4 1168.9L1809.9 1168.9L1811.4 1168.9L1812.9 1168.9L1814.4 1168.9L1815.9 1168.9L1817.4 1168.9L1818.9 1168.9L1820.4 1168.9L1821.9 1168.9L1823.4 1168.9L1824.9 1168.9L1826.4 1168.9L1827.9 1168.9L1829.4 1168.9L1830.9 1168.9L1832.4 1168.9L1833.9 1168.9L1835.4 1168.9L1836.9 1168.9L1838.4 1168.9L1839.9 1168.9L1841.4 1168.9L1842.9 1168.9L1844.4 1168.9L1845.9 1168.9L1847.4 1168.9L1848.9 1168.9L1850.4 1168.9L1851.9 1168.9L1853.4 1168.9L1854.9 1168.9L1856.4 1168.9L1857.9 1168.9L1859.4 1168.9L1860.9 1168.9L1862.4 1168.9L1863.9 1168.9L1865.4 1168.9L1866.9 1168.9L1868.4 1168.9L1869.9 1168.9L1871.4 1168.9L1872.9 1168.9L1874.4 1168.9L1875.9 1168.9L1877.4 1168.9L1878.9 1168.9L1880.4 1168.9L1881.9 1168.9L1883.4 1168.9L1884.9 1168.9L1886.4 1168.9L1887.9 1168.9L1889.4 1168.9L1890.9 1168.9L1892.4 1168.9L1893.9 1168.9L1895.4 1168.9L1896.9 1168.9L1898.4 1168.9L1899.9 1168.9L1901.4 1168.9L1902.9 1168.9L1904.4 1168.9L1905.9 1168.9L1907.4 1168.9L1908.9 1168.9L1910.4 1168.9L1911.9 1168.9L1913.4 1168.9L1914.9 1168.9L1916.4 1168.9L1917.9 1168.9L1919.4 1168.9L1920.9 1168.9L1922.4 1168.9L1924.0 1168.9L1925.5 1168.9L1927.0 1168.9L1928.5 1168.9L1930.0 1168.9L1931.5 1168.9L1933.0 1168.9L1934.5 1168.9L1936.0 1168.9L1937.5 1168.9L1939.0 1168.9L1940.5 1168.9L1942.0 1168.9L1943.5 1168.9L1945.0 1168.9L1946.5 1168.9L1948.0 1168.9L1949.5 1168.9L1951.0 1168.9L1952.5 1168.9L1954.0 1168.9L1955.5 1168.9L1957.0 1168.9L1958.5 1168.9L1960.0 1168.9L1961.5 1168.9L1963.0 1168.9L1964.5 1168.9L1966.0 1168.9L1967.5 1168.9L1969.0 1168.9L1970.5 1168.9L1972.0 1168.9L1973.5 1168.9L1975.0 1168.9L1976.5 1168.9L1978.0 1168.9L1979.5 1168.9L1981.0 1168.9L1982.5 1168.9L1984.0 1168.9L1985.5 1168.9L1987.0 1168.9L1988.5 1168.9L1990.0 1168.9L1991.5 1168.9L1993.0 1168.9L1994.5 1168.9L1996.0 1168.9L1997.5 1168.9L1999.0 1168.9L2000.5 1168.9L2002.0 1168.9L2003.5 1168.9L2005.0 1168.9L2006.5 1168.9L2008.0 1168.9L2009.5 1168.9L2011.0 1168.9L2012.5 1168.9L2014.0 1168.9L2015.5 1168.9L2017.0 1168.9L2018.5 1168.9L2020.0 1168.9L2021.5 1168.9L2023.0 1168.9L2024.5 1168.9L2026.0 1168.9L2027.5 1168.9L2029.0 1168.9L2030.5 1168.9L2032.0 1168.9L2033.5 1168.9L2035.0 1168.9L2036.5 1168.9L2038.0 1168.9L2039.5 1168.9L2041.0 1168.9L2042.5 1168.9L2044.0 1168.9L2045.5 1168.9L2047.0 1168.9L2048.5 1168.9L2050.0 1168.9L2051.5 1168.9L2053.0 1168.9L2054.5 1168.9L2056.0 1168.9L2057.5 1168.9L2059.0 1168.9L2060.5 1168.9L2062.0 1168.9L2063.5 1168.9L2065.0 1168.9L2066.5 1168.9L2068.0 1168.9" fill="none" stroke="#000" stroke-width="1.75" stroke-linejoin="round"/>
<path d="M623.0 1168.9L624.5 1168.9L626.0 1168.9L627.5 1168.9L629.0 1168.9L630.5 1168.9L632.0 1168.9L633.5 1168.9L635.0 1168.9L636.5 1168.9L638.0 1168.9L639.5 1168.9L641.0 1168.9L642.5 1168.9L644.0 1168.9L645.5 1168.9L647.0 1168.9L648.5 1168.9L650.0 1168.9L651.5 1168.9L653.0 1168.9L654.5 1168.9L656.0 1168.9L657.5 1168.9L659.0 1168.9L660.5 1168.9L662.0 1168.9L663.5 1168.9L665.0 1168.9L666.5 1168.9L668.0 1168.9L669.5 1168.9L671.0 1168.9L672.5 1168.9L674.0 1168.9L675.5 1168.9L677.0 1168.9L678.5 1168.9L680.0 1168.9L681.5 1168.9L683.0 1168.9L684.5 1168.9L686.0 1168.9L687.5 1168.9L689.0 1168.9L690.5 1168.9L692.0 1168.9L693.5 1168.9L695.0 1168.9L696.5 1168.9L698.0 1168.9L699.5 1168.9L701.0 1168.9L702.5 1168.9L704.0 1168.9L705.5 1168.9L707.0 1168.9L708.5 1168.9L710.0 1168.9L711.5 1168.9L713.0 1168.9L714.5 1168.9L716.0 1168.9L717.5 1168.9L719.0 1168.9L720.5 1168.9L722.0 1168.9L723.5 1168.9L725.0 1168.9L726.5 1168.9L728.0 1168.9L729.5 1168.9L731.0 1168.9L732.5 1168.9L734.0 1168.9L735.5 1168.9L737.0 1168.9L738.5 1168.9L740.0 1168.9L741.5 1168.9L743.0 1168.9L744.5 1168.9L746.0 1168.9L747.5 1168.9L749.0 1168.9L750.5 1168.9L752.0 1168.9L753.5 1168.9L755.0 1168.9L756.5 1168.9L758.0 1168.9L759.5 1168.9L761.0 1168.9L762.5 1168.9L764.0 1168.9L765.5 1168.9L767.0 1168.9L768.6 1168.9L770.1 1168.9L771.6 1168.9L773.1 1168.9L774.6 1168.9L776.1 1168.9L777.6 1168.9L779.1 1168.9L780.6 1168.9L782.1 1168.9L783.6 1168.9L785.1 1168.9L786.6 1168.9L788.1 1168.9L789.6 1168.9L791.1 1168.9L792.6 1168.9L794.1 1168.9L795.6 1168.9L797.1 1168.9L798.6 1168.9L800.1 1168.9L801.6 1168.9L803.1 1168.9L804.6 1168.9L806.1 1168.9L807.6 1168.9L809.1 1168.9L810.6 1168.9L812.1 1168.9L813.6 1168.9L815.1 1168.9L816.6 1168.9L818.1 1168.9L819.6 1168.9L821.1 1168.9L822.6 1168.9L824.1 1168.9L825.6 1168.9L827.1 1168.9L828.6 1168.9L830.1 1168.9L831.6 1168.9L833.1 1168.9L834.6 1168.9L836.1 1168.9L837.6 1168.9L839.1 1168.9L840.6 1168.9L842.1 1168.9L843.6 1168.9L845.1 1168.9L846.6 1168.9L848.1 1168.9L849.6 1168.9L851.1 1168.9L852.6 1168.9L854.1 1168.9L855.6 1168.9L857.1 1168.9L858.6 1168.9L860.1 1168.9L861.6 1168.9L863.1 1168.9L864.6 1168.9L866.1 1168.9L867.6 1168.9L869.1 1168.9L870.6 1168.9L872.1 1168.9L873.6 1168.9L875.1 1168.9L876.6 1168.9L878.1 1168.9L879.6 1168.9L881.1 1168.9L882.6 1168.9L884.1 1168.9L885.6 1168.8L887.1 1168.8L888.6 1168.8L890.1 1168.8L891.6 1168.8L893.1 1168.8L894.6 1168.8L896.1 1168.8L897.6 1168.8L899.1 1168.8L900.6 1168.8L902.1 1168.8L903.6 1168.8L905.1 1168.8L906.6 1168.8L908.1 1168.8L909.6 1168.8L911.1 1168.7L912.6 1168.7L914.1 1168.7L915.6 1168.7L917.1 1168.7L918.6 1168.7L920.1 1168.7L921.6 1168.7L923.1 1168.7L924.6 1168.7L926.1 1168.7L927.6 1168.7L929.1 1168.6L930.6 1168.6L932.1 1168.6L933.6 1168.6L935.1 1168.6L936.6 1168.6L938.1 1168.6L939.6 1168.6L941.1 1168.6L942.6 1168.6L944.1 1168.5L945.6 1168.5L947.1 1168.5L948.6 1168.5L950.1 1168.5L951.6 1168.5L953.1 1168.5L954.6 1168.4L956.1 1168.4L957.6 1168.4L959.1 1168.4L960.6 1168.3L962.1 1168.3L963.6 1168.3L965.1 1168.2L966.6 1168.2L968.1 1168.2L969.6 1168.1L971.1 1168.1L972.6 1168.0L974.1 1168.0L975.6 1168.0L977.1 1167.9L978.6 1167.9L980.1 1167.8L981.6 1167.8L983.1 1167.7L984.6 1167.7L986.1 1167.6L987.6 1167.6L989.1 1167.5L990.6 1167.4L992.1 1167.4L993.6 1167.3L995.1 1167.3L996.6 1167.2L998.1 1167.2L999.6 1167.1L1001.1 1167.1L1002.6 1167.0L1004.1 1166.9L1005.6 1166.9L1007.1 1166.8L1008.6 1166.8L1010.1 1166.7L1011.6 1166.7L1013.1 1166.6L1014.6 1166.5L1016.1 1166.5L1017.6 1166.4L1019.1 1166.3L1020.6 1166.2L1022.1 1166.2L1023.6 1166.1L1025.1 1166.0L1026.6 1165.9L1028.1 1165.9L1029.6 1165.8L1031.1 1165.7L1032.6 1165.6L1034.1 1165.5L1035.6 1165.4L1037.1 1165.3L1038.6 1165.2L1040.1 1165.1L1041.6 1165.0L1043.1 1164.8L1044.6 1164.7L1046.1 1164.6L1047.6 1164.4L1049.1 1164.3L1050.6 1164.1L1052.1 1163.9L1053.6 1163.7L1055.1 1163.6L1056.7 1163.4L1058.2 1163.2L1059.7 1163.0L1061.2 1162.8L1062.7 1162.5L1064.2 1162.3L1065.7 1162.1L1067.2 1161.9L1068.7 1161.6L1070.2 1161.4L1071.7 1161.2L1073.2 1160.9L1074.7 1160.7L1076.2 1160.5L1077.7 1160.2L1079.2 1160.0L1080.7 1159.7L1082.2 1159.5L1083.7 1159.2L1085.2 1158.9L1086.7 1158.6L1088.2 1158.4L1089.7 1158.1L1091.2 1157.8L1092.7 1157.5L1094.2 1157.1L1095.7 1156.8L1097.2 1156.5L1098.7 1156.2L1100.2 1155.8L1101.7 1155.5L1103.2 1155.2L1104.7 1154.8L1106.2 1154.5L1107.7 1154.1L1109.2 1153.8L1110.7 1153.4L1112.2 1153.0L1113.7 1152.7L1115.2 1152.3L1116.7 1152.0L1118.2 1151.6L1119.7 1151.2L1121.2 1150.9L1122.7 1150.5L1124.2 1150.2L1125.7 1149.8L1127.2 1149.4L1128.7 1149.0L1130.2 1148.7L1131.7 1148.3L1133.2 1147.9L1134.7 1147.5L1136.2 1147.1L1137.7 1146.7L1139.2 1146.3L1140.7 1145.9L1142.2 1145.5L1143.7 1145.1L1145.2 1144.7L1146.7 1144.3L1148.2 1143.9L1149.7 1143.5L1151.2 1143.1L1152.7 1142.6L1154.2 1142.2L1155.7 1141.8L1157.2 1141.3L1158.7 1140.9L1160.2 1140.5L1161.7 1140.0L1163.2 1139.6L1164.7 1139.1L1166.2 1138.6L1167.7 1138.2L1169.2 1137.7L1170.7 1137.2L1172.2 1136.7L1173.7 1136.2L1175.2 1135.7L1176.7 1135.2L1178.2 1134.7L1179.7 1134.2L1181.2 1133.7L1182.7 1133.2L1184.2 1132.7L1185.7 1132.2L1187.2 1131.6L1188.7 1131.1L1190.2 1130.6L1191.7 1130.1L1193.2 1129.6L1194.7 1129.0L1196.2 1128.5L1197.7 1128.0L1199.2 1127.5L1200.7 1126.9L1202.2 1126.4L1203.7 1125.9L1205.2 1125.3L1206.7 1124.8L1208.2 1124.2L1209.7 1123.7L1211.2 1123.1L1212.7 1122.6L1214.2 1122.0L1215.7 1121.5L1217.2 1120.9L1218.7 1120.3L1220.2 1119.8L1221.7 1119.2L1223.2 1118.6L1224.7 1118.1L1226.2 1117.5L1227.7 1117.0L1229.2 1116.4L1230.7 1115.9L1232.2 1115.3L1233.7 1114.8L1235.2 1114.2L1236.7 1113.7L1238.2 1113.1L1239.7 1112.6L1241.2 1112.1L1242.7 1111.6L1244.2 1111.1L1245.7 1110.6L1247.2 1110.1L1248.7 1109.6L1250.2 1109.1L1251.7 1108.6L1253.2 1108.1L1254.7 1107.6L1256.2 1107.1L1257.7 1106.6L1259.2 1106.1L1260.7 1105.6L1262.2 1105.1L1263.7 1104.6L1265.2 1104.1L1266.7 1103.6L1268.2 1103.0L1269.7 1102.5L1271.2 1102.0L1272.7 1101.5L1274.2 1101.0L1275.7 1100.5L1277.2 1100.0L1278.7 1099.4L1280.2 1098.9L1281.7 1098.3L1283.2 1097.8L1284.7 1097.2L1286.2 1096.6L1287.7 1096.0L1289.2 1095.3L1290.7 1094.7L1292.2 1094.0L1293.7 1093.3L1295.2 1092.6L1296.7 1091.9L1298.2 1091.1L1299.7 1090.3L1301.2 1089.5L1302.7 1088.7L1304.2 1087.9L1305.7 1087.1L1307.2 1086.2L1308.7 1085.4L1310.2 1084.5L1311.7 1083.7L1313.2 1082.8L1314.7 1082.0L1316.2 1081.1L1317.7 1080.3L1319.2 1079.4L1320.7 1078.6L1322.2 1077.7L1323.7 1076.9L1325.2 1076.0L1326.7 1075.1L1328.2 1074.3L1329.7 1073.4L1331.2 1072.5L1332.7 1071.7L1334.2 1070.8L1335.7 1070.0L1337.2 1069.1L1338.7 1068.3L1340.2 1067.4L1341.7 1066.6L1343.2 1065.8L1344.7 1065.0L1346.3 1064.2L1347.8 1063.4L1349.3 1062.6L1350.8 1061.8L1352.3 1061.0L1353.8 1060.2L1355.3 1059.4L1356.8 1058.6L1358.3 1057.9L1359.8 1057.1L1361.3 1056.3L1362.8 1055.5L1364.3 1054.8L1365.8 1054.0L1367.3 1053.2L1368.8 1052.5L1370.3 1051.7L1371.8 1051.0L1373.3 1050.2L1374.8 1049.5L1376.3 1048.7L1377.8 1048.0L1379.3 1047.3L1380.8 1046.5L1382.3 1045.8L1383.8 1045.0L1385.3 1044.3L1386.8 1043.5L1388.3 1042.7L1389.8 1042.0L1391.3 1041.2L1392.8 1040.4L1394.3 1039.7L1395.8 1038.9L1397.3 1038.2L1398.8 1037.4L1400.3 1036.7L1401.8 1035.9L1403.3 1035.2L1404.8 1034.5L1406.3 1033.8L1407.8 1033.1L1409.3 1032.4L1410.8 1031.8L1412.3 1031.2L1413.8 1030.5L1415.3 1030.0L1416.8 1029.4L1418.3 1028.8L1419.8 1028.3L1421.3 1027.8L1422.8 1027.3L1424.3 1026.8L1425.8 1026.3L1427.3 1025.8L1428.8 1025.4L1430.3 1024.9L1431.8 1024.4L1433.3 1024.0L1434.8 1023.5L1436.3 1023.1L1437.8 1022.7L1439.3 1022.3L1440.8 1021.9L1442.3 1021.6L1443.8 1021.2L1445.3 1020.9L1446.8 1020.6L1448.3 1020.3L1449.8 1020.0L1451.3 1019.8L1452.8 1019.6L1454.3 1019.3L1455.8 1019.1L1457.3 1019.0L1458.8 1018.8L1460.3 1018.6L1461.8 1018.4L1463.3 1018.2L1464.8 1018.1L1466.3 1018.0L1467.8 1017.8L1469.3 1017.7L1470.8 1017.6L1472.3 1017.5L1473.8 1017.5L1475.3 1017.5L1476.8 1017.5L1478.3 1017.5L1479.8 1017.5L1481.3 1017.6L1482.8 1017.7L1484.3 1017.9L1485.8 1018.0L1487.3 1018.2L1488.8 1018.4L1490.3 1018.6L1491.8 1018.8L1493.3 1019.0L1494.8 1019.2L1496.3 1019.5L1497.8 1019.7L1499.3 1019.9L1500.8 1020.2L1502.3 1020.4L1503.8 1020.7L1505.3 1020.9L1506.8 1021.2L1508.3 1021.5L1509.8 1021.8L1511.3 1022.2L1512.8 1022.5L1514.3 1022.8L1515.8 1023.2L1517.3 1023.6L1518.8 1023.9L1520.3 1024.3L1521.8 1024.7L1523.3 1025.1L1524.8 1025.5L1526.3 1025.8L1527.8 1026.2L1529.3 1026.6L1530.8 1027.0L1532.3 1027.4L1533.8 1027.8L1535.3 1028.1L1536.8 1028.5L1538.3 1028.9L1539.8 1029.2L1541.3 1029.6L1542.8 1029.9L1544.3 1030.3L1545.8 1030.6L1547.3 1030.9L1548.8 1031.3L1550.3 1031.6L1551.8 1032.0L1553.3 1032.3L1554.8 1032.7L1556.3 1033.0L1557.8 1033.4L1559.3 1033.7L1560.8 1034.1L1562.3 1034.4L1563.8 1034.8L1565.3 1035.1L1566.8 1035.4L1568.3 1035.7L1569.8 1036.1L1571.3 1036.4L1572.8 1036.7L1574.3 1037.0L1575.8 1037.3L1577.3 1037.6L1578.8 1037.8L1580.3 1038.1L1581.8 1038.4L1583.3 1038.7L1584.8 1038.9L1586.3 1039.2L1587.8 1039.4L1589.3 1039.7L1590.8 1039.9L1592.3 1040.2L1593.8 1040.4L1595.3 1040.7L1596.8 1040.9L1598.3 1041.1L1599.8 1041.4L1601.3 1041.6L1602.8 1041.8L1604.3 1042.0L1605.8 1042.3L1607.3 1042.5L1608.8 1042.7L1610.3 1042.9L1611.8 1043.1L1613.3 1043.2L1614.8 1043.4L1616.3 1043.6L1617.8 1043.8L1619.3 1043.9L1620.8 1044.1L1622.3 1044.2L1623.8 1044.4L1625.3 1044.6L1626.8 1044.7L1628.3 1044.9L1629.8 1045.1L1631.3 1045.2L1632.8 1045.4L1634.3 1045.5L1635.9 1045.6L1637.4 1045.8L1638.9 1045.9L1640.4 1046.0L1641.9 1046.1L1643.4 1046.2L1644.9 1046.3L1646.4 1046.3L1647.9 1046.3L1649.4 1046.4L1650.9 1046.4L1652.4 1046.4L1653.9 1046.4L1655.4 1046.3L1656.9 1046.3L1658.4 1046.3L1659.9 1046.3L1661.4 1046.2L1662.9 1046.2L1664.4 1046.1L1665.9 1046.1L1667.4 1046.0L1668.9 1046.0L1670.4 1045.9L1671.9 1045.9L1673.4 1045.8L1674.9 1045.8L1676.4 1045.7L1677.9 1045.7L1679.4 1045.6L1680.9 1045.6L1682.4 1045.5L1683.9 1045.5L1685.4 1045.4L1686.9 1045.4L1688.4 1045.3L1689.9 1045.3L1691.4 1045.2L1692.9 1045.1L1694.4 1045.1L1695.9 1045.0L1697.4 1045.0L1698.9 1044.9L1700.4 1044.8L1701.9 1044.8L1703.4 1044.7L1704.9 1044.7L1706.4 1044.6L1707.9 1044.6L1709.4 1044.6L1710.9 1044.5L1712.4 1044.5L1713.9 1044.5L1715.4 1044.4L1716.9 1044.4L1718.4 1044.4L1719.9 1044.4L1721.4 1044.4L1722.9 1044.5L1724.4 1044.5L1725.9 1044.5L1727.4 1044.6L1728.9 1044.7L1730.4 1044.7L1731.9 1044.8L1733.4 1044.9L1734.9 1045.0L1736.4 1045.1L1737.9 1045.3L1739.4 1045.4L1740.9 1045.5L1742.4 1045.7L1743.9 1045.8L1745.4 1045.9L1746.9 1046.1L1748.4 1046.2L1749.9 1046.4L1751.4 1046.6L1752.9 1046.8L1754.4 1047.0L1755.9 1047.2L1757.4 1047.5L1758.9 1047.8L1760.4 1048.1L1761.9 1048.4L1763.4 1048.7L1764.9 1049.1L1766.4 1049.4L1767.9 1049.8L1769.4 1050.2L1770.9 1050.5L1772.4 1050.9L1773.9 1051.3L1775.4 1051.7L1776.9 1052.2L1778.4 1052.6L1779.9 1053.0L1781.4 1053.4L1782.9 1053.9L1784.4 1054.3L1785.9 1054.8L1787.4 1055.2L1788.9 1055.7L1790.4 1056.2L1791.9 1056.8L1793.4 1057.3L1794.9 1057.8L1796.4 1058.4L1797.9 1058.9L1799.4 1059.5L1800.9 1060.1L1802.4 1060.7L1803.9 1061.3L1805.4 1061.9L1806.9 1062.5L1808.4 1063.1L1809.9 1063.7L1811.4 1064.4L1812.9 1065.0L1814.4 1065.6L1815.9 1066.3L1817.4 1066.9L1818.9 1067.5L1820.4 1068.2L1821.9 1068.9L1823.4 1069.5L1824.9 1070.2L1826.4 1070.9L1827.9 1071.6L1829.4 1072.3L1830.9 1073.1L1832.4 1073.8L1833.9 1074.6L1835.4 1075.3L1836.9 1076.1L1838.4 1076.8L1839.9 1077.6L1841.4 1078.4L1842.9 1079.2L1844.4 1079.9L1845.9 1080.7L1847.4 1081.5L1848.9 1082.3L1850.4 1083.1L1851.9 1083.9L1853.4 1084.6L1854.9 1085.4L1856.4 1086.2L1857.9 1086.9L1859.4 1087.7L1860.9 1088.5L1862.4 1089.2L1863.9 1090.0L1865.4 1090.7L1866.9 1091.5L1868.4 1092.3L1869.9 1093.0L1871.4 1093.8L1872.9 1094.5L1874.4 1095.3L1875.9 1096.1L1877.4 1096.8L1878.9 1097.6L1880.4 1098.3L1881.9 1099.1L1883.4 1099.9L1884.9 1100.6L1886.4 1101.4L1887.9 1102.1L1889.4 1102.9L1890.9 1103.6L1892.4 1104.3L1893.9 1105.1L1895.4 1105.8L1896.9 1106.5L1898.4 1107.2L1899.9 1108.0L1901.4 1108.7L1902.9 1109.4L1904.4 1110.1L1905.9 1110.8L1907.4 1111.5L1908.9 1112.2L1910.4 1112.9L1911.9 1113.6L1913.4 1114.3L1914.9 1115.0L1916.4 1115.7L1917.9 1116.4L1919.4 1117.1L1920.9 1117.7L1922.4 1118.4L1924.0 1119.1L1925.5 1119.8L1927.0 1120.4L1928.5 1121.1L1930.0 1121.7L1931.5 1122.4L1933.0 1123.0L1934.5 1123.7L1936.0 1124.3L1937.5 1124.9L1939.0 1125.6L1940.5 1126.2L1942.0 1126.8L1943.5 1127.4L1945.0 1128.0L1946.5 1128.6L1948.0 1129.2L1949.5 1129.8L1951.0 1130.4L1952.5 1131.0L1954.0 1131.6L1955.5 1132.2L1957.0 1132.8L1958.5 1133.4L1960.0 1133.9L1961.5 1134.5L1963.0 1135.1L1964.5 1135.6L1966.0 1136.2L1967.5 1136.7L1969.0 1137.3L1970.5 1137.8L1972.0 1138.3L1973.5 1138.8L1975.0 1139.3L1976.5 1139.8L1978.0 1140.3L1979.5 1140.8L1981.0 1141.3L1982.5 1141.8L1984.0 1142.2L1985.5 1142.7L1987.0 1143.2L1988.5 1143.6L1990.0 1144.1L1991.5 1144.5L1993.0 1145.0L1994.5 1145.4L1996.0 1145.9L1997.5 1146.3L1999.0 1146.7L2000.5 1147.2L2002.0 1147.6L2003.5 1148.0L2005.0 1148.4L2006.5 1148.8L2008.0 1149.2L2009.5 1149.6L2011.0 1149.9L2012.5 1150.3L2014.0 1150.6L2015.5 1151.0L2017.0 1151.3L2018.5 1151.7L2020.0 1152.0L2021.5 1152.3L2023.0 1152.6L2024.5 1152.9L2026.0 1153.2L2027.5 1153.5L2029.0 1153.8L2030.5 1154.1L2032.0 1154.4L2033.5 1154.7L2035.0 1155.0L2036.5 1155.3L2038.0 1155.5L2039.5 1155.8L2041.0 1156.1L2042.5 1156.3L2044.0 1156.6L2045.5 1156.9L2047.0 1157.1L2048.5 1157.3L2050.0 1157.6L2051.5 1157.8L2053.0 1158.0L2054.5 1158.3L2056.0 1158.5L2057.5 1158.7L2059.0 1158.9L2060.5 1159.1L2062.0 1159.3L2063.5 1159.5L2065.0 1159.7L2066.5 1159.8L2068.0 1160.0 L2068.0 1168.9 L623.0 1168.9 Z" fill="#6C9AF5" fill-opacity="0.2" stroke="none"/>
<path d="M623.0 1168.9L624.5 1168.9L626.0 1168.9L627.5 1168.9L629.0 1168.9L630.5 1168.9L632.0 1168.9L633.5 1168.9L635.0 1168.9L636.5 1168.9L638.0 1168.9L639.5 1168.9L641.0 1168.9L642.5 1168.9L644.0 1168.9L645.5 1168.9L647.0 1168.9L648.5 1168.9L650.0 1168.9L651.5 1168.9L653.0 1168.9L654.5 1168.9L656.0 1168.9L657.5 1168.9L659.0 1168.9L660.5 1168.9L662.0 1168.9L663.5 1168.9L665.0 1168.9L666.5 1168.9L668.0 1168.9L669.5 1168.9L671.0 1168.9L672.5 1168.9L674.0 1168.9L675.5 1168.9L677.0 1168.9L678.5 1168.9L680.0 1168.9L681.5 1168.9L683.0 1168.9L684.5 1168.9L686.0 1168.9L687.5 1168.9L689.0 1168.9L690.5 1168.9L692.0 1168.9L693.5 1168.9L695.0 1168.9L696.5 1168.9L698.0 1168.9L699.5 1168.9L701.0 1168.9L702.5 1168.9L704.0 1168.9L705.5 1168.9L707.0 1168.9L708.5 1168.9L710.0 1168.9L711.5 1168.9L713.0 1168.9L714.5 1168.9L716.0 1168.9L717.5 1168.9L719.0 1168.9L720.5 1168.9L722.0 1168.9L723.5 1168.9L725.0 1168.9L726.5 1168.9L728.0 1168.9L729.5 1168.9L731.0 1168.9L732.5 1168.9L734.0 1168.9L735.5 1168.9L737.0 1168.9L738.5 1168.9L740.0 1168.9L741.5 1168.9L743.0 1168.9L744.5 1168.9L746.0 1168.9L747.5 1168.9L749.0 1168.9L750.5 1168.9L752.0 1168.9L753.5 1168.9L755.0 1168.9L756.5 1168.9L758.0 1168.9L759.5 1168.9L761.0 1168.9L762.5 1168.9L764.0 1168.9L765.5 1168.9L767.0 1168.9L768.6 1168.9L770.1 1168.9L771.6 1168.9L773.1 1168.9L774.6 1168.9L776.1 1168.9L777.6 1168.9L779.1 1168.9L780.6 1168.9L782.1 1168.9L783.6 1168.9L785.1 1168.9L786.6 1168.9L788.1 1168.9L789.6 1168.9L791.1 1168.9L792.6 1168.9L794.1 1168.9L795.6 1168.9L797.1 1168.9L798.6 1168.9L800.1 1168.9L801.6 1168.9L803.1 1168.9L804.6 1168.9L806.1 1168.9L807.6 1168.9L809.1 1168.9L810.6 1168.9L812.1 1168.9L813.6 1168.9L815.1 1168.9L816.6 1168.9L818.1 1168.9L819.6 1168.9L821.1 1168.9L822.6 1168.9L824.1 1168.9L825.6 1168.9L827.1 1168.9L828.6 1168.9L830.1 1168.9L831.6 1168.9L833.1 1168.9L834.6 1168.9L836.1 1168.9L837.6 1168.9L839.1 1168.9L840.6 1168.9L842.1 1168.9L843.6 1168.9L845.1 1168.9L846.6 1168.9L848.1 1168.9L849.6 1168.9L851.1 1168.9L852.6 1168.9L854.1 1168.9L855.6 1168.9L857.1 1168.9L858.6 1168.9L860.1 1168.9L861.6 1168.9L863.1 1168.9L864.6 1168.9L866.1 1168.9L867.6 1168.9L869.1 1168.9L870.6 1168.9L872.1 1168.9L873.6 1168.9L875.1 1168.9L876.6 1168.9L878.1 1168.9L879.6 1168.9L881.1 1168.9L882.6 1168.9L884.1 1168.9L885.6 1168.8L887.1 1168.8L888.6 1168.8L890.1 1168.8L891.6 1168.8L893.1 1168.8L894.6 1168.8L896.1 1168.8L897.6 1168.8L899.1 1168.8L900.6 1168.8L902.1 1168.8L903.6 1168.8L905.1 1168.8L906.6 1168.8L908.1 1168.8L909.6 1168.8L911.1 1168.7L912.6 1168.7L914.1 1168.7L915.6 1168.7L917.1 1168.7L918.6 1168.7L920.1 1168.7L921.6 1168.7L923.1 1168.7L924.6 1168.7L926.1 1168.7L927.6 1168.7L929.1 1168.6L930.6 1168.6L932.1 1168.6L933.6 1168.6L935.1 1168.6L936.6 1168.6L938.1 1168.6L939.6 1168.6L941.1 1168.6L942.6 1168.6L944.1 1168.5L945.6 1168.5L947.1 1168.5L948.6 1168.5L950.1 1168.5L951.6 1168.5L953.1 1168.5L954.6 1168.4L956.1 1168.4L957.6 1168.4L959.1 1168.4L960.6 1168.3L962.1 1168.3L963.6 1168.3L965.1 1168.2L966.6 1168.2L968.1 1168.2L969.6 1168.1L971.1 1168.1L972.6 1168.0L974.1 1168.0L975.6 1168.0L977.1 1167.9L978.6 1167.9L980.1 1167.8L981.6 1167.8L983.1 1167.7L984.6 1167.7L986.1 1167.6L987.6 1167.6L989.1 1167.5L990.6 1167.4L992.1 1167.4L993.6 1167.3L995.1 1167.3L996.6 1167.2L998.1 1167.2L999.6 1167.1L1001.1 1167.1L1002.6 1167.0L1004.1 1166.9L1005.6 1166.9L1007.1 1166.8L1008.6 1166.8L1010.1 1166.7L1011.6 1166.7L1013.1 1166.6L1014.6 1166.5L1016.1 1166.5L1017.6 1166.4L1019.1 1166.3L1020.6 1166.2L1022.1 1166.2L1023.6 1166.1L1025.1 1166.0L1026.6 1165.9L1028.1 1165.9L1029.6 1165.8L1031.1 1165.7L1032.6 1165.6L1034.1 1165.5L1035.6 1165.4L1037.1 1165.3L1038.6 1165.2L1040.1 1165.1L1041.6 1165.0L1043.1 1164.8L1044.6 1164.7L1046.1 1164.6L1047.6 1164.4L1049.1 1164.3L1050.6 1164.1L1052.1 1163.9L1053.6 1163.7L1055.1 1163.6L1056.7 1163.4L1058.2 1163.2L1059.7 1163.0L1061.2 1162.8L1062.7 1162.5L1064.2 1162.3L1065.7 1162.1L1067.2 1161.9L1068.7 1161.6L1070.2 1161.4L1071.7 1161.2L1073.2 1160.9L1074.7 1160.7L1076.2 1160.5L1077.7 1160.2L1079.2 1160.0L1080.7 1159.7L1082.2 1159.5L1083.7 1159.2L1085.2 1158.9L1086.7 1158.6L1088.2 1158.4L1089.7 1158.1L1091.2 1157.8L1092.7 1157.5L1094.2 1157.1L1095.7 1156.8L1097.2 1156.5L1098.7 1156.2L1100.2 1155.8L1101.7 1155.5L1103.2 1155.2L1104.7 1154.8L1106.2 1154.5L1107.7 1154.1L1109.2 1153.8L1110.7 1153.4L1112.2 1153.0L1113.7 1152.7L1115.2 1152.3L1116.7 1152.0L1118.2 1151.6L1119.7 1151.2L1121.2 1150.9L1122.7 1150.5L1124.2 1150.2L1125.7 1149.8L1127.2 1149.4L1128.7 1149.0L1130.2 1148.7L1131.7 1148.3L1133.2 1147.9L1134.7 1147.5L1136.2 1147.1L1137.7 1146.7L1139.2 1146.3L1140.7 1145.9L1142.2 1145.5L1143.7 1145.1L1145.2 1144.7L1146.7 1144.3L1148.2 1143.9L1149.7 1143.5L1151.2 1143.1L1152.7 1142.6L1154.2 1142.2L1155.7 1141.8L1157.2 1141.3L1158.7 1140.9L1160.2 1140.5L1161.7 1140.0L1163.2 1139.6L1164.7 1139.1L1166.2 1138.6L1167.7 1138.2L1169.2 1137.7L1170.7 1137.2L1172.2 1136.7L1173.7 1136.2L1175.2 1135.7L1176.7 1135.2L1178.2 1134.7L1179.7 1134.2L1181.2 1133.7L1182.7 1133.2L1184.2 1132.7L1185.7 1132.2L1187.2 1131.6L1188.7 1131.1L1190.2 1130.6L1191.7 1130.1L1193.2 1129.6L1194.7 1129.0L1196.2 1128.5L1197.7 1128.0L1199.2 1127.5L1200.7 1126.9L1202.2 1126.4L1203.7 1125.9L1205.2 1125.3L1206.7 1124.8L1208.2 1124.2L1209.7 1123.7L1211.2 1123.1L1212.7 1122.6L1214.2 1122.0L1215.7 1121.5L1217.2 1120.9L1218.7 1120.3L1220.2 1119.8L1221.7 1119.2L1223.2 1118.6L1224.7 1118.1L1226.2 1117.5L1227.7 1117.0L1229.2 1116.4L1230.7 1115.9L1232.2 1115.3L1233.7 1114.8L1235.2 1114.2L1236.7 1113.7L1238.2 1113.1L1239.7 1112.6L1241.2 1112.1L1242.7 1111.6L1244.2 1111.1L1245.7 1110.6L1247.2 1110.1L1248.7 1109.6L1250.2 1109.1L1251.7 1108.6L1253.2 1108.1L1254.7 1107.6L1256.2 1107.1L1257.7 1106.6L1259.2 1106.1L1260.7 1105.6L1262.2 1105.1L1263.7 1104.6L1265.2 1104.1L1266.7 1103.6L1268.2 1103.0L1269.7 1102.5L1271.2 1102.0L1272.7 1101.5L1274.2 1101.0L1275.7 1100.5L1277.2 1100.0L1278.7 1099.4L1280.2 1098.9L1281.7 1098.3L1283.2 1097.8L1284.7 1097.2L1286.2 1096.6L1287.7 1096.0L1289.2 1095.3L1290.7 1094.7L1292.2 1094.0L1293.7 1093.3L1295.2 1092.6L1296.7 1091.9L1298.2 1091.1L1299.7 1090.3L1301.2 1089.5L1302.7 1088.7L1304.2 1087.9L1305.7 1087.1L1307.2 1086.2L1308.7 1085.4L1310.2 1084.5L1311.7 1083.7L1313.2 1082.8L1314.7 1082.0L1316.2 1081.1L1317.7 1080.3L1319.2 1079.4L1320.7 1078.6L1322.2 1077.7L1323.7 1076.9L1325.2 1076.0L1326.7 1075.1L1328.2 1074.3L1329.7 1073.4L1331.2 1072.5L1332.7 1071.7L1334.2 1070.8L1335.7 1070.0L1337.2 1069.1L1338.7 1068.3L1340.2 1067.4L1341.7 1066.6L1343.2 1065.8L1344.7 1065.0L1346.3 1064.2L1347.8 1063.4L1349.3 1062.6L1350.8 1061.8L1352.3 1061.0L1353.8 1060.2L1355.3 1059.4L1356.8 1058.6L1358.3 1057.9L1359.8 1057.1L1361.3 1056.3L1362.8 1055.5L1364.3 1054.8L1365.8 1054.0L1367.3 1053.2L1368.8 1052.5L1370.3 1051.7L1371.8 1051.0L1373.3 1050.2L1374.8 1049.5L1376.3 1048.7L1377.8 1048.0L1379.3 1047.3L1380.8 1046.5L1382.3 1045.8L1383.8 1045.0L1385.3 1044.3L1386.8 1043.5L1388.3 1042.7L1389.8 1042.0L1391.3 1041.2L1392.8 1040.4L1394.3 1039.7L1395.8 1038.9L1397.3 1038.2L1398.8 1037.4L1400.3 1036.7L1401.8 1035.9L1403.3 1035.2L1404.8 1034.5L1406.3 1033.8L1407.8 1033.1L1409.3 1032.4L1410.8 1031.8L1412.3 1031.2L1413.8 1030.5L1415.3 1030.0L1416.8 1029.4L1418.3 1028.8L1419.8 1028.3L1421.3 1027.8L1422.8 1027.3L1424.3 1026.8L1425.8 1026.3L1427.3 1025.8L1428.8 1025.4L1430.3 1024.9L1431.8 1024.4L1433.3 1024.0L1434.8 1023.5L1436.3 1023.1L1437.8 1022.7L1439.3 1022.3L1440.8 1021.9L1442.3 1021.6L1443.8 1021.2L1445.3 1020.9L1446.8 1020.6L1448.3 1020.3L1449.8 1020.0L1451.3 1019.8L1452.8 1019.6L1454.3 1019.3L1455.8 1019.1L1457.3 1019.0L1458.8 1018.8L1460.3 1018.6L1461.8 1018.4L1463.3 1018.2L1464.8 1018.1L1466.3 1018.0L1467.8 1017.8L1469.3 1017.7L1470.8 1017.6L1472.3 1017.5L1473.8 1017.5L1475.3 1017.5L1476.8 1017.5L1478.3 1017.5L1479.8 1017.5L1481.3 1017.6L1482.8 1017.7L1484.3 1017.9L1485.8 1018.0L1487.3 1018.2L1488.8 1018.4L1490.3 1018.6L1491.8 1018.8L1493.3 1019.0L1494.8 1019.2L1496.3 1019.5L1497.8 1019.7L1499.3 1019.9L1500.8 1020.2L1502.3 1020.4L1503.8 1020.7L1505.3 1020.9L1506.8 1021.2L1508.3 1021.5L1509.8 1021.8L1511.3 1022.2L1512.8 1022.5L1514.3 1022.8L1515.8 1023.2L1517.3 1023.6L1518.8 1023.9L1520.3 1024.3L1521.8 1024.7L1523.3 1025.1L1524.8 1025.5L1526.3 1025.8L1527.8 1026.2L1529.3 1026.6L1530.8 1027.0L1532.3 1027.4L1533.8 1027.8L1535.3 1028.1L1536.8 1028.5L1538.3 1028.9L1539.8 1029.2L1541.3 1029.6L1542.8 1029.9L1544.3 1030.3L1545.8 1030.6L1547.3 1030.9L1548.8 1031.3L1550.3 1031.6L1551.8 1032.0L1553.3 1032.3L1554.8 1032.7L1556.3 1033.0L1557.8 1033.4L1559.3 1033.7L1560.8 1034.1L1562.3 1034.4L1563.8 1034.8L1565.3 1035.1L1566.8 1035.4L1568.3 1035.7L1569.8 1036.1L1571.3 1036.4L1572.8 1036.7L1574.3 1037.0L1575.8 1037.3L1577.3 1037.6L1578.8 1037.8L1580.3 1038.1L1581.8 1038.4L1583.3 1038.7L1584.8 1038.9L1586.3 1039.2L1587.8 1039.4L1589.3 1039.7L1590.8 1039.9L1592.3 1040.2L1593.8 1040.4L1595.3 1040.7L1596.8 1040.9L1598.3 1041.1L1599.8 1041.4L1601.3 1041.6L1602.8 1041.8L1604.3 1042.0L1605.8 1042.3L1607.3 1042.5L1608.8 1042.7L1610.3 1042.9L1611.8 1043.1L1613.3 1043.2L1614.8 1043.4L1616.3 1043.6L1617.8 1043.8L1619.3 1043.9L1620.8 1044.1L1622.3 1044.2L1623.8 1044.4L1625.3 1044.6L1626.8 1044.7L1628.3 1044.9L1629.8 1045.1L1631.3 1045.2L1632.8 1045.4L1634.3 1045.5L1635.9 1045.6L1637.4 1045.8L1638.9 1045.9L1640.4 1046.0L1641.9 1046.1L1643.4 1046.2L1644.9 1046.3L1646.4 1046.3L1647.9 1046.3L1649.4 1046.4L1650.9 1046.4L1652.4 1046.4L1653.9 1046.4L1655.4 1046.3L1656.9 1046.3L1658.4 1046.3L1659.9 1046.3L1661.4 1046.2L1662.9 1046.2L1664.4 1046.1L1665.9 1046.1L1667.4 1046.0L1668.9 1046.0L1670.4 1045.9L1671.9 1045.9L1673.4 1045.8L1674.9 1045.8L1676.4 1045.7L1677.9 1045.7L1679.4 1045.6L1680.9 1045.6L1682.4 1045.5L1683.9 1045.5L1685.4 1045.4L1686.9 1045.4L1688.4 1045.3L1689.9 1045.3L1691.4 1045.2L1692.9 1045.1L1694.4 1045.1L1695.9 1045.0L1697.4 1045.0L1698.9 1044.9L1700.4 1044.8L1701.9 1044.8L1703.4 1044.7L1704.9 1044.7L1706.4 1044.6L1707.9 1044.6L1709.4 1044.6L1710.9 1044.5L1712.4 1044.5L1713.9 1044.5L1715.4 1044.4L1716.9 1044.4L1718.4 1044.4L1719.9 1044.4L1721.4 1044.4L1722.9 1044.5L1724.4 1044.5L1725.9 1044.5L1727.4 1044.6L1728.9 1044.7L1730.4 1044.7L1731.9 1044.8L1733.4 1044.9L1734.9 1045.0L1736.4 1045.1L1737.9 1045.3L1739.4 1045.4L1740.9 1045.5L1742.4 1045.7L1743.9 1045.8L1745.4 1045.9L1746.9 1046.1L1748.4 1046.2L1749.9 1046.4L1751.4 1046.6L1752.9 1046.8L1754.4 1047.0L1755.9 1047.2L1757.4 1047.5L1758.9 1047.8L1760.4 1048.1L1761.9 1048.4L1763.4 1048.7L1764.9 1049.1L1766.4 1049.4L1767.9 1049.8L1769.4 1050.2L1770.9 1050.5L1772.4 1050.9L1773.9 1051.3L1775.4 1051.7L1776.9 1052.2L1778.4 1052.6L1779.9 1053.0L1781.4 1053.4L1782.9 1053.9L1784.4 1054.3L1785.9 1054.8L1787.4 1055.2L1788.9 1055.7L1790.4 1056.2L1791.9 1056.8L1793.4 1057.3L1794.9 1057.8L1796.4 1058.4L1797.9 1058.9L1799.4 1059.5L1800.9 1060.1L1802.4 1060.7L1803.9 1061.3L1805.4 1061.9L1806.9 1062.5L1808.4 1063.1L1809.9 1063.7L1811.4 1064.4L1812.9 1065.0L1814.4 1065.6L1815.9 1066.3L1817.4 1066.9L1818.9 1067.5L1820.4 1068.2L1821.9 1068.9L1823.4 1069.5L1824.9 1070.2L1826.4 1070.9L1827.9 1071.6L1829.4 1072.3L1830.9 1073.1L1832.4 1073.8L1833.9 1074.6L1835.4 1075.3L1836.9 1076.1L1838.4 1076.8L1839.9 1077.6L1841.4 1078.4L1842.9 1079.2L1844.4 1079.9L1845.9 1080.7L1847.4 1081.5L1848.9 1082.3L1850.4 1083.1L1851.9 1083.9L1853.4 1084.6L1854.9 1085.4L1856.4 1086.2L1857.9 1086.9L1859.4 1087.7L1860.9 1088.5L1862.4 1089.2L1863.9 1090.0L1865.4 1090.7L1866.9 1091.5L1868.4 1092.3L1869.9 1093.0L1871.4 1093.8L1872.9 1094.5L1874.4 1095.3L1875.9 1096.1L1877.4 1096.8L1878.9 1097.6L1880.4 1098.3L1881.9 1099.1L1883.4 1099.9L1884.9 1100.6L1886.4 1101.4L1887.9 1102.1L1889.4 1102.9L1890.9 1103.6L1892.4 1104.3L1893.9 1105.1L1895.4 1105.8L1896.9 1106.5L1898.4 1107.2L1899.9 1108.0L1901.4 1108.7L1902.9 1109.4L1904.4 1110.1L1905.9 1110.8L1907.4 1111.5L1908.9 1112.2L1910.4 1112.9L1911.9 1113.6L1913.4 1114.3L1914.9 1115.0L1916.4 1115.7L1917.9 1116.4L1919.4 1117.1L1920.9 1117.7L1922.4 1118.4L1924.0 1119.1L1925.5 1119.8L1927.0 1120.4L1928.5 1121.1L1930.0 1121.7L1931.5 1122.4L1933.0 1123.0L1934.5 1123.7L1936.0 1124.3L1937.5 1124.9L1939.0 1125.6L1940.5 1126.2L1942.0 1126.8L1943.5 1127.4L1945.0 1128.0L1946.5 1128.6L1948.0 1129.2L1949.5 1129.8L1951.0 1130.4L1952.5 1131.0L1954.0 1131.6L1955.5 1132.2L1957.0 1132.8L1958.5 1133.4L1960.0 1133.9L1961.5 1134.5L1963.0 1135.1L1964.5 1135.6L1966.0 1136.2L1967.5 1136.7L1969.0 1137.3L1970.5 1137.8L1972.0 1138.3L1973.5 1138.8L1975.0 1139.3L1976.5 1139.8L1978.0 1140.3L1979.5 1140.8L1981.0 1141.3L1982.5 1141.8L1984.0 1142.2L1985.5 1142.7L1987.0 1143.2L1988.5 1143.6L1990.0 1144.1L1991.5 1144.5L1993.0 1145.0L1994.5 1145.4L1996.0 1145.9L1997.5 1146.3L1999.0 1146.7L2000.5 1147.2L2002.0 1147.6L2003.5 1148.0L2005.0 1148.4L2006.5 1148.8L2008.0 1149.2L2009.5 1149.6L2011.0 1149.9L2012.5 1150.3L2014.0 1150.6L2015.5 1151.0L2017.0 1151.3L2018.5 1151.7L2020.0 1152.0L2021.5 1152.3L2023.0 1152.6L2024.5 1152.9L2026.0 1153.2L2027.5 1153.5L2029.0 1153.8L2030.5 1154.1L2032.0 1154.4L2033.5 1154.7L2035.0 1155.0L2036.5 1155.3L2038.0 1155.5L2039.5 1155.8L2041.0 1156.1L2042.5 1156.3L2044.0 1156.6L2045.5 1156.9L2047.0 1157.1L2048.5 1157.3L2050.0 1157.6L2051.5 1157.8L2053.0 1158.0L2054.5 1158.3L2056.0 1158.5L2057.5 1158.7L2059.0 1158.9L2060.5 1159.1L2062.0 1159.3L2063.5 1159.5L2065.0 1159.7L2066.5 1159.8L2068.0 1160.0" fill="none" stroke="#000" stroke-width="1.75" stroke-linejoin="round"/>
<rect x="551.2" y="919.9" width="1588.1000000000001" height="260.19999999999993" fill="none" stroke="#3a3a3a" stroke-width="1.5"/>
<line x1="743.0" y1="1180.1" x2="743.0" y2="1187.6" stroke="#333" stroke-width="1.9"/>
<text x="743.0" y="1206.5" text-anchor="middle" class="ax">3000</text>
<line x1="1144.6" y1="1180.1" x2="1144.6" y2="1187.6" stroke="#333" stroke-width="1.9"/>
<text x="1144.6" y="1206.5" text-anchor="middle" class="ax">4000</text>
<line x1="1546.2" y1="1180.1" x2="1546.2" y2="1187.6" stroke="#333" stroke-width="1.9"/>
<text x="1546.2" y="1206.5" text-anchor="middle" class="ax">5000</text>
<line x1="1947.8" y1="1180.1" x2="1947.8" y2="1187.6" stroke="#333" stroke-width="1.9"/>
<text x="1947.8" y="1206.5" text-anchor="middle" class="ax">6000</text>
<line x1="543.7" y1="1168.9" x2="551.2" y2="1168.9" stroke="#333" stroke-width="1.9"/>
<text x="538.5" y="1175.7" text-anchor="end" class="ax">0e+00</text>
<line x1="543.7" y1="1104.3" x2="551.2" y2="1104.3" stroke="#333" stroke-width="1.9"/>
<text x="538.5" y="1111.1" text-anchor="end" class="ax">3e-04</text>
<line x1="543.7" y1="1039.7" x2="551.2" y2="1039.7" stroke="#333" stroke-width="1.9"/>
<text x="538.5" y="1046.5" text-anchor="end" class="ax">6e-04</text>
<line x1="543.7" y1="975.0" x2="551.2" y2="975.0" stroke="#333" stroke-width="1.9"/>
<text x="538.5" y="981.8" text-anchor="end" class="ax">9e-04</text>
<text x="2179.4" y="1011.6" class="lt">species</text>
<rect x="2180.3" y="1028.1000000000001" width="25" height="25.8" fill="#fff" />
<rect x="2180.3" y="1028.1000000000001" width="25" height="25.8" fill="#E27B70" fill-opacity="0.2" stroke="#000" stroke-width="1.8"/>
<text x="2220.7000000000003" y="1048.0" class="ll">Adelie</text>
<rect x="2180.3" y="1055.7" width="25" height="25.8" fill="#fff" />
<rect x="2180.3" y="1055.7" width="25" height="25.8" fill="#24B441" fill-opacity="0.2" stroke="#000" stroke-width="1.8"/>
<text x="2220.7000000000003" y="1075.6" class="ll">Chinstrap</text>
<rect x="2180.3" y="1083.3000000000002" width="25" height="25.8" fill="#fff" />
<rect x="2180.3" y="1083.3000000000002" width="25" height="25.8" fill="#6C9AF5" fill-opacity="0.2" stroke="#000" stroke-width="1.8"/>
<text x="2220.7000000000003" y="1103.2" class="ll">Gentoo</text>
</svg>
<svg class="abs" style="left:2360px;top:1250px" width="40" height="37" viewBox="2360 1250 40 37">
  <path d="M2400 1268 A29.3 29.3 0 0 1 2393 1287 L2400 1287 Z" fill="#000"/>
</svg>
</body>
</html>
